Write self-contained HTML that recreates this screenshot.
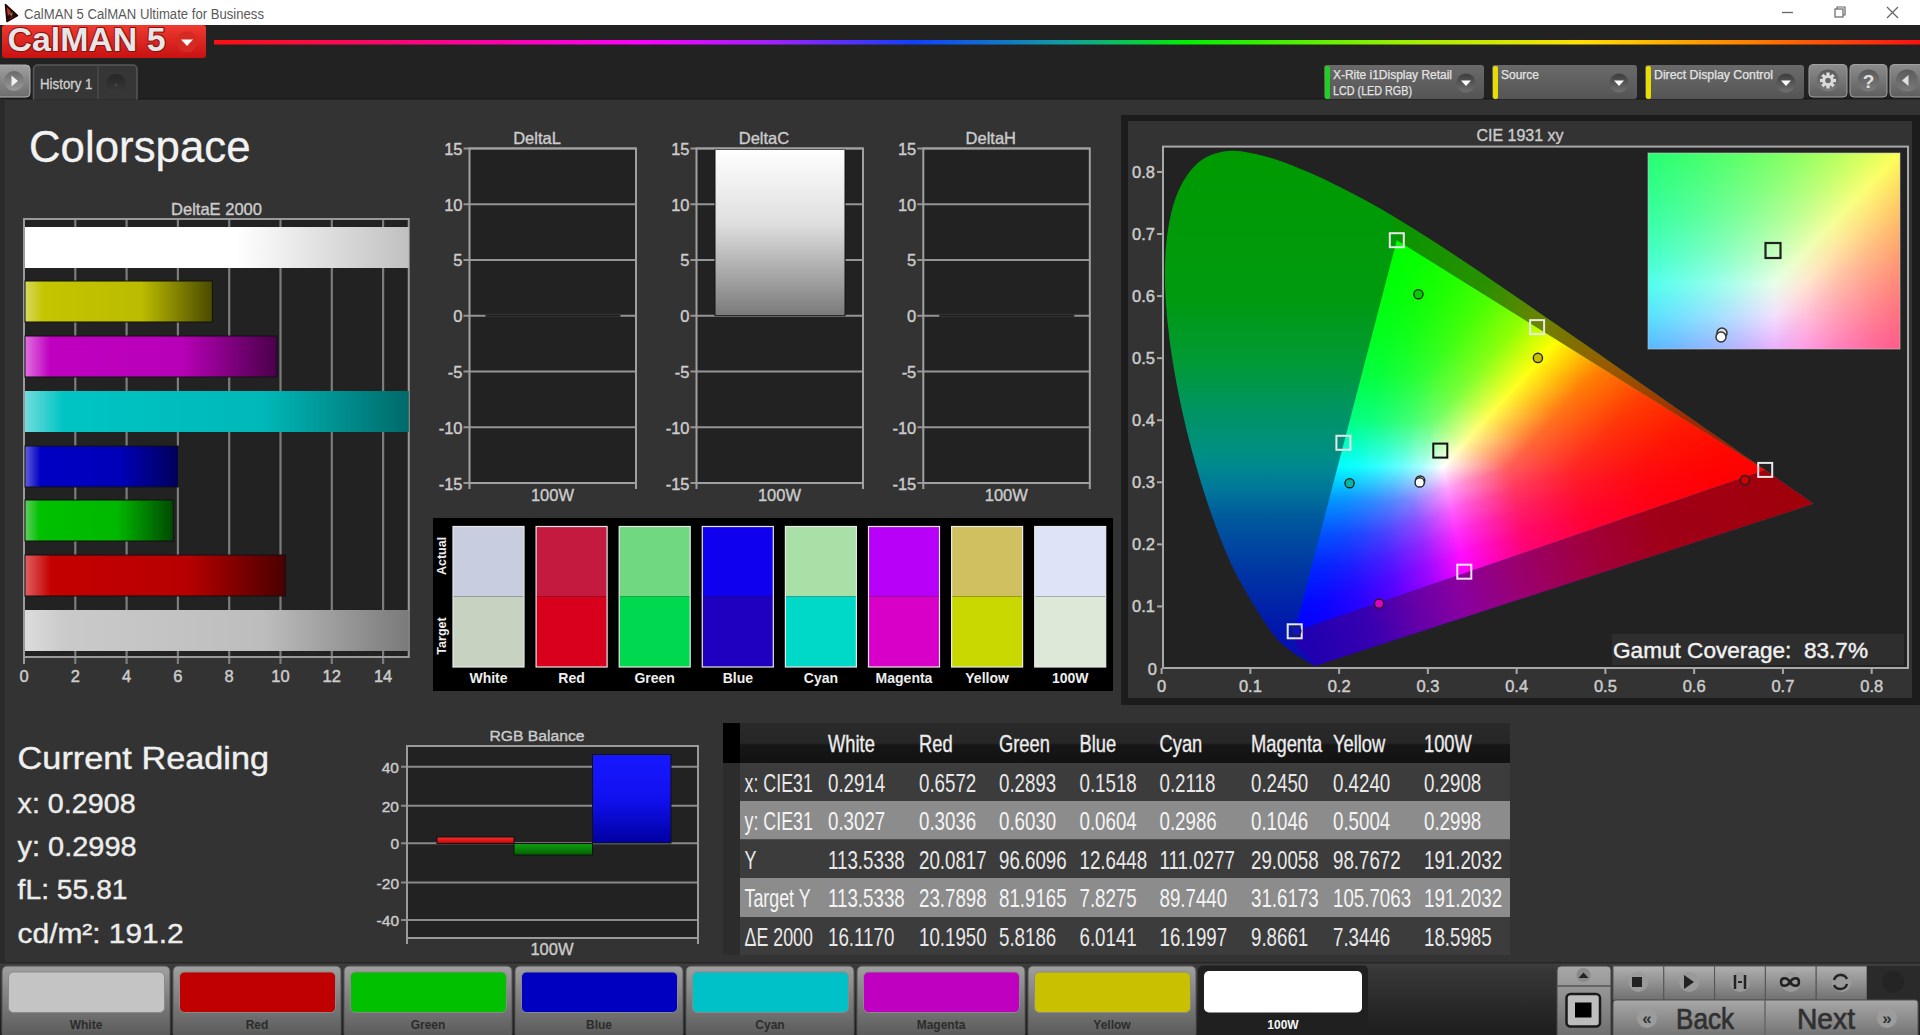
<!DOCTYPE html>
<html><head><meta charset="utf-8"><title>CalMAN</title>
<style>html,body{margin:0;padding:0;width:1920px;height:1035px;overflow:hidden;background:#333}svg{display:block}text{font-family:"Liberation Sans", sans-serif}</style>
</head><body><svg width="1920" height="1035" viewBox="0 0 1920 1035"><defs><linearGradient id="g1" x1="0" y1="0" x2="0" y2="1"><stop offset="0" stop-color="#ee3a30"/><stop offset="1" stop-color="#c81212"/></linearGradient><linearGradient id="g2" x1="0" y1="0" x2="1" y2="0"><stop offset="0" stop-color="#ff1010"/><stop offset="0.17" stop-color="#ff00b0"/><stop offset="0.25" stop-color="#ff00ff"/><stop offset="0.33" stop-color="#a020ff"/><stop offset="0.41" stop-color="#1040ff"/><stop offset="0.5" stop-color="#10a0a0"/><stop offset="0.57" stop-color="#00f000"/><stop offset="0.7" stop-color="#a0f000"/><stop offset="0.8" stop-color="#ffe000"/><stop offset="0.9" stop-color="#ff8000"/><stop offset="1" stop-color="#ff1010"/></linearGradient><linearGradient id="g3" x1="0" y1="0" x2="0" y2="1"><stop offset="0" stop-color="#a0a0a0"/><stop offset="1" stop-color="#6c6c6c"/></linearGradient><linearGradient id="g4" x1="0" y1="0" x2="0" y2="1"><stop offset="0" stop-color="#6a6a6a"/><stop offset="1" stop-color="#9a9a9a"/></linearGradient><linearGradient id="g5" x1="0" y1="0" x2="0" y2="1"><stop offset="0" stop-color="#262626"/><stop offset="1" stop-color="#3a3a3a"/></linearGradient><linearGradient id="g6" x1="0" y1="0" x2="0" y2="1"><stop offset="0" stop-color="#6a6a6a"/><stop offset="1" stop-color="#555555"/></linearGradient><linearGradient id="g7" x1="0" y1="0" x2="0" y2="1"><stop offset="0" stop-color="#3c3c3c"/><stop offset="1" stop-color="#707070"/></linearGradient><linearGradient id="g8" x1="0" y1="0" x2="0" y2="1"><stop offset="0" stop-color="#6a6a6a"/><stop offset="1" stop-color="#555555"/></linearGradient><linearGradient id="g9" x1="0" y1="0" x2="0" y2="1"><stop offset="0" stop-color="#3c3c3c"/><stop offset="1" stop-color="#707070"/></linearGradient><linearGradient id="g10" x1="0" y1="0" x2="0" y2="1"><stop offset="0" stop-color="#6a6a6a"/><stop offset="1" stop-color="#555555"/></linearGradient><linearGradient id="g11" x1="0" y1="0" x2="0" y2="1"><stop offset="0" stop-color="#3c3c3c"/><stop offset="1" stop-color="#707070"/></linearGradient><linearGradient id="g12" x1="0" y1="0" x2="0" y2="1"><stop offset="0" stop-color="#8c8c8c"/><stop offset="1" stop-color="#5e5e5e"/></linearGradient><linearGradient id="g13" x1="0" y1="0" x2="0" y2="1"><stop offset="0" stop-color="#5a5a5a"/><stop offset="1" stop-color="#7a7a7a"/></linearGradient><linearGradient id="g14" x1="0" y1="0" x2="0" y2="1"><stop offset="0" stop-color="#8c8c8c"/><stop offset="1" stop-color="#5e5e5e"/></linearGradient><linearGradient id="g15" x1="0" y1="0" x2="0" y2="1"><stop offset="0" stop-color="#5a5a5a"/><stop offset="1" stop-color="#7a7a7a"/></linearGradient><linearGradient id="g16" x1="0" y1="0" x2="0" y2="1"><stop offset="0" stop-color="#8c8c8c"/><stop offset="1" stop-color="#5e5e5e"/></linearGradient><linearGradient id="g17" x1="0" y1="0" x2="0" y2="1"><stop offset="0" stop-color="#5a5a5a"/><stop offset="1" stop-color="#7a7a7a"/></linearGradient><linearGradient id="g18" x1="0" y1="0" x2="1" y2="0"><stop offset="0" stop-color="#ffffff"/><stop offset="0.55" stop-color="#ffffff"/><stop offset="1" stop-color="#c0c0c0"/></linearGradient><linearGradient id="g19" x1="0" y1="0" x2="1" y2="0"><stop offset="0" stop-color="#d8d860"/><stop offset="0.1" stop-color="#c4c400"/><stop offset="0.62" stop-color="#bcbc00"/><stop offset="1" stop-color="#4a4a00"/></linearGradient><linearGradient id="g20" x1="0" y1="0" x2="1" y2="0"><stop offset="0" stop-color="#e070e0"/><stop offset="0.1" stop-color="#c000c0"/><stop offset="0.62" stop-color="#b800b8"/><stop offset="1" stop-color="#4a004a"/></linearGradient><linearGradient id="g21" x1="0" y1="0" x2="1" y2="0"><stop offset="0" stop-color="#70dcdc"/><stop offset="0.1" stop-color="#00c4c4"/><stop offset="0.62" stop-color="#00b8b8"/><stop offset="1" stop-color="#006a6a"/></linearGradient><linearGradient id="g22" x1="0" y1="0" x2="1" y2="0"><stop offset="0" stop-color="#6060e0"/><stop offset="0.1" stop-color="#0000c4"/><stop offset="0.62" stop-color="#0000b8"/><stop offset="1" stop-color="#000058"/></linearGradient><linearGradient id="g23" x1="0" y1="0" x2="1" y2="0"><stop offset="0" stop-color="#60d060"/><stop offset="0.1" stop-color="#00c000"/><stop offset="0.62" stop-color="#00b800"/><stop offset="1" stop-color="#004a00"/></linearGradient><linearGradient id="g24" x1="0" y1="0" x2="1" y2="0"><stop offset="0" stop-color="#e06060"/><stop offset="0.1" stop-color="#c40000"/><stop offset="0.62" stop-color="#b80000"/><stop offset="1" stop-color="#4a0000"/></linearGradient><linearGradient id="g25" x1="0" y1="0" x2="1" y2="0"><stop offset="0" stop-color="#dcdcdc"/><stop offset="0.1" stop-color="#cacaca"/><stop offset="0.62" stop-color="#bdbdbd"/><stop offset="1" stop-color="#7a7a7a"/></linearGradient><linearGradient id="g26" x1="0" y1="0" x2="0" y2="1"><stop offset="0" stop-color="#ff3030"/><stop offset="1" stop-color="#c00000"/></linearGradient><linearGradient id="g27" x1="0" y1="0" x2="0" y2="1"><stop offset="0" stop-color="#10a010"/><stop offset="1" stop-color="#006000"/></linearGradient><linearGradient id="g28" x1="0" y1="0" x2="0" y2="1"><stop offset="0" stop-color="#1818ff"/><stop offset="0.5" stop-color="#1010f0"/><stop offset="1" stop-color="#0000a0"/></linearGradient><linearGradient id="g29" x1="0" y1="0" x2="0" y2="1"><stop offset="0" stop-color="#ffffff"/><stop offset="0.45" stop-color="#dedede"/><stop offset="1" stop-color="#7a7a7a"/></linearGradient><clipPath id="horse"><path d="M1316.1 665.4 C1316.1 665.4 1316.0 665.4 1315.9 665.5 C1315.7 665.5 1315.6 665.5 1315.4 665.5 C1315.2 665.5 1315.1 665.6 1314.8 665.5 C1314.5 665.5 1314.3 665.6 1313.7 665.3 C1313.2 665.1 1312.6 664.8 1311.5 664.2 C1310.5 663.6 1309.3 662.9 1307.5 661.7 C1305.7 660.6 1303.6 659.5 1300.6 657.5 C1297.6 655.6 1294.2 654.2 1289.4 650.1 C1284.6 645.9 1279.5 643.3 1271.8 632.6 C1264.0 622.0 1250.8 600.9 1242.6 586.1 C1234.4 571.4 1229.4 560.7 1222.6 543.9 C1215.8 527.1 1208.6 507.3 1201.9 485.4 C1195.2 463.5 1188.0 437.5 1182.5 412.3 C1177.0 387.2 1171.8 359.4 1168.9 334.3 C1166.0 309.3 1164.2 284.0 1165.1 262.1 C1165.9 240.2 1168.8 219.1 1173.9 202.9 C1179.1 186.6 1187.2 173.1 1196.1 164.5 C1205.1 155.8 1216.4 152.4 1227.5 151.0 C1238.7 149.5 1251.1 152.8 1263.0 155.7 C1274.9 158.6 1287.3 163.7 1298.9 168.3 C1310.6 172.9 1321.7 178.0 1332.8 183.4 C1343.9 188.7 1354.6 194.4 1365.4 200.3 C1376.2 206.2 1386.9 212.5 1397.5 218.9 C1408.2 225.3 1418.7 232.0 1429.3 238.8 C1439.9 245.6 1450.4 252.5 1461.0 259.5 C1471.6 266.5 1482.2 273.7 1492.8 280.9 C1503.3 288.0 1513.9 295.3 1524.4 302.5 C1534.9 309.8 1545.4 317.0 1555.8 324.2 C1566.2 331.4 1576.5 338.6 1586.6 345.6 C1596.7 352.7 1606.7 359.7 1616.5 366.5 C1626.3 373.3 1635.9 380.0 1645.2 386.5 C1654.4 392.9 1663.6 399.2 1672.1 405.2 C1680.7 411.2 1689.1 417.0 1696.7 422.4 C1704.4 427.7 1711.4 432.6 1718.1 437.3 C1724.8 442.0 1731.2 446.4 1736.9 450.4 C1742.7 454.4 1747.8 457.9 1752.6 461.2 C1757.3 464.5 1761.5 467.4 1765.3 470.1 C1769.1 472.7 1772.3 475.0 1775.4 477.1 C1778.4 479.2 1781.0 481.0 1783.5 482.7 C1785.9 484.4 1787.9 485.9 1789.9 487.3 C1791.9 488.6 1793.7 489.9 1795.3 491.0 C1797.0 492.2 1798.5 493.2 1799.8 494.1 C1801.1 495.1 1802.3 495.9 1803.3 496.6 C1804.4 497.3 1804.3 497.2 1806.0 498.4 C1807.7 499.6 1812.4 502.9 1813.7 503.8 Z"/></clipPath><linearGradient id="g30" x1="0" y1="146.6" x2="0" y2="668" gradientUnits="userSpaceOnUse"><stop offset="0" stop-color="#009a00"/><stop offset="0.29" stop-color="#009a10"/><stop offset="0.42" stop-color="#009a38"/><stop offset="0.5" stop-color="#009460"/><stop offset="0.58" stop-color="#009080"/><stop offset="0.61" stop-color="#008a8e"/><stop offset="0.66" stop-color="#00769a"/><stop offset="0.71" stop-color="#005a9c"/><stop offset="0.82" stop-color="#0034a4"/><stop offset="0.92" stop-color="#0018ac"/><stop offset="1" stop-color="#1008b4"/></linearGradient><linearGradient id="g31" x1="1396.8139999999999" y1="240.21699999999998" x2="1813.71972" y2="503.82829000000004" gradientUnits="userSpaceOnUse"><stop offset="0" stop-color="#0a9400"/><stop offset="0.2" stop-color="#2a9000"/><stop offset="0.33" stop-color="#6a8400"/><stop offset="0.5" stop-color="#9a5a00"/><stop offset="0.7" stop-color="#a02800"/><stop offset="1" stop-color="#a00800"/></linearGradient><linearGradient id="g32" x1="1316.13116" y1="665.3965" x2="1813.71972" y2="503.82829000000004" gradientUnits="userSpaceOnUse"><stop offset="0" stop-color="#2000b0"/><stop offset="0.12" stop-color="#3800b0"/><stop offset="0.22" stop-color="#6800a8"/><stop offset="0.3" stop-color="#8800a0"/><stop offset="0.42" stop-color="#9a0070"/><stop offset="0.55" stop-color="#a00040"/><stop offset="0.7" stop-color="#a00018"/><stop offset="1" stop-color="#a00008"/></linearGradient><clipPath id="tri"><polygon points="1396.8,240.2 1765.2,469.9 1294.7,631.3"/></clipPath><linearGradient id="m0_1" gradientUnits="userSpaceOnUse" x1="1509.0" y1="467.6" x2="1472.4" y2="434.5"><stop stop-color="#0f0" stop-opacity="0.359"/><stop offset="1" stop-color="#0f0" stop-opacity="1.000"/></linearGradient><linearGradient id="m0_2" gradientUnits="userSpaceOnUse" x1="1509.0" y1="467.6" x2="1466.5" y2="498.9"><stop stop-color="#00f" stop-opacity="0.359"/><stop offset="1" stop-color="#00f" stop-opacity="1.000"/></linearGradient><linearGradient id="m0_3" gradientUnits="userSpaceOnUse" x1="1509.0" y1="467.6" x2="1476.8" y2="431.7"><stop stop-color="#0f0" stop-opacity="0.359"/><stop offset="1" stop-color="#0f0" stop-opacity="1.000"/></linearGradient><linearGradient id="m0_4" gradientUnits="userSpaceOnUse" x1="1532.5" y1="441.6" x2="1467.6" y2="449.9"><stop stop-color="#00f" stop-opacity="0.205"/><stop offset="1" stop-color="#00f" stop-opacity="0.584"/></linearGradient><linearGradient id="m0_5" gradientUnits="userSpaceOnUse" x1="1532.5" y1="441.6" x2="1495.8" y2="408.5"><stop stop-color="#0f0" stop-opacity="0.408"/><stop offset="1" stop-color="#0f0" stop-opacity="1.000"/></linearGradient><linearGradient id="m0_6" gradientUnits="userSpaceOnUse" x1="1532.5" y1="441.6" x2="1495.3" y2="474.1"><stop stop-color="#00f" stop-opacity="0.205"/><stop offset="1" stop-color="#00f" stop-opacity="0.584"/></linearGradient><linearGradient id="m0_7" gradientUnits="userSpaceOnUse" x1="1532.5" y1="441.6" x2="1500.0" y2="405.9"><stop stop-color="#0f0" stop-opacity="0.408"/><stop offset="1" stop-color="#0f0" stop-opacity="1.000"/></linearGradient><linearGradient id="m0_8" gradientUnits="userSpaceOnUse" x1="1555.9" y1="415.6" x2="1496.6" y2="435.3"><stop stop-color="#00f" stop-opacity="0.099"/><stop offset="1" stop-color="#00f" stop-opacity="0.318"/></linearGradient><linearGradient id="m0_9" gradientUnits="userSpaceOnUse" x1="1555.9" y1="415.6" x2="1519.2" y2="382.5"><stop stop-color="#0f0" stop-opacity="0.450"/><stop offset="1" stop-color="#0f0" stop-opacity="1.000"/></linearGradient><linearGradient id="m0_10" gradientUnits="userSpaceOnUse" x1="1555.9" y1="415.6" x2="1525.3" y2="448.3"><stop stop-color="#00f" stop-opacity="0.099"/><stop offset="1" stop-color="#00f" stop-opacity="0.318"/></linearGradient><linearGradient id="m0_11" gradientUnits="userSpaceOnUse" x1="1555.9" y1="415.6" x2="1523.1" y2="380.0"><stop stop-color="#0f0" stop-opacity="0.450"/><stop offset="1" stop-color="#0f0" stop-opacity="1.000"/></linearGradient><linearGradient id="m0_12" gradientUnits="userSpaceOnUse" x1="1579.4" y1="389.7" x2="1530.6" y2="418.4"><stop stop-color="#00f" stop-opacity="0.030"/><stop offset="1" stop-color="#00f" stop-opacity="0.147"/></linearGradient><linearGradient id="m0_13" gradientUnits="userSpaceOnUse" x1="1579.4" y1="389.7" x2="1542.7" y2="356.6"><stop stop-color="#0f0" stop-opacity="0.486"/><stop offset="1" stop-color="#0f0" stop-opacity="1.000"/></linearGradient><linearGradient id="m0_14" gradientUnits="userSpaceOnUse" x1="1579.4" y1="389.7" x2="1555.8" y2="421.0"><stop stop-color="#00f" stop-opacity="0.030"/><stop offset="1" stop-color="#00f" stop-opacity="0.147"/></linearGradient><linearGradient id="m0_15" gradientUnits="userSpaceOnUse" x1="1579.4" y1="389.7" x2="1546.3" y2="354.2"><stop stop-color="#0f0" stop-opacity="0.486"/><stop offset="1" stop-color="#0f0" stop-opacity="1.000"/></linearGradient><linearGradient id="m0_16" gradientUnits="userSpaceOnUse" x1="1602.8" y1="363.7" x2="1565.0" y2="396.1"><stop stop-color="#00f" stop-opacity="0.000"/><stop offset="1" stop-color="#00f" stop-opacity="0.043"/></linearGradient><linearGradient id="m0_17" gradientUnits="userSpaceOnUse" x1="1602.8" y1="363.7" x2="1566.1" y2="330.6"><stop stop-color="#0f0" stop-opacity="0.519"/><stop offset="1" stop-color="#0f0" stop-opacity="1.000"/></linearGradient><linearGradient id="m0_18" gradientUnits="userSpaceOnUse" x1="1602.8" y1="363.7" x2="1584.6" y2="392.9"><stop stop-color="#00f" stop-opacity="0.000"/><stop offset="1" stop-color="#00f" stop-opacity="0.043"/></linearGradient><linearGradient id="m0_19" gradientUnits="userSpaceOnUse" x1="1575.1" y1="468.2" x2="1549.6" y2="430.1"><stop stop-color="#0f0" stop-opacity="0.147"/><stop offset="1" stop-color="#0f0" stop-opacity="0.408"/></linearGradient><linearGradient id="m0_20" gradientUnits="userSpaceOnUse" x1="1575.1" y1="468.2" x2="1539.8" y2="500.8"><stop stop-color="#00f" stop-opacity="0.147"/><stop offset="1" stop-color="#00f" stop-opacity="0.359"/></linearGradient><linearGradient id="m0_21" gradientUnits="userSpaceOnUse" x1="1575.1" y1="468.2" x2="1547.7" y2="430.5"><stop stop-color="#0f0" stop-opacity="0.147"/><stop offset="1" stop-color="#0f0" stop-opacity="0.408"/></linearGradient><linearGradient id="m0_22" gradientUnits="userSpaceOnUse" x1="1598.5" y1="442.2" x2="1546.7" y2="469.1"><stop stop-color="#00f" stop-opacity="0.073"/><stop offset="1" stop-color="#00f" stop-opacity="0.205"/></linearGradient><linearGradient id="m0_23" gradientUnits="userSpaceOnUse" x1="1598.5" y1="442.2" x2="1571.5" y2="404.5"><stop stop-color="#0f0" stop-opacity="0.188"/><stop offset="1" stop-color="#0f0" stop-opacity="0.450"/></linearGradient><linearGradient id="m0_24" gradientUnits="userSpaceOnUse" x1="1598.5" y1="442.2" x2="1569.4" y2="474.7"><stop stop-color="#00f" stop-opacity="0.073"/><stop offset="1" stop-color="#00f" stop-opacity="0.205"/></linearGradient><linearGradient id="m0_25" gradientUnits="userSpaceOnUse" x1="1598.5" y1="442.2" x2="1570.5" y2="404.8"><stop stop-color="#0f0" stop-opacity="0.188"/><stop offset="1" stop-color="#0f0" stop-opacity="0.450"/></linearGradient><linearGradient id="m0_26" gradientUnits="userSpaceOnUse" x1="1622.0" y1="416.2" x2="1580.2" y2="447.8"><stop stop-color="#00f" stop-opacity="0.022"/><stop offset="1" stop-color="#00f" stop-opacity="0.099"/></linearGradient><linearGradient id="m0_27" gradientUnits="userSpaceOnUse" x1="1622.0" y1="416.2" x2="1593.7" y2="378.8"><stop stop-color="#0f0" stop-opacity="0.225"/><stop offset="1" stop-color="#0f0" stop-opacity="0.486"/></linearGradient><linearGradient id="m0_28" gradientUnits="userSpaceOnUse" x1="1622.0" y1="416.2" x2="1599.2" y2="447.3"><stop stop-color="#00f" stop-opacity="0.022"/><stop offset="1" stop-color="#00f" stop-opacity="0.099"/></linearGradient><linearGradient id="m0_29" gradientUnits="userSpaceOnUse" x1="1622.0" y1="416.2" x2="1593.3" y2="379.0"><stop stop-color="#0f0" stop-opacity="0.225"/><stop offset="1" stop-color="#0f0" stop-opacity="0.486"/></linearGradient><linearGradient id="m0_30" gradientUnits="userSpaceOnUse" x1="1645.4" y1="390.3" x2="1612.2" y2="423.0"><stop stop-color="#00f" stop-opacity="0.000"/><stop offset="1" stop-color="#00f" stop-opacity="0.030"/></linearGradient><linearGradient id="m0_31" gradientUnits="userSpaceOnUse" x1="1645.4" y1="390.3" x2="1616.2" y2="353.2"><stop stop-color="#0f0" stop-opacity="0.260"/><stop offset="1" stop-color="#0f0" stop-opacity="0.519"/></linearGradient><linearGradient id="m0_32" gradientUnits="userSpaceOnUse" x1="1645.4" y1="390.3" x2="1627.2" y2="419.5"><stop stop-color="#00f" stop-opacity="0.000"/><stop offset="1" stop-color="#00f" stop-opacity="0.030"/></linearGradient><linearGradient id="m0_33" gradientUnits="userSpaceOnUse" x1="1641.1" y1="468.8" x2="1622.5" y2="430.5"><stop stop-color="#0f0" stop-opacity="0.056"/><stop offset="1" stop-color="#0f0" stop-opacity="0.188"/></linearGradient><linearGradient id="m0_34" gradientUnits="userSpaceOnUse" x1="1641.1" y1="468.8" x2="1613.3" y2="501.1"><stop stop-color="#00f" stop-opacity="0.056"/><stop offset="1" stop-color="#00f" stop-opacity="0.147"/></linearGradient><linearGradient id="m0_35" gradientUnits="userSpaceOnUse" x1="1641.1" y1="468.8" x2="1617.7" y2="430.5"><stop stop-color="#0f0" stop-opacity="0.056"/><stop offset="1" stop-color="#0f0" stop-opacity="0.188"/></linearGradient><linearGradient id="m0_36" gradientUnits="userSpaceOnUse" x1="1664.6" y1="442.8" x2="1627.4" y2="475.3"><stop stop-color="#00f" stop-opacity="0.018"/><stop offset="1" stop-color="#00f" stop-opacity="0.073"/></linearGradient><linearGradient id="m0_37" gradientUnits="userSpaceOnUse" x1="1664.6" y1="442.8" x2="1643.9" y2="404.4"><stop stop-color="#0f0" stop-opacity="0.085"/><stop offset="1" stop-color="#0f0" stop-opacity="0.225"/></linearGradient><linearGradient id="m0_38" gradientUnits="userSpaceOnUse" x1="1664.6" y1="442.8" x2="1642.3" y2="473.7"><stop stop-color="#00f" stop-opacity="0.018"/><stop offset="1" stop-color="#00f" stop-opacity="0.073"/></linearGradient><linearGradient id="m0_39" gradientUnits="userSpaceOnUse" x1="1664.6" y1="442.8" x2="1640.3" y2="404.6"><stop stop-color="#0f0" stop-opacity="0.085"/><stop offset="1" stop-color="#0f0" stop-opacity="0.225"/></linearGradient><linearGradient id="m0_40" gradientUnits="userSpaceOnUse" x1="1688.0" y1="416.8" x2="1657.8" y2="449.4"><stop stop-color="#00f" stop-opacity="0.000"/><stop offset="1" stop-color="#00f" stop-opacity="0.022"/></linearGradient><linearGradient id="m0_41" gradientUnits="userSpaceOnUse" x1="1688.0" y1="416.8" x2="1665.7" y2="378.5"><stop stop-color="#0f0" stop-opacity="0.114"/><stop offset="1" stop-color="#0f0" stop-opacity="0.260"/></linearGradient><linearGradient id="m0_42" gradientUnits="userSpaceOnUse" x1="1688.0" y1="416.8" x2="1669.8" y2="446.1"><stop stop-color="#00f" stop-opacity="0.000"/><stop offset="1" stop-color="#00f" stop-opacity="0.022"/></linearGradient><linearGradient id="m0_43" gradientUnits="userSpaceOnUse" x1="1707.2" y1="469.4" x2="1693.4" y2="432.1"><stop stop-color="#0f0" stop-opacity="0.014"/><stop offset="1" stop-color="#0f0" stop-opacity="0.085"/></linearGradient><linearGradient id="m0_44" gradientUnits="userSpaceOnUse" x1="1707.2" y1="469.4" x2="1685.4" y2="500.1"><stop stop-color="#00f" stop-opacity="0.014"/><stop offset="1" stop-color="#00f" stop-opacity="0.056"/></linearGradient><linearGradient id="m0_45" gradientUnits="userSpaceOnUse" x1="1707.2" y1="469.4" x2="1686.3" y2="431.0"><stop stop-color="#0f0" stop-opacity="0.014"/><stop offset="1" stop-color="#0f0" stop-opacity="0.085"/></linearGradient><linearGradient id="m0_46" gradientUnits="userSpaceOnUse" x1="1730.6" y1="443.4" x2="1702.4" y2="475.8"><stop stop-color="#00f" stop-opacity="0.000"/><stop offset="1" stop-color="#00f" stop-opacity="0.018"/></linearGradient><linearGradient id="m0_47" gradientUnits="userSpaceOnUse" x1="1730.6" y1="443.4" x2="1714.5" y2="405.5"><stop stop-color="#0f0" stop-opacity="0.033"/><stop offset="1" stop-color="#0f0" stop-opacity="0.114"/></linearGradient><linearGradient id="m0_48" gradientUnits="userSpaceOnUse" x1="1730.6" y1="443.4" x2="1712.4" y2="472.6"><stop stop-color="#00f" stop-opacity="0.000"/><stop offset="1" stop-color="#00f" stop-opacity="0.018"/></linearGradient><linearGradient id="m0_49" gradientUnits="userSpaceOnUse" x1="1773.2" y1="469.9" x2="1765.3" y2="435.4"><stop stop-color="#0f0" stop-opacity="0.000"/><stop offset="1" stop-color="#0f0" stop-opacity="0.033"/></linearGradient><linearGradient id="m0_50" gradientUnits="userSpaceOnUse" x1="1773.2" y1="469.9" x2="1755.0" y2="499.2"><stop stop-color="#00f" stop-opacity="0.000"/><stop offset="1" stop-color="#00f" stop-opacity="0.014"/></linearGradient><linearGradient id="m1_1" gradientUnits="userSpaceOnUse" x1="1433.5" y1="420.5" x2="1461.9" y2="446.1"><stop stop-color="#f00" stop-opacity="0.429"/><stop offset="1" stop-color="#f00" stop-opacity="1.000"/></linearGradient><linearGradient id="m1_2" gradientUnits="userSpaceOnUse" x1="1433.5" y1="420.5" x2="1422.8" y2="461.8"><stop stop-color="#00f" stop-opacity="0.429"/><stop offset="1" stop-color="#00f" stop-opacity="1.000"/></linearGradient><linearGradient id="m1_3" gradientUnits="userSpaceOnUse" x1="1433.5" y1="420.5" x2="1464.6" y2="443.5"><stop stop-color="#f00" stop-opacity="0.429"/><stop offset="1" stop-color="#f00" stop-opacity="1.000"/></linearGradient><linearGradient id="m1_4" gradientUnits="userSpaceOnUse" x1="1457.0" y1="394.5" x2="1457.9" y2="441.2"><stop stop-color="#00f" stop-opacity="0.241"/><stop offset="1" stop-color="#00f" stop-opacity="0.584"/></linearGradient><linearGradient id="m1_5" gradientUnits="userSpaceOnUse" x1="1424.1" y1="374.0" x2="1457.3" y2="394.0"><stop stop-color="#f00" stop-opacity="0.191"/><stop offset="1" stop-color="#f00" stop-opacity="0.478"/></linearGradient><linearGradient id="m1_6" gradientUnits="userSpaceOnUse" x1="1424.1" y1="374.0" x2="1410.7" y2="412.5"><stop stop-color="#00f" stop-opacity="0.191"/><stop offset="1" stop-color="#00f" stop-opacity="0.429"/></linearGradient><linearGradient id="m1_7" gradientUnits="userSpaceOnUse" x1="1424.1" y1="374.0" x2="1457.2" y2="394.2"><stop stop-color="#f00" stop-opacity="0.191"/><stop offset="1" stop-color="#f00" stop-opacity="0.478"/></linearGradient><linearGradient id="m1_8" gradientUnits="userSpaceOnUse" x1="1447.5" y1="348.0" x2="1440.3" y2="391.8"><stop stop-color="#00f" stop-opacity="0.093"/><stop offset="1" stop-color="#00f" stop-opacity="0.241"/></linearGradient><linearGradient id="m1_9" gradientUnits="userSpaceOnUse" x1="1414.6" y1="327.5" x2="1449.8" y2="342.6"><stop stop-color="#f00" stop-opacity="0.077"/><stop offset="1" stop-color="#f00" stop-opacity="0.239"/></linearGradient><linearGradient id="m1_10" gradientUnits="userSpaceOnUse" x1="1414.6" y1="327.5" x2="1398.8" y2="362.7"><stop stop-color="#00f" stop-opacity="0.077"/><stop offset="1" stop-color="#00f" stop-opacity="0.191"/></linearGradient><linearGradient id="m1_11" gradientUnits="userSpaceOnUse" x1="1414.6" y1="327.5" x2="1449.0" y2="345.2"><stop stop-color="#f00" stop-opacity="0.077"/><stop offset="1" stop-color="#f00" stop-opacity="0.239"/></linearGradient><linearGradient id="m1_12" gradientUnits="userSpaceOnUse" x1="1438.0" y1="301.6" x2="1425.3" y2="340.8"><stop stop-color="#00f" stop-opacity="0.024"/><stop offset="1" stop-color="#00f" stop-opacity="0.093"/></linearGradient><linearGradient id="m1_13" gradientUnits="userSpaceOnUse" x1="1405.1" y1="281.0" x2="1441.0" y2="291.9"><stop stop-color="#f00" stop-opacity="0.020"/><stop offset="1" stop-color="#f00" stop-opacity="0.115"/></linearGradient><linearGradient id="m1_14" gradientUnits="userSpaceOnUse" x1="1405.1" y1="281.0" x2="1387.7" y2="312.8"><stop stop-color="#00f" stop-opacity="0.020"/><stop offset="1" stop-color="#00f" stop-opacity="0.077"/></linearGradient><linearGradient id="m1_15" gradientUnits="userSpaceOnUse" x1="1405.1" y1="281.0" x2="1440.1" y2="297.0"><stop stop-color="#f00" stop-opacity="0.020"/><stop offset="1" stop-color="#f00" stop-opacity="0.115"/></linearGradient><linearGradient id="m1_16" gradientUnits="userSpaceOnUse" x1="1428.6" y1="255.1" x2="1413.0" y2="290.5"><stop stop-color="#00f" stop-opacity="0.000"/><stop offset="1" stop-color="#00f" stop-opacity="0.024"/></linearGradient><linearGradient id="m1_17" gradientUnits="userSpaceOnUse" x1="1395.7" y1="234.5" x2="1430.7" y2="239.2"><stop stop-color="#f00" stop-opacity="0.000"/><stop offset="1" stop-color="#f00" stop-opacity="0.046"/></linearGradient><linearGradient id="m1_18" gradientUnits="userSpaceOnUse" x1="1428.6" y1="255.1" x2="1410.3" y2="284.3"><stop stop-color="#00f" stop-opacity="0.000"/><stop offset="1" stop-color="#00f" stop-opacity="0.020"/></linearGradient><linearGradient id="m1_19" gradientUnits="userSpaceOnUse" x1="1457.0" y1="394.5" x2="1485.3" y2="420.1"><stop stop-color="#f00" stop-opacity="0.478"/><stop offset="1" stop-color="#f00" stop-opacity="1.000"/></linearGradient><linearGradient id="m1_20" gradientUnits="userSpaceOnUse" x1="1457.0" y1="394.5" x2="1444.1" y2="433.7"><stop stop-color="#00f" stop-opacity="0.241"/><stop offset="1" stop-color="#00f" stop-opacity="0.584"/></linearGradient><linearGradient id="m1_21" gradientUnits="userSpaceOnUse" x1="1457.0" y1="394.5" x2="1487.8" y2="417.8"><stop stop-color="#f00" stop-opacity="0.478"/><stop offset="1" stop-color="#f00" stop-opacity="1.000"/></linearGradient><linearGradient id="m1_22" gradientUnits="userSpaceOnUse" x1="1480.4" y1="368.6" x2="1475.8" y2="413.6"><stop stop-color="#00f" stop-opacity="0.115"/><stop offset="1" stop-color="#00f" stop-opacity="0.318"/></linearGradient><linearGradient id="m1_23" gradientUnits="userSpaceOnUse" x1="1447.5" y1="348.0" x2="1480.2" y2="368.9"><stop stop-color="#f00" stop-opacity="0.239"/><stop offset="1" stop-color="#f00" stop-opacity="0.521"/></linearGradient><linearGradient id="m1_24" gradientUnits="userSpaceOnUse" x1="1447.5" y1="348.0" x2="1432.0" y2="383.7"><stop stop-color="#00f" stop-opacity="0.093"/><stop offset="1" stop-color="#00f" stop-opacity="0.241"/></linearGradient><linearGradient id="m1_25" gradientUnits="userSpaceOnUse" x1="1447.5" y1="348.0" x2="1480.3" y2="368.7"><stop stop-color="#f00" stop-opacity="0.239"/><stop offset="1" stop-color="#f00" stop-opacity="0.521"/></linearGradient><linearGradient id="m1_26" gradientUnits="userSpaceOnUse" x1="1470.9" y1="322.1" x2="1459.3" y2="362.5"><stop stop-color="#00f" stop-opacity="0.028"/><stop offset="1" stop-color="#00f" stop-opacity="0.115"/></linearGradient><linearGradient id="m1_27" gradientUnits="userSpaceOnUse" x1="1438.0" y1="301.6" x2="1472.8" y2="318.2"><stop stop-color="#f00" stop-opacity="0.115"/><stop offset="1" stop-color="#f00" stop-opacity="0.283"/></linearGradient><linearGradient id="m1_28" gradientUnits="userSpaceOnUse" x1="1438.0" y1="301.6" x2="1420.7" y2="333.5"><stop stop-color="#00f" stop-opacity="0.024"/><stop offset="1" stop-color="#00f" stop-opacity="0.093"/></linearGradient><linearGradient id="m1_29" gradientUnits="userSpaceOnUse" x1="1438.0" y1="301.6" x2="1472.2" y2="319.8"><stop stop-color="#f00" stop-opacity="0.115"/><stop offset="1" stop-color="#f00" stop-opacity="0.283"/></linearGradient><linearGradient id="m1_30" gradientUnits="userSpaceOnUse" x1="1461.5" y1="275.6" x2="1446.3" y2="311.7"><stop stop-color="#00f" stop-opacity="0.000"/><stop offset="1" stop-color="#00f" stop-opacity="0.028"/></linearGradient><linearGradient id="m1_31" gradientUnits="userSpaceOnUse" x1="1428.6" y1="255.1" x2="1464.2" y2="268.0"><stop stop-color="#f00" stop-opacity="0.046"/><stop offset="1" stop-color="#f00" stop-opacity="0.151"/></linearGradient><linearGradient id="m1_32" gradientUnits="userSpaceOnUse" x1="1461.5" y1="275.6" x2="1443.3" y2="304.8"><stop stop-color="#00f" stop-opacity="0.000"/><stop offset="1" stop-color="#00f" stop-opacity="0.024"/></linearGradient><linearGradient id="m1_33" gradientUnits="userSpaceOnUse" x1="1480.4" y1="368.6" x2="1508.8" y2="394.1"><stop stop-color="#f00" stop-opacity="0.521"/><stop offset="1" stop-color="#f00" stop-opacity="1.000"/></linearGradient><linearGradient id="m1_34" gradientUnits="userSpaceOnUse" x1="1480.4" y1="368.6" x2="1465.3" y2="404.8"><stop stop-color="#00f" stop-opacity="0.115"/><stop offset="1" stop-color="#00f" stop-opacity="0.318"/></linearGradient><linearGradient id="m1_35" gradientUnits="userSpaceOnUse" x1="1480.4" y1="368.6" x2="1511.1" y2="392.0"><stop stop-color="#f00" stop-opacity="0.521"/><stop offset="1" stop-color="#f00" stop-opacity="1.000"/></linearGradient><linearGradient id="m1_36" gradientUnits="userSpaceOnUse" x1="1503.9" y1="342.6" x2="1493.9" y2="384.5"><stop stop-color="#00f" stop-opacity="0.034"/><stop offset="1" stop-color="#00f" stop-opacity="0.147"/></linearGradient><linearGradient id="m1_37" gradientUnits="userSpaceOnUse" x1="1470.9" y1="322.1" x2="1503.2" y2="343.6"><stop stop-color="#f00" stop-opacity="0.283"/><stop offset="1" stop-color="#f00" stop-opacity="0.557"/></linearGradient><linearGradient id="m1_38" gradientUnits="userSpaceOnUse" x1="1470.9" y1="322.1" x2="1453.7" y2="354.3"><stop stop-color="#00f" stop-opacity="0.028"/><stop offset="1" stop-color="#00f" stop-opacity="0.115"/></linearGradient><linearGradient id="m1_39" gradientUnits="userSpaceOnUse" x1="1470.9" y1="322.1" x2="1503.5" y2="343.1"><stop stop-color="#f00" stop-opacity="0.283"/><stop offset="1" stop-color="#f00" stop-opacity="0.557"/></linearGradient><linearGradient id="m1_40" gradientUnits="userSpaceOnUse" x1="1494.4" y1="296.1" x2="1479.8" y2="333.2"><stop stop-color="#00f" stop-opacity="0.000"/><stop offset="1" stop-color="#00f" stop-opacity="0.034"/></linearGradient><linearGradient id="m1_41" gradientUnits="userSpaceOnUse" x1="1461.5" y1="275.6" x2="1495.8" y2="293.3"><stop stop-color="#f00" stop-opacity="0.151"/><stop offset="1" stop-color="#f00" stop-opacity="0.322"/></linearGradient><linearGradient id="m1_42" gradientUnits="userSpaceOnUse" x1="1494.4" y1="296.1" x2="1476.2" y2="325.3"><stop stop-color="#00f" stop-opacity="0.000"/><stop offset="1" stop-color="#00f" stop-opacity="0.028"/></linearGradient><linearGradient id="m1_43" gradientUnits="userSpaceOnUse" x1="1503.9" y1="342.6" x2="1532.2" y2="368.2"><stop stop-color="#f00" stop-opacity="0.557"/><stop offset="1" stop-color="#f00" stop-opacity="1.000"/></linearGradient><linearGradient id="m1_44" gradientUnits="userSpaceOnUse" x1="1503.9" y1="342.6" x2="1486.8" y2="375.1"><stop stop-color="#00f" stop-opacity="0.034"/><stop offset="1" stop-color="#00f" stop-opacity="0.147"/></linearGradient><linearGradient id="m1_45" gradientUnits="userSpaceOnUse" x1="1503.9" y1="342.6" x2="1534.4" y2="366.2"><stop stop-color="#f00" stop-opacity="0.557"/><stop offset="1" stop-color="#f00" stop-opacity="1.000"/></linearGradient><linearGradient id="m1_46" gradientUnits="userSpaceOnUse" x1="1527.3" y1="316.6" x2="1513.6" y2="354.8"><stop stop-color="#00f" stop-opacity="0.000"/><stop offset="1" stop-color="#00f" stop-opacity="0.043"/></linearGradient><linearGradient id="m1_47" gradientUnits="userSpaceOnUse" x1="1494.4" y1="296.1" x2="1526.3" y2="318.1"><stop stop-color="#f00" stop-opacity="0.322"/><stop offset="1" stop-color="#f00" stop-opacity="0.588"/></linearGradient><linearGradient id="m1_48" gradientUnits="userSpaceOnUse" x1="1527.3" y1="316.6" x2="1509.1" y2="345.8"><stop stop-color="#00f" stop-opacity="0.000"/><stop offset="1" stop-color="#00f" stop-opacity="0.034"/></linearGradient><linearGradient id="m1_49" gradientUnits="userSpaceOnUse" x1="1527.3" y1="316.6" x2="1555.6" y2="342.2"><stop stop-color="#f00" stop-opacity="0.588"/><stop offset="1" stop-color="#f00" stop-opacity="1.000"/></linearGradient><linearGradient id="m1_50" gradientUnits="userSpaceOnUse" x1="1560.2" y1="337.1" x2="1542.0" y2="366.4"><stop stop-color="#00f" stop-opacity="0.000"/><stop offset="1" stop-color="#00f" stop-opacity="0.043"/></linearGradient><linearGradient id="m2_1" gradientUnits="userSpaceOnUse" x1="1433.5" y1="420.5" x2="1460.7" y2="436.1"><stop stop-color="#f00" stop-opacity="0.429"/><stop offset="1" stop-color="#f00" stop-opacity="1.000"/></linearGradient><linearGradient id="m2_2" gradientUnits="userSpaceOnUse" x1="1433.5" y1="420.5" x2="1433.1" y2="466.9"><stop stop-color="#00f" stop-opacity="0.429"/><stop offset="1" stop-color="#00f" stop-opacity="1.000"/></linearGradient><linearGradient id="m2_3" gradientUnits="userSpaceOnUse" x1="1412.0" y1="420.3" x2="1440.3" y2="446.0"><stop stop-color="#f00" stop-opacity="0.262"/><stop offset="1" stop-color="#f00" stop-opacity="0.657"/></linearGradient><linearGradient id="m2_4" gradientUnits="userSpaceOnUse" x1="1433.5" y1="420.5" x2="1429.1" y2="467.5"><stop stop-color="#00f" stop-opacity="0.429"/><stop offset="1" stop-color="#00f" stop-opacity="1.000"/></linearGradient><linearGradient id="m2_5" gradientUnits="userSpaceOnUse" x1="1412.0" y1="420.3" x2="1438.0" y2="433.2"><stop stop-color="#f00" stop-opacity="0.262"/><stop offset="1" stop-color="#f00" stop-opacity="0.657"/></linearGradient><linearGradient id="m2_6" gradientUnits="userSpaceOnUse" x1="1412.0" y1="420.3" x2="1411.6" y2="466.7"><stop stop-color="#00f" stop-opacity="0.451"/><stop offset="1" stop-color="#00f" stop-opacity="1.000"/></linearGradient><linearGradient id="m2_7" gradientUnits="userSpaceOnUse" x1="1390.4" y1="420.1" x2="1418.8" y2="441.1"><stop stop-color="#f00" stop-opacity="0.134"/><stop offset="1" stop-color="#f00" stop-opacity="0.393"/></linearGradient><linearGradient id="m2_8" gradientUnits="userSpaceOnUse" x1="1412.0" y1="420.3" x2="1407.7" y2="467.3"><stop stop-color="#00f" stop-opacity="0.451"/><stop offset="1" stop-color="#00f" stop-opacity="1.000"/></linearGradient><linearGradient id="m2_9" gradientUnits="userSpaceOnUse" x1="1390.4" y1="420.1" x2="1414.9" y2="430.2"><stop stop-color="#f00" stop-opacity="0.134"/><stop offset="1" stop-color="#f00" stop-opacity="0.393"/></linearGradient><linearGradient id="m2_10" gradientUnits="userSpaceOnUse" x1="1390.4" y1="420.1" x2="1390.0" y2="466.5"><stop stop-color="#00f" stop-opacity="0.471"/><stop offset="1" stop-color="#00f" stop-opacity="1.000"/></linearGradient><linearGradient id="m2_11" gradientUnits="userSpaceOnUse" x1="1368.9" y1="419.9" x2="1396.2" y2="435.9"><stop stop-color="#f00" stop-opacity="0.043"/><stop offset="1" stop-color="#f00" stop-opacity="0.197"/></linearGradient><linearGradient id="m2_12" gradientUnits="userSpaceOnUse" x1="1390.4" y1="420.1" x2="1386.3" y2="467.1"><stop stop-color="#00f" stop-opacity="0.471"/><stop offset="1" stop-color="#00f" stop-opacity="1.000"/></linearGradient><linearGradient id="m2_13" gradientUnits="userSpaceOnUse" x1="1368.9" y1="419.9" x2="1391.1" y2="427.2"><stop stop-color="#f00" stop-opacity="0.043"/><stop offset="1" stop-color="#f00" stop-opacity="0.197"/></linearGradient><linearGradient id="m2_14" gradientUnits="userSpaceOnUse" x1="1368.9" y1="419.9" x2="1368.5" y2="466.3"><stop stop-color="#00f" stop-opacity="0.491"/><stop offset="1" stop-color="#00f" stop-opacity="1.000"/></linearGradient><linearGradient id="m2_15" gradientUnits="userSpaceOnUse" x1="1347.3" y1="419.7" x2="1372.9" y2="431.7"><stop stop-color="#f00" stop-opacity="0.000"/><stop offset="1" stop-color="#f00" stop-opacity="0.062"/></linearGradient><linearGradient id="m2_16" gradientUnits="userSpaceOnUse" x1="1368.9" y1="419.9" x2="1364.8" y2="466.9"><stop stop-color="#00f" stop-opacity="0.491"/><stop offset="1" stop-color="#00f" stop-opacity="1.000"/></linearGradient><linearGradient id="m2_17" gradientUnits="userSpaceOnUse" x1="1347.3" y1="419.7" x2="1367.5" y2="425.0"><stop stop-color="#f00" stop-opacity="0.000"/><stop offset="1" stop-color="#f00" stop-opacity="0.062"/></linearGradient><linearGradient id="m2_18" gradientUnits="userSpaceOnUse" x1="1347.3" y1="419.7" x2="1346.9" y2="466.1"><stop stop-color="#00f" stop-opacity="0.508"/><stop offset="1" stop-color="#00f" stop-opacity="1.000"/></linearGradient><linearGradient id="m2_19" gradientUnits="userSpaceOnUse" x1="1424.1" y1="374.0" x2="1449.5" y2="385.7"><stop stop-color="#f00" stop-opacity="0.191"/><stop offset="1" stop-color="#f00" stop-opacity="0.429"/></linearGradient><linearGradient id="m2_20" gradientUnits="userSpaceOnUse" x1="1424.1" y1="374.0" x2="1414.6" y2="420.8"><stop stop-color="#00f" stop-opacity="0.191"/><stop offset="1" stop-color="#00f" stop-opacity="0.451"/></linearGradient><linearGradient id="m2_21" gradientUnits="userSpaceOnUse" x1="1402.5" y1="373.8" x2="1430.2" y2="391.0"><stop stop-color="#f00" stop-opacity="0.099"/><stop offset="1" stop-color="#f00" stop-opacity="0.262"/></linearGradient><linearGradient id="m2_22" gradientUnits="userSpaceOnUse" x1="1424.1" y1="374.0" x2="1415.1" y2="420.9"><stop stop-color="#00f" stop-opacity="0.191"/><stop offset="1" stop-color="#00f" stop-opacity="0.451"/></linearGradient><linearGradient id="m2_23" gradientUnits="userSpaceOnUse" x1="1402.5" y1="373.8" x2="1426.4" y2="383.1"><stop stop-color="#f00" stop-opacity="0.099"/><stop offset="1" stop-color="#f00" stop-opacity="0.262"/></linearGradient><linearGradient id="m2_24" gradientUnits="userSpaceOnUse" x1="1402.5" y1="373.8" x2="1393.7" y2="420.7"><stop stop-color="#00f" stop-opacity="0.212"/><stop offset="1" stop-color="#00f" stop-opacity="0.471"/></linearGradient><linearGradient id="m2_25" gradientUnits="userSpaceOnUse" x1="1381.0" y1="373.6" x2="1407.2" y2="386.9"><stop stop-color="#f00" stop-opacity="0.032"/><stop offset="1" stop-color="#f00" stop-opacity="0.134"/></linearGradient><linearGradient id="m2_26" gradientUnits="userSpaceOnUse" x1="1402.5" y1="373.8" x2="1393.9" y2="420.8"><stop stop-color="#00f" stop-opacity="0.212"/><stop offset="1" stop-color="#00f" stop-opacity="0.471"/></linearGradient><linearGradient id="m2_27" gradientUnits="userSpaceOnUse" x1="1381.0" y1="373.6" x2="1402.9" y2="380.6"><stop stop-color="#f00" stop-opacity="0.032"/><stop offset="1" stop-color="#f00" stop-opacity="0.134"/></linearGradient><linearGradient id="m2_28" gradientUnits="userSpaceOnUse" x1="1381.0" y1="373.6" x2="1372.7" y2="420.6"><stop stop-color="#00f" stop-opacity="0.232"/><stop offset="1" stop-color="#00f" stop-opacity="0.491"/></linearGradient><linearGradient id="m2_29" gradientUnits="userSpaceOnUse" x1="1359.4" y1="373.4" x2="1384.0" y2="383.8"><stop stop-color="#f00" stop-opacity="0.000"/><stop offset="1" stop-color="#f00" stop-opacity="0.043"/></linearGradient><linearGradient id="m2_30" gradientUnits="userSpaceOnUse" x1="1381.0" y1="373.6" x2="1372.7" y2="420.6"><stop stop-color="#00f" stop-opacity="0.232"/><stop offset="1" stop-color="#00f" stop-opacity="0.491"/></linearGradient><linearGradient id="m2_31" gradientUnits="userSpaceOnUse" x1="1359.4" y1="373.4" x2="1379.6" y2="378.7"><stop stop-color="#f00" stop-opacity="0.000"/><stop offset="1" stop-color="#f00" stop-opacity="0.043"/></linearGradient><linearGradient id="m2_32" gradientUnits="userSpaceOnUse" x1="1359.4" y1="373.4" x2="1351.7" y2="420.5"><stop stop-color="#00f" stop-opacity="0.252"/><stop offset="1" stop-color="#00f" stop-opacity="0.508"/></linearGradient><linearGradient id="m2_33" gradientUnits="userSpaceOnUse" x1="1414.6" y1="327.5" x2="1438.1" y2="336.3"><stop stop-color="#f00" stop-opacity="0.077"/><stop offset="1" stop-color="#f00" stop-opacity="0.191"/></linearGradient><linearGradient id="m2_34" gradientUnits="userSpaceOnUse" x1="1414.6" y1="327.5" x2="1398.0" y2="372.1"><stop stop-color="#00f" stop-opacity="0.077"/><stop offset="1" stop-color="#00f" stop-opacity="0.212"/></linearGradient><linearGradient id="m2_35" gradientUnits="userSpaceOnUse" x1="1393.0" y1="327.3" x2="1418.5" y2="339.0"><stop stop-color="#f00" stop-opacity="0.025"/><stop offset="1" stop-color="#f00" stop-opacity="0.099"/></linearGradient><linearGradient id="m2_36" gradientUnits="userSpaceOnUse" x1="1414.6" y1="327.5" x2="1401.7" y2="373.6"><stop stop-color="#00f" stop-opacity="0.077"/><stop offset="1" stop-color="#00f" stop-opacity="0.212"/></linearGradient><linearGradient id="m2_37" gradientUnits="userSpaceOnUse" x1="1393.0" y1="327.3" x2="1414.8" y2="334.0"><stop stop-color="#f00" stop-opacity="0.025"/><stop offset="1" stop-color="#f00" stop-opacity="0.099"/></linearGradient><linearGradient id="m2_38" gradientUnits="userSpaceOnUse" x1="1393.0" y1="327.3" x2="1377.4" y2="372.4"><stop stop-color="#00f" stop-opacity="0.093"/><stop offset="1" stop-color="#00f" stop-opacity="0.232"/></linearGradient><linearGradient id="m2_39" gradientUnits="userSpaceOnUse" x1="1371.5" y1="327.1" x2="1395.4" y2="336.5"><stop stop-color="#f00" stop-opacity="0.000"/><stop offset="1" stop-color="#f00" stop-opacity="0.032"/></linearGradient><linearGradient id="m2_40" gradientUnits="userSpaceOnUse" x1="1393.0" y1="327.3" x2="1380.5" y2="373.5"><stop stop-color="#00f" stop-opacity="0.093"/><stop offset="1" stop-color="#00f" stop-opacity="0.232"/></linearGradient><linearGradient id="m2_41" gradientUnits="userSpaceOnUse" x1="1371.5" y1="327.1" x2="1391.7" y2="332.4"><stop stop-color="#f00" stop-opacity="0.000"/><stop offset="1" stop-color="#f00" stop-opacity="0.032"/></linearGradient><linearGradient id="m2_42" gradientUnits="userSpaceOnUse" x1="1371.5" y1="327.1" x2="1356.8" y2="372.6"><stop stop-color="#00f" stop-opacity="0.109"/><stop offset="1" stop-color="#00f" stop-opacity="0.252"/></linearGradient><linearGradient id="m2_43" gradientUnits="userSpaceOnUse" x1="1405.1" y1="281.0" x2="1426.7" y2="287.6"><stop stop-color="#f00" stop-opacity="0.020"/><stop offset="1" stop-color="#f00" stop-opacity="0.077"/></linearGradient><linearGradient id="m2_44" gradientUnits="userSpaceOnUse" x1="1405.1" y1="281.0" x2="1382.8" y2="321.7"><stop stop-color="#00f" stop-opacity="0.020"/><stop offset="1" stop-color="#00f" stop-opacity="0.093"/></linearGradient><linearGradient id="m2_45" gradientUnits="userSpaceOnUse" x1="1383.6" y1="280.8" x2="1407.0" y2="289.5"><stop stop-color="#f00" stop-opacity="0.000"/><stop offset="1" stop-color="#f00" stop-opacity="0.025"/></linearGradient><linearGradient id="m2_46" gradientUnits="userSpaceOnUse" x1="1405.1" y1="281.0" x2="1389.5" y2="326.1"><stop stop-color="#00f" stop-opacity="0.020"/><stop offset="1" stop-color="#00f" stop-opacity="0.093"/></linearGradient><linearGradient id="m2_47" gradientUnits="userSpaceOnUse" x1="1383.6" y1="280.8" x2="1403.8" y2="286.1"><stop stop-color="#f00" stop-opacity="0.000"/><stop offset="1" stop-color="#f00" stop-opacity="0.025"/></linearGradient><linearGradient id="m2_48" gradientUnits="userSpaceOnUse" x1="1383.6" y1="280.8" x2="1362.5" y2="322.6"><stop stop-color="#00f" stop-opacity="0.031"/><stop offset="1" stop-color="#00f" stop-opacity="0.109"/></linearGradient><linearGradient id="m2_49" gradientUnits="userSpaceOnUse" x1="1395.7" y1="234.5" x2="1415.9" y2="239.8"><stop stop-color="#f00" stop-opacity="0.000"/><stop offset="1" stop-color="#f00" stop-opacity="0.020"/></linearGradient><linearGradient id="m2_50" gradientUnits="userSpaceOnUse" x1="1395.7" y1="234.5" x2="1367.1" y2="265.7"><stop stop-color="#00f" stop-opacity="0.000"/><stop offset="1" stop-color="#00f" stop-opacity="0.031"/></linearGradient><linearGradient id="m3_1" gradientUnits="userSpaceOnUse" x1="1412.6" y1="500.7" x2="1443.1" y2="500.6"><stop stop-color="#f00" stop-opacity="0.515"/><stop offset="1" stop-color="#f00" stop-opacity="1.000"/></linearGradient><linearGradient id="m3_2" gradientUnits="userSpaceOnUse" x1="1412.6" y1="500.7" x2="1412.9" y2="466.7"><stop stop-color="#0f0" stop-opacity="0.515"/><stop offset="1" stop-color="#0f0" stop-opacity="1.000"/></linearGradient><linearGradient id="m3_3" gradientUnits="userSpaceOnUse" x1="1391.1" y1="500.5" x2="1426.5" y2="493.9"><stop stop-color="#f00" stop-opacity="0.312"/><stop offset="1" stop-color="#f00" stop-opacity="0.657"/></linearGradient><linearGradient id="m3_4" gradientUnits="userSpaceOnUse" x1="1412.6" y1="500.7" x2="1410.6" y2="467.5"><stop stop-color="#0f0" stop-opacity="0.515"/><stop offset="1" stop-color="#0f0" stop-opacity="1.000"/></linearGradient><linearGradient id="m3_5" gradientUnits="userSpaceOnUse" x1="1382.2" y1="534.3" x2="1409.6" y2="536.6"><stop stop-color="#f00" stop-opacity="0.256"/><stop offset="1" stop-color="#f00" stop-opacity="0.515"/></linearGradient><linearGradient id="m3_6" gradientUnits="userSpaceOnUse" x1="1382.2" y1="534.3" x2="1378.6" y2="501.9"><stop stop-color="#0f0" stop-opacity="0.256"/><stop offset="1" stop-color="#0f0" stop-opacity="0.537"/></linearGradient><linearGradient id="m3_7" gradientUnits="userSpaceOnUse" x1="1360.7" y1="534.2" x2="1391.9" y2="533.4"><stop stop-color="#f00" stop-opacity="0.131"/><stop offset="1" stop-color="#f00" stop-opacity="0.312"/></linearGradient><linearGradient id="m3_8" gradientUnits="userSpaceOnUse" x1="1382.2" y1="534.3" x2="1378.2" y2="502.1"><stop stop-color="#0f0" stop-opacity="0.256"/><stop offset="1" stop-color="#0f0" stop-opacity="0.537"/></linearGradient><linearGradient id="m3_9" gradientUnits="userSpaceOnUse" x1="1351.8" y1="568.0" x2="1376.3" y2="571.9"><stop stop-color="#f00" stop-opacity="0.111"/><stop offset="1" stop-color="#f00" stop-opacity="0.256"/></linearGradient><linearGradient id="m3_10" gradientUnits="userSpaceOnUse" x1="1351.8" y1="568.0" x2="1345.4" y2="537.3"><stop stop-color="#0f0" stop-opacity="0.111"/><stop offset="1" stop-color="#0f0" stop-opacity="0.281"/></linearGradient><linearGradient id="m3_11" gradientUnits="userSpaceOnUse" x1="1330.3" y1="567.8" x2="1357.4" y2="570.3"><stop stop-color="#f00" stop-opacity="0.035"/><stop offset="1" stop-color="#f00" stop-opacity="0.131"/></linearGradient><linearGradient id="m3_12" gradientUnits="userSpaceOnUse" x1="1351.8" y1="568.0" x2="1346.2" y2="536.7"><stop stop-color="#0f0" stop-opacity="0.111"/><stop offset="1" stop-color="#0f0" stop-opacity="0.281"/></linearGradient><linearGradient id="m3_13" gradientUnits="userSpaceOnUse" x1="1321.4" y1="601.7" x2="1343.3" y2="606.5"><stop stop-color="#f00" stop-opacity="0.031"/><stop offset="1" stop-color="#f00" stop-opacity="0.111"/></linearGradient><linearGradient id="m3_14" gradientUnits="userSpaceOnUse" x1="1321.4" y1="601.7" x2="1312.9" y2="573.0"><stop stop-color="#0f0" stop-opacity="0.031"/><stop offset="1" stop-color="#0f0" stop-opacity="0.132"/></linearGradient><linearGradient id="m3_15" gradientUnits="userSpaceOnUse" x1="1299.9" y1="601.5" x2="1324.2" y2="605.4"><stop stop-color="#f00" stop-opacity="0.000"/><stop offset="1" stop-color="#f00" stop-opacity="0.035"/></linearGradient><linearGradient id="m3_16" gradientUnits="userSpaceOnUse" x1="1321.4" y1="601.7" x2="1314.8" y2="571.2"><stop stop-color="#0f0" stop-opacity="0.031"/><stop offset="1" stop-color="#0f0" stop-opacity="0.132"/></linearGradient><linearGradient id="m3_17" gradientUnits="userSpaceOnUse" x1="1299.9" y1="601.5" x2="1320.1" y2="606.8"><stop stop-color="#f00" stop-opacity="0.000"/><stop offset="1" stop-color="#f00" stop-opacity="0.031"/></linearGradient><linearGradient id="m3_18" gradientUnits="userSpaceOnUse" x1="1291.0" y1="635.4" x2="1279.8" y2="610.6"><stop stop-color="#0f0" stop-opacity="0.000"/><stop offset="1" stop-color="#0f0" stop-opacity="0.046"/></linearGradient><linearGradient id="m3_19" gradientUnits="userSpaceOnUse" x1="1391.1" y1="500.5" x2="1419.1" y2="502.3"><stop stop-color="#f00" stop-opacity="0.312"/><stop offset="1" stop-color="#f00" stop-opacity="0.657"/></linearGradient><linearGradient id="m3_20" gradientUnits="userSpaceOnUse" x1="1391.1" y1="500.5" x2="1391.4" y2="466.5"><stop stop-color="#0f0" stop-opacity="0.537"/><stop offset="1" stop-color="#0f0" stop-opacity="1.000"/></linearGradient><linearGradient id="m3_21" gradientUnits="userSpaceOnUse" x1="1369.5" y1="500.3" x2="1402.2" y2="497.9"><stop stop-color="#f00" stop-opacity="0.158"/><stop offset="1" stop-color="#f00" stop-opacity="0.393"/></linearGradient><linearGradient id="m3_22" gradientUnits="userSpaceOnUse" x1="1391.1" y1="500.5" x2="1389.1" y2="467.2"><stop stop-color="#0f0" stop-opacity="0.537"/><stop offset="1" stop-color="#0f0" stop-opacity="1.000"/></linearGradient><linearGradient id="m3_23" gradientUnits="userSpaceOnUse" x1="1360.7" y1="534.2" x2="1385.5" y2="537.8"><stop stop-color="#f00" stop-opacity="0.131"/><stop offset="1" stop-color="#f00" stop-opacity="0.312"/></linearGradient><linearGradient id="m3_24" gradientUnits="userSpaceOnUse" x1="1360.7" y1="534.2" x2="1357.3" y2="501.5"><stop stop-color="#0f0" stop-opacity="0.281"/><stop offset="1" stop-color="#0f0" stop-opacity="0.557"/></linearGradient><linearGradient id="m3_25" gradientUnits="userSpaceOnUse" x1="1339.1" y1="534.0" x2="1367.2" y2="535.8"><stop stop-color="#f00" stop-opacity="0.042"/><stop offset="1" stop-color="#f00" stop-opacity="0.158"/></linearGradient><linearGradient id="m3_26" gradientUnits="userSpaceOnUse" x1="1360.7" y1="534.2" x2="1356.8" y2="501.8"><stop stop-color="#0f0" stop-opacity="0.281"/><stop offset="1" stop-color="#0f0" stop-opacity="0.557"/></linearGradient><linearGradient id="m3_27" gradientUnits="userSpaceOnUse" x1="1330.3" y1="567.8" x2="1352.3" y2="572.6"><stop stop-color="#f00" stop-opacity="0.035"/><stop offset="1" stop-color="#f00" stop-opacity="0.131"/></linearGradient><linearGradient id="m3_28" gradientUnits="userSpaceOnUse" x1="1330.3" y1="567.8" x2="1324.3" y2="536.8"><stop stop-color="#0f0" stop-opacity="0.132"/><stop offset="1" stop-color="#0f0" stop-opacity="0.304"/></linearGradient><linearGradient id="m3_29" gradientUnits="userSpaceOnUse" x1="1308.7" y1="567.6" x2="1333.5" y2="571.3"><stop stop-color="#f00" stop-opacity="0.000"/><stop offset="1" stop-color="#f00" stop-opacity="0.042"/></linearGradient><linearGradient id="m3_30" gradientUnits="userSpaceOnUse" x1="1330.3" y1="567.8" x2="1324.8" y2="536.4"><stop stop-color="#0f0" stop-opacity="0.132"/><stop offset="1" stop-color="#0f0" stop-opacity="0.304"/></linearGradient><linearGradient id="m3_31" gradientUnits="userSpaceOnUse" x1="1308.7" y1="567.6" x2="1328.9" y2="572.9"><stop stop-color="#f00" stop-opacity="0.000"/><stop offset="1" stop-color="#f00" stop-opacity="0.035"/></linearGradient><linearGradient id="m3_32" gradientUnits="userSpaceOnUse" x1="1299.9" y1="601.5" x2="1291.8" y2="572.3"><stop stop-color="#0f0" stop-opacity="0.046"/><stop offset="1" stop-color="#0f0" stop-opacity="0.153"/></linearGradient><linearGradient id="m3_33" gradientUnits="userSpaceOnUse" x1="1369.5" y1="500.3" x2="1394.9" y2="503.7"><stop stop-color="#f00" stop-opacity="0.158"/><stop offset="1" stop-color="#f00" stop-opacity="0.393"/></linearGradient><linearGradient id="m3_34" gradientUnits="userSpaceOnUse" x1="1369.5" y1="500.3" x2="1369.8" y2="466.3"><stop stop-color="#0f0" stop-opacity="0.557"/><stop offset="1" stop-color="#0f0" stop-opacity="1.000"/></linearGradient><linearGradient id="m3_35" gradientUnits="userSpaceOnUse" x1="1347.9" y1="500.1" x2="1377.2" y2="501.1"><stop stop-color="#f00" stop-opacity="0.050"/><stop offset="1" stop-color="#f00" stop-opacity="0.197"/></linearGradient><linearGradient id="m3_36" gradientUnits="userSpaceOnUse" x1="1369.5" y1="500.3" x2="1367.6" y2="467.0"><stop stop-color="#0f0" stop-opacity="0.557"/><stop offset="1" stop-color="#0f0" stop-opacity="1.000"/></linearGradient><linearGradient id="m3_37" gradientUnits="userSpaceOnUse" x1="1339.1" y1="534.0" x2="1361.4" y2="538.7"><stop stop-color="#f00" stop-opacity="0.042"/><stop offset="1" stop-color="#f00" stop-opacity="0.158"/></linearGradient><linearGradient id="m3_38" gradientUnits="userSpaceOnUse" x1="1339.1" y1="534.0" x2="1336.0" y2="501.2"><stop stop-color="#0f0" stop-opacity="0.304"/><stop offset="1" stop-color="#0f0" stop-opacity="0.575"/></linearGradient><linearGradient id="m3_39" gradientUnits="userSpaceOnUse" x1="1317.6" y1="533.8" x2="1343.0" y2="537.2"><stop stop-color="#f00" stop-opacity="0.000"/><stop offset="1" stop-color="#f00" stop-opacity="0.050"/></linearGradient><linearGradient id="m3_40" gradientUnits="userSpaceOnUse" x1="1339.1" y1="534.0" x2="1335.4" y2="501.5"><stop stop-color="#0f0" stop-opacity="0.304"/><stop offset="1" stop-color="#0f0" stop-opacity="0.575"/></linearGradient><linearGradient id="m3_41" gradientUnits="userSpaceOnUse" x1="1317.6" y1="533.8" x2="1337.8" y2="539.0"><stop stop-color="#f00" stop-opacity="0.000"/><stop offset="1" stop-color="#f00" stop-opacity="0.042"/></linearGradient><linearGradient id="m3_42" gradientUnits="userSpaceOnUse" x1="1308.7" y1="567.6" x2="1303.0" y2="536.4"><stop stop-color="#0f0" stop-opacity="0.153"/><stop offset="1" stop-color="#0f0" stop-opacity="0.326"/></linearGradient><linearGradient id="m3_43" gradientUnits="userSpaceOnUse" x1="1347.9" y1="500.1" x2="1370.4" y2="504.7"><stop stop-color="#f00" stop-opacity="0.050"/><stop offset="1" stop-color="#f00" stop-opacity="0.197"/></linearGradient><linearGradient id="m3_44" gradientUnits="userSpaceOnUse" x1="1347.9" y1="500.1" x2="1348.2" y2="466.2"><stop stop-color="#0f0" stop-opacity="0.575"/><stop offset="1" stop-color="#0f0" stop-opacity="1.000"/></linearGradient><linearGradient id="m3_45" gradientUnits="userSpaceOnUse" x1="1326.4" y1="499.9" x2="1352.6" y2="502.9"><stop stop-color="#f00" stop-opacity="0.000"/><stop offset="1" stop-color="#f00" stop-opacity="0.062"/></linearGradient><linearGradient id="m3_46" gradientUnits="userSpaceOnUse" x1="1347.9" y1="500.1" x2="1346.2" y2="466.8"><stop stop-color="#0f0" stop-opacity="0.575"/><stop offset="1" stop-color="#0f0" stop-opacity="1.000"/></linearGradient><linearGradient id="m3_47" gradientUnits="userSpaceOnUse" x1="1326.4" y1="499.9" x2="1346.6" y2="505.2"><stop stop-color="#f00" stop-opacity="0.000"/><stop offset="1" stop-color="#f00" stop-opacity="0.050"/></linearGradient><linearGradient id="m3_48" gradientUnits="userSpaceOnUse" x1="1317.6" y1="533.8" x2="1314.6" y2="501.0"><stop stop-color="#0f0" stop-opacity="0.326"/><stop offset="1" stop-color="#0f0" stop-opacity="0.592"/></linearGradient><linearGradient id="m3_49" gradientUnits="userSpaceOnUse" x1="1335.2" y1="466.0" x2="1355.5" y2="471.3"><stop stop-color="#f00" stop-opacity="0.000"/><stop offset="1" stop-color="#f00" stop-opacity="0.062"/></linearGradient><linearGradient id="m3_50" gradientUnits="userSpaceOnUse" x1="1326.4" y1="499.9" x2="1326.7" y2="466.0"><stop stop-color="#0f0" stop-opacity="0.592"/><stop offset="1" stop-color="#0f0" stop-opacity="1.000"/></linearGradient><linearGradient id="m4_1" gradientUnits="userSpaceOnUse" x1="1412.6" y1="500.7" x2="1448.4" y2="493.4"><stop stop-color="#f00" stop-opacity="0.515"/><stop offset="1" stop-color="#f00" stop-opacity="1.000"/></linearGradient><linearGradient id="m4_2" gradientUnits="userSpaceOnUse" x1="1412.6" y1="500.7" x2="1408.6" y2="471.7"><stop stop-color="#0f0" stop-opacity="0.515"/><stop offset="1" stop-color="#0f0" stop-opacity="1.000"/></linearGradient><linearGradient id="m4_3" gradientUnits="userSpaceOnUse" x1="1412.6" y1="500.7" x2="1448.3" y2="497.2"><stop stop-color="#f00" stop-opacity="0.515"/><stop offset="1" stop-color="#f00" stop-opacity="1.000"/></linearGradient><linearGradient id="m4_4" gradientUnits="userSpaceOnUse" x1="1417.0" y1="522.4" x2="1417.2" y2="488.6"><stop stop-color="#0f0" stop-opacity="0.303"/><stop offset="1" stop-color="#0f0" stop-opacity="0.632"/></linearGradient><linearGradient id="m4_5" gradientUnits="userSpaceOnUse" x1="1417.0" y1="522.4" x2="1452.8" y2="515.1"><stop stop-color="#f00" stop-opacity="0.545"/><stop offset="1" stop-color="#f00" stop-opacity="1.000"/></linearGradient><linearGradient id="m4_6" gradientUnits="userSpaceOnUse" x1="1417.0" y1="522.4" x2="1412.0" y2="495.4"><stop stop-color="#0f0" stop-opacity="0.303"/><stop offset="1" stop-color="#0f0" stop-opacity="0.632"/></linearGradient><linearGradient id="m4_7" gradientUnits="userSpaceOnUse" x1="1417.0" y1="522.4" x2="1452.7" y2="518.7"><stop stop-color="#f00" stop-opacity="0.545"/><stop offset="1" stop-color="#f00" stop-opacity="1.000"/></linearGradient><linearGradient id="m4_8" gradientUnits="userSpaceOnUse" x1="1421.5" y1="544.1" x2="1419.0" y2="513.1"><stop stop-color="#0f0" stop-opacity="0.149"/><stop offset="1" stop-color="#0f0" stop-opacity="0.366"/></linearGradient><linearGradient id="m4_9" gradientUnits="userSpaceOnUse" x1="1421.5" y1="544.1" x2="1457.2" y2="536.8"><stop stop-color="#f00" stop-opacity="0.573"/><stop offset="1" stop-color="#f00" stop-opacity="1.000"/></linearGradient><linearGradient id="m4_10" gradientUnits="userSpaceOnUse" x1="1421.5" y1="544.1" x2="1415.4" y2="519.3"><stop stop-color="#0f0" stop-opacity="0.149"/><stop offset="1" stop-color="#0f0" stop-opacity="0.366"/></linearGradient><linearGradient id="m4_11" gradientUnits="userSpaceOnUse" x1="1421.5" y1="544.1" x2="1457.2" y2="540.2"><stop stop-color="#f00" stop-opacity="0.573"/><stop offset="1" stop-color="#f00" stop-opacity="1.000"/></linearGradient><linearGradient id="m4_12" gradientUnits="userSpaceOnUse" x1="1425.9" y1="565.9" x2="1421.3" y2="537.9"><stop stop-color="#0f0" stop-opacity="0.046"/><stop offset="1" stop-color="#0f0" stop-opacity="0.178"/></linearGradient><linearGradient id="m4_13" gradientUnits="userSpaceOnUse" x1="1425.9" y1="565.9" x2="1461.6" y2="558.6"><stop stop-color="#f00" stop-opacity="0.597"/><stop offset="1" stop-color="#f00" stop-opacity="1.000"/></linearGradient><linearGradient id="m4_14" gradientUnits="userSpaceOnUse" x1="1425.9" y1="565.9" x2="1419.1" y2="543.3"><stop stop-color="#0f0" stop-opacity="0.046"/><stop offset="1" stop-color="#0f0" stop-opacity="0.178"/></linearGradient><linearGradient id="m4_15" gradientUnits="userSpaceOnUse" x1="1425.9" y1="565.9" x2="1461.6" y2="561.8"><stop stop-color="#f00" stop-opacity="0.597"/><stop offset="1" stop-color="#f00" stop-opacity="1.000"/></linearGradient><linearGradient id="m4_16" gradientUnits="userSpaceOnUse" x1="1430.3" y1="587.6" x2="1424.6" y2="562.1"><stop stop-color="#0f0" stop-opacity="0.000"/><stop offset="1" stop-color="#0f0" stop-opacity="0.054"/></linearGradient><linearGradient id="m4_17" gradientUnits="userSpaceOnUse" x1="1430.3" y1="587.6" x2="1466.1" y2="580.3"><stop stop-color="#f00" stop-opacity="0.619"/><stop offset="1" stop-color="#f00" stop-opacity="1.000"/></linearGradient><linearGradient id="m4_18" gradientUnits="userSpaceOnUse" x1="1430.3" y1="587.6" x2="1423.2" y2="566.8"><stop stop-color="#0f0" stop-opacity="0.000"/><stop offset="1" stop-color="#0f0" stop-opacity="0.054"/></linearGradient><linearGradient id="m4_19" gradientUnits="userSpaceOnUse" x1="1382.2" y1="534.3" x2="1417.4" y2="533.3"><stop stop-color="#f00" stop-opacity="0.256"/><stop offset="1" stop-color="#f00" stop-opacity="0.545"/></linearGradient><linearGradient id="m4_20" gradientUnits="userSpaceOnUse" x1="1382.2" y1="534.3" x2="1376.9" y2="507.8"><stop stop-color="#0f0" stop-opacity="0.256"/><stop offset="1" stop-color="#0f0" stop-opacity="0.515"/></linearGradient><linearGradient id="m4_21" gradientUnits="userSpaceOnUse" x1="1382.2" y1="534.3" x2="1417.1" y2="534.0"><stop stop-color="#f00" stop-opacity="0.256"/><stop offset="1" stop-color="#f00" stop-opacity="0.545"/></linearGradient><linearGradient id="m4_22" gradientUnits="userSpaceOnUse" x1="1386.6" y1="556.1" x2="1383.3" y2="526.1"><stop stop-color="#0f0" stop-opacity="0.128"/><stop offset="1" stop-color="#0f0" stop-opacity="0.303"/></linearGradient><linearGradient id="m4_23" gradientUnits="userSpaceOnUse" x1="1386.6" y1="556.1" x2="1421.9" y2="554.4"><stop stop-color="#f00" stop-opacity="0.291"/><stop offset="1" stop-color="#f00" stop-opacity="0.573"/></linearGradient><linearGradient id="m4_24" gradientUnits="userSpaceOnUse" x1="1386.6" y1="556.1" x2="1380.5" y2="531.5"><stop stop-color="#0f0" stop-opacity="0.128"/><stop offset="1" stop-color="#0f0" stop-opacity="0.303"/></linearGradient><linearGradient id="m4_25" gradientUnits="userSpaceOnUse" x1="1386.6" y1="556.1" x2="1421.7" y2="555.4"><stop stop-color="#f00" stop-opacity="0.291"/><stop offset="1" stop-color="#f00" stop-opacity="0.573"/></linearGradient><linearGradient id="m4_26" gradientUnits="userSpaceOnUse" x1="1391.1" y1="577.8" x2="1386.1" y2="550.6"><stop stop-color="#0f0" stop-opacity="0.040"/><stop offset="1" stop-color="#0f0" stop-opacity="0.149"/></linearGradient><linearGradient id="m4_27" gradientUnits="userSpaceOnUse" x1="1391.1" y1="577.8" x2="1426.5" y2="575.7"><stop stop-color="#f00" stop-opacity="0.323"/><stop offset="1" stop-color="#f00" stop-opacity="0.597"/></linearGradient><linearGradient id="m4_28" gradientUnits="userSpaceOnUse" x1="1391.1" y1="577.8" x2="1384.3" y2="555.4"><stop stop-color="#0f0" stop-opacity="0.040"/><stop offset="1" stop-color="#0f0" stop-opacity="0.149"/></linearGradient><linearGradient id="m4_29" gradientUnits="userSpaceOnUse" x1="1391.1" y1="577.8" x2="1426.2" y2="576.8"><stop stop-color="#f00" stop-opacity="0.323"/><stop offset="1" stop-color="#f00" stop-opacity="0.597"/></linearGradient><linearGradient id="m4_30" gradientUnits="userSpaceOnUse" x1="1395.5" y1="599.5" x2="1389.5" y2="574.5"><stop stop-color="#0f0" stop-opacity="0.000"/><stop offset="1" stop-color="#0f0" stop-opacity="0.046"/></linearGradient><linearGradient id="m4_31" gradientUnits="userSpaceOnUse" x1="1395.5" y1="599.5" x2="1431.0" y2="597.1"><stop stop-color="#f00" stop-opacity="0.353"/><stop offset="1" stop-color="#f00" stop-opacity="0.619"/></linearGradient><linearGradient id="m4_32" gradientUnits="userSpaceOnUse" x1="1395.5" y1="599.5" x2="1388.4" y2="578.7"><stop stop-color="#0f0" stop-opacity="0.000"/><stop offset="1" stop-color="#0f0" stop-opacity="0.046"/></linearGradient><linearGradient id="m4_33" gradientUnits="userSpaceOnUse" x1="1351.8" y1="568.0" x2="1385.2" y2="571.3"><stop stop-color="#f00" stop-opacity="0.111"/><stop offset="1" stop-color="#f00" stop-opacity="0.291"/></linearGradient><linearGradient id="m4_34" gradientUnits="userSpaceOnUse" x1="1351.8" y1="568.0" x2="1345.6" y2="543.7"><stop stop-color="#0f0" stop-opacity="0.111"/><stop offset="1" stop-color="#0f0" stop-opacity="0.256"/></linearGradient><linearGradient id="m4_35" gradientUnits="userSpaceOnUse" x1="1351.8" y1="568.0" x2="1385.8" y2="570.1"><stop stop-color="#f00" stop-opacity="0.111"/><stop offset="1" stop-color="#f00" stop-opacity="0.291"/></linearGradient><linearGradient id="m4_36" gradientUnits="userSpaceOnUse" x1="1356.2" y1="589.7" x2="1351.0" y2="563.2"><stop stop-color="#0f0" stop-opacity="0.035"/><stop offset="1" stop-color="#0f0" stop-opacity="0.128"/></linearGradient><linearGradient id="m4_37" gradientUnits="userSpaceOnUse" x1="1356.2" y1="589.7" x2="1390.0" y2="592.2"><stop stop-color="#f00" stop-opacity="0.141"/><stop offset="1" stop-color="#f00" stop-opacity="0.323"/></linearGradient><linearGradient id="m4_38" gradientUnits="userSpaceOnUse" x1="1356.2" y1="589.7" x2="1349.4" y2="567.4"><stop stop-color="#0f0" stop-opacity="0.035"/><stop offset="1" stop-color="#0f0" stop-opacity="0.128"/></linearGradient><linearGradient id="m4_39" gradientUnits="userSpaceOnUse" x1="1356.2" y1="589.7" x2="1390.4" y2="591.5"><stop stop-color="#f00" stop-opacity="0.141"/><stop offset="1" stop-color="#f00" stop-opacity="0.323"/></linearGradient><linearGradient id="m4_40" gradientUnits="userSpaceOnUse" x1="1360.7" y1="611.5" x2="1354.6" y2="586.9"><stop stop-color="#0f0" stop-opacity="0.000"/><stop offset="1" stop-color="#0f0" stop-opacity="0.040"/></linearGradient><linearGradient id="m4_41" gradientUnits="userSpaceOnUse" x1="1360.7" y1="611.5" x2="1394.8" y2="613.3"><stop stop-color="#f00" stop-opacity="0.171"/><stop offset="1" stop-color="#f00" stop-opacity="0.353"/></linearGradient><linearGradient id="m4_42" gradientUnits="userSpaceOnUse" x1="1360.7" y1="611.5" x2="1353.5" y2="590.7"><stop stop-color="#0f0" stop-opacity="0.000"/><stop offset="1" stop-color="#0f0" stop-opacity="0.040"/></linearGradient><linearGradient id="m4_43" gradientUnits="userSpaceOnUse" x1="1321.4" y1="601.7" x2="1352.4" y2="608.1"><stop stop-color="#f00" stop-opacity="0.031"/><stop offset="1" stop-color="#f00" stop-opacity="0.141"/></linearGradient><linearGradient id="m4_44" gradientUnits="userSpaceOnUse" x1="1321.4" y1="601.7" x2="1314.6" y2="579.5"><stop stop-color="#0f0" stop-opacity="0.031"/><stop offset="1" stop-color="#0f0" stop-opacity="0.111"/></linearGradient><linearGradient id="m4_45" gradientUnits="userSpaceOnUse" x1="1321.4" y1="601.7" x2="1354.6" y2="605.2"><stop stop-color="#f00" stop-opacity="0.031"/><stop offset="1" stop-color="#f00" stop-opacity="0.141"/></linearGradient><linearGradient id="m4_46" gradientUnits="userSpaceOnUse" x1="1325.9" y1="623.4" x2="1319.6" y2="599.2"><stop stop-color="#0f0" stop-opacity="0.000"/><stop offset="1" stop-color="#0f0" stop-opacity="0.035"/></linearGradient><linearGradient id="m4_47" gradientUnits="userSpaceOnUse" x1="1325.9" y1="623.4" x2="1357.7" y2="628.9"><stop stop-color="#f00" stop-opacity="0.053"/><stop offset="1" stop-color="#f00" stop-opacity="0.171"/></linearGradient><linearGradient id="m4_48" gradientUnits="userSpaceOnUse" x1="1325.9" y1="623.4" x2="1318.7" y2="602.6"><stop stop-color="#0f0" stop-opacity="0.000"/><stop offset="1" stop-color="#0f0" stop-opacity="0.035"/></linearGradient><linearGradient id="m4_49" gradientUnits="userSpaceOnUse" x1="1291.0" y1="635.4" x2="1317.5" y2="645.4"><stop stop-color="#f00" stop-opacity="0.000"/><stop offset="1" stop-color="#f00" stop-opacity="0.053"/></linearGradient><linearGradient id="m4_50" gradientUnits="userSpaceOnUse" x1="1291.0" y1="635.4" x2="1283.9" y2="614.6"><stop stop-color="#0f0" stop-opacity="0.000"/><stop offset="1" stop-color="#0f0" stop-opacity="0.031"/></linearGradient><linearGradient id="m5_1" gradientUnits="userSpaceOnUse" x1="1509.0" y1="467.6" x2="1489.6" y2="437.2"><stop stop-color="#0f0" stop-opacity="0.359"/><stop offset="1" stop-color="#0f0" stop-opacity="1.000"/></linearGradient><linearGradient id="m5_2" gradientUnits="userSpaceOnUse" x1="1509.0" y1="467.6" x2="1445.7" y2="480.5"><stop stop-color="#00f" stop-opacity="0.359"/><stop offset="1" stop-color="#00f" stop-opacity="1.000"/></linearGradient><linearGradient id="m5_3" gradientUnits="userSpaceOnUse" x1="1513.5" y1="489.3" x2="1474.8" y2="456.5"><stop stop-color="#0f0" stop-opacity="0.216"/><stop offset="1" stop-color="#0f0" stop-opacity="0.632"/></linearGradient><linearGradient id="m5_4" gradientUnits="userSpaceOnUse" x1="1509.0" y1="467.6" x2="1447.6" y2="489.3"><stop stop-color="#00f" stop-opacity="0.359"/><stop offset="1" stop-color="#00f" stop-opacity="1.000"/></linearGradient><linearGradient id="m5_5" gradientUnits="userSpaceOnUse" x1="1575.1" y1="468.2" x2="1560.3" y2="440.3"><stop stop-color="#0f0" stop-opacity="0.147"/><stop offset="1" stop-color="#0f0" stop-opacity="0.359"/></linearGradient><linearGradient id="m5_6" gradientUnits="userSpaceOnUse" x1="1575.1" y1="468.2" x2="1521.6" y2="502.1"><stop stop-color="#00f" stop-opacity="0.147"/><stop offset="1" stop-color="#00f" stop-opacity="0.389"/></linearGradient><linearGradient id="m5_7" gradientUnits="userSpaceOnUse" x1="1579.5" y1="489.9" x2="1556.2" y2="458.0"><stop stop-color="#0f0" stop-opacity="0.075"/><stop offset="1" stop-color="#0f0" stop-opacity="0.216"/></linearGradient><linearGradient id="m5_8" gradientUnits="userSpaceOnUse" x1="1575.1" y1="468.2" x2="1518.8" y2="499.0"><stop stop-color="#00f" stop-opacity="0.147"/><stop offset="1" stop-color="#00f" stop-opacity="0.389"/></linearGradient><linearGradient id="m5_9" gradientUnits="userSpaceOnUse" x1="1641.1" y1="468.8" x2="1630.0" y2="443.7"><stop stop-color="#0f0" stop-opacity="0.056"/><stop offset="1" stop-color="#0f0" stop-opacity="0.147"/></linearGradient><linearGradient id="m5_10" gradientUnits="userSpaceOnUse" x1="1641.1" y1="468.8" x2="1600.5" y2="510.4"><stop stop-color="#00f" stop-opacity="0.056"/><stop offset="1" stop-color="#00f" stop-opacity="0.172"/></linearGradient><linearGradient id="m5_11" gradientUnits="userSpaceOnUse" x1="1645.6" y1="490.5" x2="1630.5" y2="462.5"><stop stop-color="#0f0" stop-opacity="0.018"/><stop offset="1" stop-color="#0f0" stop-opacity="0.075"/></linearGradient><linearGradient id="m5_12" gradientUnits="userSpaceOnUse" x1="1641.1" y1="468.8" x2="1591.3" y2="505.8"><stop stop-color="#00f" stop-opacity="0.056"/><stop offset="1" stop-color="#00f" stop-opacity="0.172"/></linearGradient><linearGradient id="m5_13" gradientUnits="userSpaceOnUse" x1="1707.2" y1="469.4" x2="1698.6" y2="446.9"><stop stop-color="#0f0" stop-opacity="0.014"/><stop offset="1" stop-color="#0f0" stop-opacity="0.056"/></linearGradient><linearGradient id="m5_14" gradientUnits="userSpaceOnUse" x1="1707.2" y1="469.4" x2="1677.6" y2="512.5"><stop stop-color="#00f" stop-opacity="0.014"/><stop offset="1" stop-color="#00f" stop-opacity="0.074"/></linearGradient><linearGradient id="m5_15" gradientUnits="userSpaceOnUse" x1="1711.6" y1="491.1" x2="1700.5" y2="466.1"><stop stop-color="#0f0" stop-opacity="0.000"/><stop offset="1" stop-color="#0f0" stop-opacity="0.018"/></linearGradient><linearGradient id="m5_16" gradientUnits="userSpaceOnUse" x1="1707.2" y1="469.4" x2="1662.4" y2="509.3"><stop stop-color="#00f" stop-opacity="0.014"/><stop offset="1" stop-color="#00f" stop-opacity="0.074"/></linearGradient><linearGradient id="m5_17" gradientUnits="userSpaceOnUse" x1="1711.6" y1="491.1" x2="1704.5" y2="470.3"><stop stop-color="#0f0" stop-opacity="0.000"/><stop offset="1" stop-color="#0f0" stop-opacity="0.014"/></linearGradient><linearGradient id="m5_18" gradientUnits="userSpaceOnUse" x1="1773.2" y1="469.9" x2="1757.4" y2="509.4"><stop stop-color="#00f" stop-opacity="0.000"/><stop offset="1" stop-color="#00f" stop-opacity="0.025"/></linearGradient><linearGradient id="m5_19" gradientUnits="userSpaceOnUse" x1="1513.5" y1="489.3" x2="1497.2" y2="460.6"><stop stop-color="#0f0" stop-opacity="0.216"/><stop offset="1" stop-color="#0f0" stop-opacity="0.632"/></linearGradient><linearGradient id="m5_20" gradientUnits="userSpaceOnUse" x1="1513.5" y1="489.3" x2="1450.2" y2="502.2"><stop stop-color="#00f" stop-opacity="0.389"/><stop offset="1" stop-color="#00f" stop-opacity="1.000"/></linearGradient><linearGradient id="m5_21" gradientUnits="userSpaceOnUse" x1="1517.9" y1="511.0" x2="1487.0" y2="477.8"><stop stop-color="#0f0" stop-opacity="0.109"/><stop offset="1" stop-color="#0f0" stop-opacity="0.366"/></linearGradient><linearGradient id="m5_22" gradientUnits="userSpaceOnUse" x1="1513.5" y1="489.3" x2="1451.9" y2="510.7"><stop stop-color="#00f" stop-opacity="0.389"/><stop offset="1" stop-color="#00f" stop-opacity="1.000"/></linearGradient><linearGradient id="m5_23" gradientUnits="userSpaceOnUse" x1="1579.5" y1="489.9" x2="1567.6" y2="464.2"><stop stop-color="#0f0" stop-opacity="0.075"/><stop offset="1" stop-color="#0f0" stop-opacity="0.216"/></linearGradient><linearGradient id="m5_24" gradientUnits="userSpaceOnUse" x1="1579.5" y1="489.9" x2="1524.5" y2="522.3"><stop stop-color="#00f" stop-opacity="0.172"/><stop offset="1" stop-color="#00f" stop-opacity="0.417"/></linearGradient><linearGradient id="m5_25" gradientUnits="userSpaceOnUse" x1="1583.9" y1="511.6" x2="1566.2" y2="482.1"><stop stop-color="#0f0" stop-opacity="0.024"/><stop offset="1" stop-color="#0f0" stop-opacity="0.109"/></linearGradient><linearGradient id="m5_26" gradientUnits="userSpaceOnUse" x1="1579.5" y1="489.9" x2="1522.6" y2="520.0"><stop stop-color="#00f" stop-opacity="0.172"/><stop offset="1" stop-color="#00f" stop-opacity="0.417"/></linearGradient><linearGradient id="m5_27" gradientUnits="userSpaceOnUse" x1="1645.6" y1="490.5" x2="1636.8" y2="467.8"><stop stop-color="#0f0" stop-opacity="0.018"/><stop offset="1" stop-color="#0f0" stop-opacity="0.075"/></linearGradient><linearGradient id="m5_28" gradientUnits="userSpaceOnUse" x1="1645.6" y1="490.5" x2="1602.2" y2="531.1"><stop stop-color="#00f" stop-opacity="0.074"/><stop offset="1" stop-color="#00f" stop-opacity="0.196"/></linearGradient><linearGradient id="m5_29" gradientUnits="userSpaceOnUse" x1="1650.0" y1="512.2" x2="1637.9" y2="486.4"><stop stop-color="#0f0" stop-opacity="0.000"/><stop offset="1" stop-color="#0f0" stop-opacity="0.024"/></linearGradient><linearGradient id="m5_30" gradientUnits="userSpaceOnUse" x1="1645.6" y1="490.5" x2="1594.8" y2="526.8"><stop stop-color="#00f" stop-opacity="0.074"/><stop offset="1" stop-color="#00f" stop-opacity="0.196"/></linearGradient><linearGradient id="m5_31" gradientUnits="userSpaceOnUse" x1="1650.0" y1="512.2" x2="1642.8" y2="491.4"><stop stop-color="#0f0" stop-opacity="0.000"/><stop offset="1" stop-color="#0f0" stop-opacity="0.018"/></linearGradient><linearGradient id="m5_32" gradientUnits="userSpaceOnUse" x1="1711.6" y1="491.1" x2="1678.4" y2="534.1"><stop stop-color="#00f" stop-opacity="0.025"/><stop offset="1" stop-color="#00f" stop-opacity="0.091"/></linearGradient><linearGradient id="m5_33" gradientUnits="userSpaceOnUse" x1="1517.9" y1="511.0" x2="1505.0" y2="484.6"><stop stop-color="#0f0" stop-opacity="0.109"/><stop offset="1" stop-color="#0f0" stop-opacity="0.366"/></linearGradient><linearGradient id="m5_34" gradientUnits="userSpaceOnUse" x1="1517.9" y1="511.0" x2="1454.6" y2="523.9"><stop stop-color="#00f" stop-opacity="0.417"/><stop offset="1" stop-color="#00f" stop-opacity="1.000"/></linearGradient><linearGradient id="m5_35" gradientUnits="userSpaceOnUse" x1="1522.3" y1="532.8" x2="1499.5" y2="501.1"><stop stop-color="#0f0" stop-opacity="0.034"/><stop offset="1" stop-color="#0f0" stop-opacity="0.178"/></linearGradient><linearGradient id="m5_36" gradientUnits="userSpaceOnUse" x1="1517.9" y1="511.0" x2="1456.2" y2="532.1"><stop stop-color="#00f" stop-opacity="0.417"/><stop offset="1" stop-color="#00f" stop-opacity="1.000"/></linearGradient><linearGradient id="m5_37" gradientUnits="userSpaceOnUse" x1="1583.9" y1="511.6" x2="1574.8" y2="488.6"><stop stop-color="#0f0" stop-opacity="0.024"/><stop offset="1" stop-color="#0f0" stop-opacity="0.109"/></linearGradient><linearGradient id="m5_38" gradientUnits="userSpaceOnUse" x1="1583.9" y1="511.6" x2="1527.7" y2="542.6"><stop stop-color="#00f" stop-opacity="0.196"/><stop offset="1" stop-color="#00f" stop-opacity="0.442"/></linearGradient><linearGradient id="m5_39" gradientUnits="userSpaceOnUse" x1="1588.4" y1="533.4" x2="1574.7" y2="506.3"><stop stop-color="#0f0" stop-opacity="0.000"/><stop offset="1" stop-color="#0f0" stop-opacity="0.034"/></linearGradient><linearGradient id="m5_40" gradientUnits="userSpaceOnUse" x1="1583.9" y1="511.6" x2="1526.6" y2="541.0"><stop stop-color="#00f" stop-opacity="0.196"/><stop offset="1" stop-color="#00f" stop-opacity="0.442"/></linearGradient><linearGradient id="m5_41" gradientUnits="userSpaceOnUse" x1="1588.4" y1="533.4" x2="1581.2" y2="512.6"><stop stop-color="#0f0" stop-opacity="0.000"/><stop offset="1" stop-color="#0f0" stop-opacity="0.024"/></linearGradient><linearGradient id="m5_42" gradientUnits="userSpaceOnUse" x1="1650.0" y1="512.2" x2="1604.2" y2="551.7"><stop stop-color="#00f" stop-opacity="0.091"/><stop offset="1" stop-color="#00f" stop-opacity="0.219"/></linearGradient><linearGradient id="m5_43" gradientUnits="userSpaceOnUse" x1="1522.3" y1="532.8" x2="1512.8" y2="509.3"><stop stop-color="#0f0" stop-opacity="0.034"/><stop offset="1" stop-color="#0f0" stop-opacity="0.178"/></linearGradient><linearGradient id="m5_44" gradientUnits="userSpaceOnUse" x1="1522.3" y1="532.8" x2="1459.0" y2="545.7"><stop stop-color="#00f" stop-opacity="0.442"/><stop offset="1" stop-color="#00f" stop-opacity="1.000"/></linearGradient><linearGradient id="m5_45" gradientUnits="userSpaceOnUse" x1="1526.7" y1="554.5" x2="1510.0" y2="525.5"><stop stop-color="#0f0" stop-opacity="0.000"/><stop offset="1" stop-color="#0f0" stop-opacity="0.054"/></linearGradient><linearGradient id="m5_46" gradientUnits="userSpaceOnUse" x1="1522.3" y1="532.8" x2="1460.6" y2="553.5"><stop stop-color="#00f" stop-opacity="0.442"/><stop offset="1" stop-color="#00f" stop-opacity="1.000"/></linearGradient><linearGradient id="m5_47" gradientUnits="userSpaceOnUse" x1="1526.7" y1="554.5" x2="1519.6" y2="533.7"><stop stop-color="#0f0" stop-opacity="0.000"/><stop offset="1" stop-color="#0f0" stop-opacity="0.034"/></linearGradient><linearGradient id="m5_48" gradientUnits="userSpaceOnUse" x1="1588.4" y1="533.4" x2="1531.2" y2="563.1"><stop stop-color="#00f" stop-opacity="0.219"/><stop offset="1" stop-color="#00f" stop-opacity="0.466"/></linearGradient><linearGradient id="m5_49" gradientUnits="userSpaceOnUse" x1="1465.1" y1="575.6" x2="1458.0" y2="554.8"><stop stop-color="#0f0" stop-opacity="0.000"/><stop offset="1" stop-color="#0f0" stop-opacity="0.054"/></linearGradient><linearGradient id="m5_50" gradientUnits="userSpaceOnUse" x1="1526.7" y1="554.5" x2="1463.4" y2="567.4"><stop stop-color="#00f" stop-opacity="0.466"/><stop offset="1" stop-color="#00f" stop-opacity="1.000"/></linearGradient><linearGradient id="n1" gradientUnits="userSpaceOnUse" x1="1648.0" y1="153.0" x2="1674.4" y2="164.6"><stop stop-color="#f00" stop-opacity="0.150"/><stop offset="1" stop-color="#f00" stop-opacity="0.217"/></linearGradient><linearGradient id="n2" gradientUnits="userSpaceOnUse" x1="1679.5" y1="153.0" x2="1674.4" y2="189.4"><stop stop-color="#00f" stop-opacity="0.435"/><stop offset="1" stop-color="#00f" stop-opacity="0.535"/></linearGradient><linearGradient id="n3" gradientUnits="userSpaceOnUse" x1="1648.0" y1="185.7" x2="1673.1" y2="198.3"><stop stop-color="#f00" stop-opacity="0.181"/><stop offset="1" stop-color="#f00" stop-opacity="0.256"/></linearGradient><linearGradient id="n4" gradientUnits="userSpaceOnUse" x1="1679.5" y1="153.0" x2="1674.7" y2="189.2"><stop stop-color="#00f" stop-opacity="0.435"/><stop offset="1" stop-color="#00f" stop-opacity="0.535"/></linearGradient><linearGradient id="n5" gradientUnits="userSpaceOnUse" x1="1648.0" y1="185.7" x2="1673.8" y2="197.8"><stop stop-color="#f00" stop-opacity="0.181"/><stop offset="1" stop-color="#f00" stop-opacity="0.256"/></linearGradient><linearGradient id="n6" gradientUnits="userSpaceOnUse" x1="1679.5" y1="185.7" x2="1675.5" y2="221.4"><stop stop-color="#00f" stop-opacity="0.523"/><stop offset="1" stop-color="#00f" stop-opacity="0.641"/></linearGradient><linearGradient id="n7" gradientUnits="userSpaceOnUse" x1="1648.0" y1="218.3" x2="1672.6" y2="231.4"><stop stop-color="#f00" stop-opacity="0.217"/><stop offset="1" stop-color="#f00" stop-opacity="0.304"/></linearGradient><linearGradient id="n8" gradientUnits="userSpaceOnUse" x1="1679.5" y1="185.7" x2="1676.1" y2="221.1"><stop stop-color="#00f" stop-opacity="0.523"/><stop offset="1" stop-color="#00f" stop-opacity="0.641"/></linearGradient><linearGradient id="n9" gradientUnits="userSpaceOnUse" x1="1648.0" y1="218.3" x2="1673.2" y2="230.9"><stop stop-color="#f00" stop-opacity="0.217"/><stop offset="1" stop-color="#f00" stop-opacity="0.304"/></linearGradient><linearGradient id="n10" gradientUnits="userSpaceOnUse" x1="1679.5" y1="218.3" x2="1676.7" y2="253.3"><stop stop-color="#00f" stop-opacity="0.631"/><stop offset="1" stop-color="#00f" stop-opacity="0.771"/></linearGradient><linearGradient id="n11" gradientUnits="userSpaceOnUse" x1="1648.0" y1="251.0" x2="1671.9" y2="264.5"><stop stop-color="#f00" stop-opacity="0.262"/><stop offset="1" stop-color="#f00" stop-opacity="0.363"/></linearGradient><linearGradient id="n12" gradientUnits="userSpaceOnUse" x1="1679.5" y1="218.3" x2="1677.4" y2="252.8"><stop stop-color="#00f" stop-opacity="0.631"/><stop offset="1" stop-color="#00f" stop-opacity="0.771"/></linearGradient><linearGradient id="n13" gradientUnits="userSpaceOnUse" x1="1648.0" y1="251.0" x2="1672.5" y2="264.1"><stop stop-color="#f00" stop-opacity="0.262"/><stop offset="1" stop-color="#f00" stop-opacity="0.363"/></linearGradient><linearGradient id="n14" gradientUnits="userSpaceOnUse" x1="1679.5" y1="251.0" x2="1677.8" y2="285.2"><stop stop-color="#00f" stop-opacity="0.763"/><stop offset="1" stop-color="#00f" stop-opacity="0.931"/></linearGradient><linearGradient id="n15" gradientUnits="userSpaceOnUse" x1="1648.0" y1="283.7" x2="1671.3" y2="297.5"><stop stop-color="#f00" stop-opacity="0.318"/><stop offset="1" stop-color="#f00" stop-opacity="0.435"/></linearGradient><linearGradient id="n16" gradientUnits="userSpaceOnUse" x1="1679.5" y1="251.0" x2="1678.7" y2="284.4"><stop stop-color="#00f" stop-opacity="0.763"/><stop offset="1" stop-color="#00f" stop-opacity="0.931"/></linearGradient><linearGradient id="n17" gradientUnits="userSpaceOnUse" x1="1648.0" y1="283.7" x2="1678.3" y2="289.8"><stop stop-color="#f00" stop-opacity="0.318"/><stop offset="1" stop-color="#f00" stop-opacity="0.435"/></linearGradient><linearGradient id="n18" gradientUnits="userSpaceOnUse" x1="1648.0" y1="316.3" x2="1648.0" y2="283.7"><stop stop-color="#0f0" stop-opacity="0.884"/><stop offset="1" stop-color="#0f0" stop-opacity="1.000"/></linearGradient><linearGradient id="n19" gradientUnits="userSpaceOnUse" x1="1679.5" y1="283.7" x2="1677.5" y2="318.0"><stop stop-color="#00f" stop-opacity="0.927"/><stop offset="1" stop-color="#00f" stop-opacity="1.000"/></linearGradient><linearGradient id="n20" gradientUnits="userSpaceOnUse" x1="1648.0" y1="316.3" x2="1677.9" y2="323.2"><stop stop-color="#f00" stop-opacity="0.342"/><stop offset="1" stop-color="#f00" stop-opacity="0.463"/></linearGradient><linearGradient id="n21" gradientUnits="userSpaceOnUse" x1="1679.5" y1="316.3" x2="1678.9" y2="283.7"><stop stop-color="#0f0" stop-opacity="0.882"/><stop offset="1" stop-color="#0f0" stop-opacity="1.000"/></linearGradient><linearGradient id="n22" gradientUnits="userSpaceOnUse" x1="1679.5" y1="283.7" x2="1679.5" y2="316.3"><stop stop-color="#00f" stop-opacity="0.927"/><stop offset="1" stop-color="#00f" stop-opacity="1.000"/></linearGradient><linearGradient id="n23" gradientUnits="userSpaceOnUse" x1="1648.0" y1="316.3" x2="1679.5" y2="316.6"><stop stop-color="#f00" stop-opacity="0.342"/><stop offset="1" stop-color="#f00" stop-opacity="0.463"/></linearGradient><linearGradient id="n24" gradientUnits="userSpaceOnUse" x1="1648.0" y1="349.0" x2="1647.6" y2="316.3"><stop stop-color="#0f0" stop-opacity="0.721"/><stop offset="1" stop-color="#0f0" stop-opacity="0.884"/></linearGradient><linearGradient id="n25" gradientUnits="userSpaceOnUse" x1="1648.0" y1="349.0" x2="1680.8" y2="347.6"><stop stop-color="#f00" stop-opacity="0.343"/><stop offset="1" stop-color="#f00" stop-opacity="0.463"/></linearGradient><linearGradient id="n26" gradientUnits="userSpaceOnUse" x1="1679.5" y1="349.0" x2="1678.2" y2="316.4"><stop stop-color="#0f0" stop-opacity="0.714"/><stop offset="1" stop-color="#0f0" stop-opacity="0.882"/></linearGradient><linearGradient id="n27" gradientUnits="userSpaceOnUse" x1="1679.5" y1="153.0" x2="1704.8" y2="165.6"><stop stop-color="#f00" stop-opacity="0.217"/><stop offset="1" stop-color="#f00" stop-opacity="0.294"/></linearGradient><linearGradient id="n28" gradientUnits="userSpaceOnUse" x1="1711.0" y1="153.0" x2="1705.7" y2="189.5"><stop stop-color="#00f" stop-opacity="0.422"/><stop offset="1" stop-color="#00f" stop-opacity="0.523"/></linearGradient><linearGradient id="n29" gradientUnits="userSpaceOnUse" x1="1679.5" y1="185.7" x2="1703.6" y2="199.0"><stop stop-color="#f00" stop-opacity="0.256"/><stop offset="1" stop-color="#f00" stop-opacity="0.344"/></linearGradient><linearGradient id="n30" gradientUnits="userSpaceOnUse" x1="1711.0" y1="153.0" x2="1706.0" y2="189.3"><stop stop-color="#00f" stop-opacity="0.422"/><stop offset="1" stop-color="#00f" stop-opacity="0.523"/></linearGradient><linearGradient id="n31" gradientUnits="userSpaceOnUse" x1="1679.5" y1="185.7" x2="1704.1" y2="198.7"><stop stop-color="#f00" stop-opacity="0.256"/><stop offset="1" stop-color="#f00" stop-opacity="0.344"/></linearGradient><linearGradient id="n32" gradientUnits="userSpaceOnUse" x1="1711.0" y1="185.7" x2="1706.9" y2="221.5"><stop stop-color="#00f" stop-opacity="0.512"/><stop offset="1" stop-color="#00f" stop-opacity="0.631"/></linearGradient><linearGradient id="n33" gradientUnits="userSpaceOnUse" x1="1679.5" y1="218.3" x2="1703.0" y2="232.0"><stop stop-color="#f00" stop-opacity="0.304"/><stop offset="1" stop-color="#f00" stop-opacity="0.404"/></linearGradient><linearGradient id="n34" gradientUnits="userSpaceOnUse" x1="1711.0" y1="185.7" x2="1707.4" y2="221.1"><stop stop-color="#00f" stop-opacity="0.512"/><stop offset="1" stop-color="#00f" stop-opacity="0.631"/></linearGradient><linearGradient id="n35" gradientUnits="userSpaceOnUse" x1="1679.5" y1="218.3" x2="1703.4" y2="231.8"><stop stop-color="#f00" stop-opacity="0.304"/><stop offset="1" stop-color="#f00" stop-opacity="0.404"/></linearGradient><linearGradient id="n36" gradientUnits="userSpaceOnUse" x1="1711.0" y1="218.3" x2="1708.1" y2="253.4"><stop stop-color="#00f" stop-opacity="0.621"/><stop offset="1" stop-color="#00f" stop-opacity="0.763"/></linearGradient><linearGradient id="n37" gradientUnits="userSpaceOnUse" x1="1679.5" y1="251.0" x2="1702.3" y2="265.1"><stop stop-color="#f00" stop-opacity="0.363"/><stop offset="1" stop-color="#f00" stop-opacity="0.479"/></linearGradient><linearGradient id="n38" gradientUnits="userSpaceOnUse" x1="1711.0" y1="218.3" x2="1708.8" y2="252.8"><stop stop-color="#00f" stop-opacity="0.621"/><stop offset="1" stop-color="#00f" stop-opacity="0.763"/></linearGradient><linearGradient id="n39" gradientUnits="userSpaceOnUse" x1="1679.5" y1="251.0" x2="1702.6" y2="264.9"><stop stop-color="#f00" stop-opacity="0.363"/><stop offset="1" stop-color="#f00" stop-opacity="0.479"/></linearGradient><linearGradient id="n40" gradientUnits="userSpaceOnUse" x1="1711.0" y1="251.0" x2="1709.2" y2="285.2"><stop stop-color="#00f" stop-opacity="0.755"/><stop offset="1" stop-color="#00f" stop-opacity="0.927"/></linearGradient><linearGradient id="n41" gradientUnits="userSpaceOnUse" x1="1679.5" y1="283.7" x2="1701.6" y2="298.1"><stop stop-color="#f00" stop-opacity="0.435"/><stop offset="1" stop-color="#f00" stop-opacity="0.570"/></linearGradient><linearGradient id="n42" gradientUnits="userSpaceOnUse" x1="1711.0" y1="251.0" x2="1710.2" y2="284.4"><stop stop-color="#00f" stop-opacity="0.755"/><stop offset="1" stop-color="#00f" stop-opacity="0.927"/></linearGradient><linearGradient id="n43" gradientUnits="userSpaceOnUse" x1="1679.5" y1="283.7" x2="1709.8" y2="289.8"><stop stop-color="#f00" stop-opacity="0.435"/><stop offset="1" stop-color="#f00" stop-opacity="0.570"/></linearGradient><linearGradient id="n44" gradientUnits="userSpaceOnUse" x1="1679.5" y1="316.3" x2="1679.5" y2="283.7"><stop stop-color="#0f0" stop-opacity="0.882"/><stop offset="1" stop-color="#0f0" stop-opacity="1.000"/></linearGradient><linearGradient id="n45" gradientUnits="userSpaceOnUse" x1="1711.0" y1="283.7" x2="1709.0" y2="318.0"><stop stop-color="#00f" stop-opacity="0.923"/><stop offset="1" stop-color="#00f" stop-opacity="1.000"/></linearGradient><linearGradient id="n46" gradientUnits="userSpaceOnUse" x1="1679.5" y1="316.3" x2="1709.4" y2="323.2"><stop stop-color="#f00" stop-opacity="0.463"/><stop offset="1" stop-color="#f00" stop-opacity="0.604"/></linearGradient><linearGradient id="n47" gradientUnits="userSpaceOnUse" x1="1711.0" y1="316.3" x2="1710.4" y2="283.7"><stop stop-color="#0f0" stop-opacity="0.880"/><stop offset="1" stop-color="#0f0" stop-opacity="1.000"/></linearGradient><linearGradient id="n48" gradientUnits="userSpaceOnUse" x1="1711.0" y1="283.7" x2="1711.0" y2="316.3"><stop stop-color="#00f" stop-opacity="0.923"/><stop offset="1" stop-color="#00f" stop-opacity="1.000"/></linearGradient><linearGradient id="n49" gradientUnits="userSpaceOnUse" x1="1679.5" y1="349.0" x2="1712.1" y2="347.9"><stop stop-color="#f00" stop-opacity="0.458"/><stop offset="1" stop-color="#f00" stop-opacity="0.604"/></linearGradient><linearGradient id="n50" gradientUnits="userSpaceOnUse" x1="1679.5" y1="349.0" x2="1679.1" y2="316.3"><stop stop-color="#0f0" stop-opacity="0.714"/><stop offset="1" stop-color="#0f0" stop-opacity="0.882"/></linearGradient><linearGradient id="n51" gradientUnits="userSpaceOnUse" x1="1679.5" y1="349.0" x2="1713.7" y2="345.9"><stop stop-color="#f00" stop-opacity="0.458"/><stop offset="1" stop-color="#f00" stop-opacity="0.604"/></linearGradient><linearGradient id="n52" gradientUnits="userSpaceOnUse" x1="1711.0" y1="349.0" x2="1709.6" y2="316.4"><stop stop-color="#0f0" stop-opacity="0.707"/><stop offset="1" stop-color="#0f0" stop-opacity="0.880"/></linearGradient><linearGradient id="n53" gradientUnits="userSpaceOnUse" x1="1711.0" y1="153.0" x2="1735.1" y2="166.3"><stop stop-color="#f00" stop-opacity="0.294"/><stop offset="1" stop-color="#f00" stop-opacity="0.381"/></linearGradient><linearGradient id="n54" gradientUnits="userSpaceOnUse" x1="1742.5" y1="153.0" x2="1737.0" y2="189.6"><stop stop-color="#00f" stop-opacity="0.409"/><stop offset="1" stop-color="#00f" stop-opacity="0.512"/></linearGradient><linearGradient id="n55" gradientUnits="userSpaceOnUse" x1="1711.0" y1="185.7" x2="1734.1" y2="199.6"><stop stop-color="#f00" stop-opacity="0.344"/><stop offset="1" stop-color="#f00" stop-opacity="0.443"/></linearGradient><linearGradient id="n56" gradientUnits="userSpaceOnUse" x1="1742.5" y1="153.0" x2="1737.3" y2="189.4"><stop stop-color="#00f" stop-opacity="0.409"/><stop offset="1" stop-color="#00f" stop-opacity="0.512"/></linearGradient><linearGradient id="n57" gradientUnits="userSpaceOnUse" x1="1711.0" y1="185.7" x2="1734.4" y2="199.4"><stop stop-color="#f00" stop-opacity="0.344"/><stop offset="1" stop-color="#f00" stop-opacity="0.443"/></linearGradient><linearGradient id="n58" gradientUnits="userSpaceOnUse" x1="1742.5" y1="185.7" x2="1738.3" y2="221.5"><stop stop-color="#00f" stop-opacity="0.499"/><stop offset="1" stop-color="#00f" stop-opacity="0.621"/></linearGradient><linearGradient id="n59" gradientUnits="userSpaceOnUse" x1="1711.0" y1="218.3" x2="1733.4" y2="232.6"><stop stop-color="#f00" stop-opacity="0.404"/><stop offset="1" stop-color="#f00" stop-opacity="0.519"/></linearGradient><linearGradient id="n60" gradientUnits="userSpaceOnUse" x1="1742.5" y1="185.7" x2="1738.8" y2="221.2"><stop stop-color="#00f" stop-opacity="0.499"/><stop offset="1" stop-color="#00f" stop-opacity="0.621"/></linearGradient><linearGradient id="n61" gradientUnits="userSpaceOnUse" x1="1711.0" y1="218.3" x2="1733.7" y2="232.5"><stop stop-color="#f00" stop-opacity="0.404"/><stop offset="1" stop-color="#f00" stop-opacity="0.519"/></linearGradient><linearGradient id="n62" gradientUnits="userSpaceOnUse" x1="1742.5" y1="218.3" x2="1739.5" y2="253.4"><stop stop-color="#00f" stop-opacity="0.610"/><stop offset="1" stop-color="#00f" stop-opacity="0.755"/></linearGradient><linearGradient id="n63" gradientUnits="userSpaceOnUse" x1="1711.0" y1="251.0" x2="1732.7" y2="265.6"><stop stop-color="#f00" stop-opacity="0.479"/><stop offset="1" stop-color="#f00" stop-opacity="0.611"/></linearGradient><linearGradient id="n64" gradientUnits="userSpaceOnUse" x1="1742.5" y1="218.3" x2="1740.2" y2="252.9"><stop stop-color="#00f" stop-opacity="0.610"/><stop offset="1" stop-color="#00f" stop-opacity="0.755"/></linearGradient><linearGradient id="n65" gradientUnits="userSpaceOnUse" x1="1711.0" y1="251.0" x2="1732.8" y2="265.5"><stop stop-color="#f00" stop-opacity="0.479"/><stop offset="1" stop-color="#f00" stop-opacity="0.611"/></linearGradient><linearGradient id="n66" gradientUnits="userSpaceOnUse" x1="1742.5" y1="251.0" x2="1740.7" y2="285.2"><stop stop-color="#00f" stop-opacity="0.746"/><stop offset="1" stop-color="#00f" stop-opacity="0.923"/></linearGradient><linearGradient id="n67" gradientUnits="userSpaceOnUse" x1="1711.0" y1="283.7" x2="1731.9" y2="298.5"><stop stop-color="#f00" stop-opacity="0.570"/><stop offset="1" stop-color="#f00" stop-opacity="0.727"/></linearGradient><linearGradient id="n68" gradientUnits="userSpaceOnUse" x1="1742.5" y1="251.0" x2="1741.6" y2="284.5"><stop stop-color="#00f" stop-opacity="0.746"/><stop offset="1" stop-color="#00f" stop-opacity="0.923"/></linearGradient><linearGradient id="n69" gradientUnits="userSpaceOnUse" x1="1711.0" y1="283.7" x2="1741.2" y2="289.9"><stop stop-color="#f00" stop-opacity="0.570"/><stop offset="1" stop-color="#f00" stop-opacity="0.727"/></linearGradient><linearGradient id="n70" gradientUnits="userSpaceOnUse" x1="1711.0" y1="316.3" x2="1711.0" y2="283.7"><stop stop-color="#0f0" stop-opacity="0.880"/><stop offset="1" stop-color="#0f0" stop-opacity="1.000"/></linearGradient><linearGradient id="n71" gradientUnits="userSpaceOnUse" x1="1742.5" y1="283.7" x2="1740.5" y2="318.1"><stop stop-color="#00f" stop-opacity="0.919"/><stop offset="1" stop-color="#00f" stop-opacity="1.000"/></linearGradient><linearGradient id="n72" gradientUnits="userSpaceOnUse" x1="1711.0" y1="316.3" x2="1740.9" y2="323.3"><stop stop-color="#f00" stop-opacity="0.604"/><stop offset="1" stop-color="#f00" stop-opacity="0.766"/></linearGradient><linearGradient id="n73" gradientUnits="userSpaceOnUse" x1="1742.5" y1="316.3" x2="1741.9" y2="283.7"><stop stop-color="#0f0" stop-opacity="0.877"/><stop offset="1" stop-color="#0f0" stop-opacity="1.000"/></linearGradient><linearGradient id="n74" gradientUnits="userSpaceOnUse" x1="1742.5" y1="283.7" x2="1742.5" y2="316.3"><stop stop-color="#00f" stop-opacity="0.919"/><stop offset="1" stop-color="#00f" stop-opacity="1.000"/></linearGradient><linearGradient id="n75" gradientUnits="userSpaceOnUse" x1="1711.0" y1="349.0" x2="1744.8" y2="346.5"><stop stop-color="#f00" stop-opacity="0.591"/><stop offset="1" stop-color="#f00" stop-opacity="0.766"/></linearGradient><linearGradient id="n76" gradientUnits="userSpaceOnUse" x1="1711.0" y1="349.0" x2="1710.6" y2="316.3"><stop stop-color="#0f0" stop-opacity="0.707"/><stop offset="1" stop-color="#0f0" stop-opacity="0.880"/></linearGradient><linearGradient id="n77" gradientUnits="userSpaceOnUse" x1="1711.0" y1="349.0" x2="1746.4" y2="344.0"><stop stop-color="#f00" stop-opacity="0.591"/><stop offset="1" stop-color="#f00" stop-opacity="0.766"/></linearGradient><linearGradient id="n78" gradientUnits="userSpaceOnUse" x1="1742.5" y1="349.0" x2="1741.1" y2="316.4"><stop stop-color="#0f0" stop-opacity="0.700"/><stop offset="1" stop-color="#0f0" stop-opacity="0.877"/></linearGradient><linearGradient id="n79" gradientUnits="userSpaceOnUse" x1="1742.5" y1="153.0" x2="1765.5" y2="167.0"><stop stop-color="#f00" stop-opacity="0.381"/><stop offset="1" stop-color="#f00" stop-opacity="0.480"/></linearGradient><linearGradient id="n80" gradientUnits="userSpaceOnUse" x1="1774.0" y1="153.0" x2="1768.3" y2="189.7"><stop stop-color="#00f" stop-opacity="0.396"/><stop offset="1" stop-color="#00f" stop-opacity="0.499"/></linearGradient><linearGradient id="n81" gradientUnits="userSpaceOnUse" x1="1742.5" y1="185.7" x2="1764.6" y2="200.1"><stop stop-color="#f00" stop-opacity="0.443"/><stop offset="1" stop-color="#f00" stop-opacity="0.556"/></linearGradient><linearGradient id="n82" gradientUnits="userSpaceOnUse" x1="1774.0" y1="153.0" x2="1768.6" y2="189.5"><stop stop-color="#00f" stop-opacity="0.396"/><stop offset="1" stop-color="#00f" stop-opacity="0.499"/></linearGradient><linearGradient id="n83" gradientUnits="userSpaceOnUse" x1="1742.5" y1="185.7" x2="1764.8" y2="200.0"><stop stop-color="#f00" stop-opacity="0.443"/><stop offset="1" stop-color="#f00" stop-opacity="0.556"/></linearGradient><linearGradient id="n84" gradientUnits="userSpaceOnUse" x1="1774.0" y1="185.7" x2="1769.6" y2="221.6"><stop stop-color="#00f" stop-opacity="0.486"/><stop offset="1" stop-color="#00f" stop-opacity="0.610"/></linearGradient><linearGradient id="n85" gradientUnits="userSpaceOnUse" x1="1742.5" y1="218.3" x2="1763.9" y2="233.0"><stop stop-color="#f00" stop-opacity="0.519"/><stop offset="1" stop-color="#f00" stop-opacity="0.649"/></linearGradient><linearGradient id="n86" gradientUnits="userSpaceOnUse" x1="1774.0" y1="185.7" x2="1770.1" y2="221.3"><stop stop-color="#00f" stop-opacity="0.486"/><stop offset="1" stop-color="#00f" stop-opacity="0.610"/></linearGradient><linearGradient id="n87" gradientUnits="userSpaceOnUse" x1="1742.5" y1="218.3" x2="1763.9" y2="233.0"><stop stop-color="#f00" stop-opacity="0.519"/><stop offset="1" stop-color="#f00" stop-opacity="0.649"/></linearGradient><linearGradient id="n88" gradientUnits="userSpaceOnUse" x1="1774.0" y1="218.3" x2="1770.9" y2="253.5"><stop stop-color="#00f" stop-opacity="0.598"/><stop offset="1" stop-color="#00f" stop-opacity="0.746"/></linearGradient><linearGradient id="n89" gradientUnits="userSpaceOnUse" x1="1742.5" y1="251.0" x2="1763.1" y2="266.0"><stop stop-color="#f00" stop-opacity="0.611"/><stop offset="1" stop-color="#f00" stop-opacity="0.763"/></linearGradient><linearGradient id="n90" gradientUnits="userSpaceOnUse" x1="1774.0" y1="218.3" x2="1771.7" y2="253.0"><stop stop-color="#00f" stop-opacity="0.598"/><stop offset="1" stop-color="#00f" stop-opacity="0.746"/></linearGradient><linearGradient id="n91" gradientUnits="userSpaceOnUse" x1="1742.5" y1="251.0" x2="1763.0" y2="266.0"><stop stop-color="#f00" stop-opacity="0.611"/><stop offset="1" stop-color="#f00" stop-opacity="0.763"/></linearGradient><linearGradient id="n92" gradientUnits="userSpaceOnUse" x1="1774.0" y1="251.0" x2="1772.1" y2="285.3"><stop stop-color="#00f" stop-opacity="0.737"/><stop offset="1" stop-color="#00f" stop-opacity="0.919"/></linearGradient><linearGradient id="n93" gradientUnits="userSpaceOnUse" x1="1742.5" y1="283.7" x2="1762.3" y2="298.9"><stop stop-color="#f00" stop-opacity="0.727"/><stop offset="1" stop-color="#f00" stop-opacity="0.905"/></linearGradient><linearGradient id="n94" gradientUnits="userSpaceOnUse" x1="1774.0" y1="251.0" x2="1773.1" y2="284.5"><stop stop-color="#00f" stop-opacity="0.737"/><stop offset="1" stop-color="#00f" stop-opacity="0.919"/></linearGradient><linearGradient id="n95" gradientUnits="userSpaceOnUse" x1="1742.5" y1="283.7" x2="1772.7" y2="290.0"><stop stop-color="#f00" stop-opacity="0.727"/><stop offset="1" stop-color="#f00" stop-opacity="0.905"/></linearGradient><linearGradient id="n96" gradientUnits="userSpaceOnUse" x1="1742.5" y1="316.3" x2="1742.5" y2="283.7"><stop stop-color="#0f0" stop-opacity="0.877"/><stop offset="1" stop-color="#0f0" stop-opacity="1.000"/></linearGradient><linearGradient id="n97" gradientUnits="userSpaceOnUse" x1="1774.0" y1="283.7" x2="1772.0" y2="318.1"><stop stop-color="#00f" stop-opacity="0.914"/><stop offset="1" stop-color="#00f" stop-opacity="1.000"/></linearGradient><linearGradient id="n98" gradientUnits="userSpaceOnUse" x1="1742.5" y1="316.3" x2="1772.3" y2="323.5"><stop stop-color="#f00" stop-opacity="0.766"/><stop offset="1" stop-color="#f00" stop-opacity="0.951"/></linearGradient><linearGradient id="n99" gradientUnits="userSpaceOnUse" x1="1774.0" y1="316.3" x2="1773.4" y2="283.7"><stop stop-color="#0f0" stop-opacity="0.875"/><stop offset="1" stop-color="#0f0" stop-opacity="1.000"/></linearGradient><linearGradient id="n100" gradientUnits="userSpaceOnUse" x1="1774.0" y1="283.7" x2="1774.0" y2="316.3"><stop stop-color="#00f" stop-opacity="0.914"/><stop offset="1" stop-color="#00f" stop-opacity="1.000"/></linearGradient><linearGradient id="n101" gradientUnits="userSpaceOnUse" x1="1742.5" y1="349.0" x2="1777.3" y2="344.9"><stop stop-color="#f00" stop-opacity="0.743"/><stop offset="1" stop-color="#f00" stop-opacity="0.951"/></linearGradient><linearGradient id="n102" gradientUnits="userSpaceOnUse" x1="1742.5" y1="349.0" x2="1742.1" y2="316.3"><stop stop-color="#0f0" stop-opacity="0.700"/><stop offset="1" stop-color="#0f0" stop-opacity="0.877"/></linearGradient><linearGradient id="n103" gradientUnits="userSpaceOnUse" x1="1742.5" y1="349.0" x2="1778.9" y2="342.0"><stop stop-color="#f00" stop-opacity="0.743"/><stop offset="1" stop-color="#f00" stop-opacity="0.951"/></linearGradient><linearGradient id="n104" gradientUnits="userSpaceOnUse" x1="1774.0" y1="349.0" x2="1772.6" y2="316.4"><stop stop-color="#0f0" stop-opacity="0.692"/><stop offset="1" stop-color="#0f0" stop-opacity="0.875"/></linearGradient><linearGradient id="n105" gradientUnits="userSpaceOnUse" x1="1774.0" y1="153.0" x2="1795.9" y2="167.5"><stop stop-color="#f00" stop-opacity="0.480"/><stop offset="1" stop-color="#f00" stop-opacity="0.591"/></linearGradient><linearGradient id="n106" gradientUnits="userSpaceOnUse" x1="1805.5" y1="153.0" x2="1799.6" y2="189.8"><stop stop-color="#00f" stop-opacity="0.382"/><stop offset="1" stop-color="#00f" stop-opacity="0.486"/></linearGradient><linearGradient id="n107" gradientUnits="userSpaceOnUse" x1="1774.0" y1="185.7" x2="1795.1" y2="200.5"><stop stop-color="#f00" stop-opacity="0.556"/><stop offset="1" stop-color="#f00" stop-opacity="0.683"/></linearGradient><linearGradient id="n108" gradientUnits="userSpaceOnUse" x1="1805.5" y1="153.0" x2="1799.8" y2="189.7"><stop stop-color="#00f" stop-opacity="0.382"/><stop offset="1" stop-color="#00f" stop-opacity="0.486"/></linearGradient><linearGradient id="n109" gradientUnits="userSpaceOnUse" x1="1774.0" y1="185.7" x2="1795.1" y2="200.5"><stop stop-color="#f00" stop-opacity="0.556"/><stop offset="1" stop-color="#f00" stop-opacity="0.683"/></linearGradient><linearGradient id="n110" gradientUnits="userSpaceOnUse" x1="1805.5" y1="185.7" x2="1801.0" y2="221.7"><stop stop-color="#00f" stop-opacity="0.473"/><stop offset="1" stop-color="#00f" stop-opacity="0.598"/></linearGradient><linearGradient id="n111" gradientUnits="userSpaceOnUse" x1="1774.0" y1="218.3" x2="1794.4" y2="233.4"><stop stop-color="#f00" stop-opacity="0.649"/><stop offset="1" stop-color="#f00" stop-opacity="0.795"/></linearGradient><linearGradient id="n112" gradientUnits="userSpaceOnUse" x1="1805.5" y1="185.7" x2="1801.5" y2="221.4"><stop stop-color="#00f" stop-opacity="0.473"/><stop offset="1" stop-color="#00f" stop-opacity="0.598"/></linearGradient><linearGradient id="n113" gradientUnits="userSpaceOnUse" x1="1774.0" y1="218.3" x2="1794.2" y2="233.4"><stop stop-color="#f00" stop-opacity="0.649"/><stop offset="1" stop-color="#f00" stop-opacity="0.795"/></linearGradient><linearGradient id="n114" gradientUnits="userSpaceOnUse" x1="1805.5" y1="218.3" x2="1802.3" y2="253.6"><stop stop-color="#00f" stop-opacity="0.586"/><stop offset="1" stop-color="#00f" stop-opacity="0.737"/></linearGradient><linearGradient id="n115" gradientUnits="userSpaceOnUse" x1="1774.0" y1="251.0" x2="1793.6" y2="266.3"><stop stop-color="#f00" stop-opacity="0.763"/><stop offset="1" stop-color="#f00" stop-opacity="0.934"/></linearGradient><linearGradient id="n116" gradientUnits="userSpaceOnUse" x1="1805.5" y1="218.3" x2="1803.1" y2="253.0"><stop stop-color="#00f" stop-opacity="0.586"/><stop offset="1" stop-color="#00f" stop-opacity="0.737"/></linearGradient><linearGradient id="n117" gradientUnits="userSpaceOnUse" x1="1774.0" y1="251.0" x2="1793.2" y2="266.4"><stop stop-color="#f00" stop-opacity="0.763"/><stop offset="1" stop-color="#f00" stop-opacity="0.934"/></linearGradient><linearGradient id="n118" gradientUnits="userSpaceOnUse" x1="1805.5" y1="251.0" x2="1803.6" y2="285.3"><stop stop-color="#00f" stop-opacity="0.728"/><stop offset="1" stop-color="#00f" stop-opacity="0.914"/></linearGradient><linearGradient id="n119" gradientUnits="userSpaceOnUse" x1="1774.0" y1="283.7" x2="1795.7" y2="298.2"><stop stop-color="#f00" stop-opacity="0.905"/><stop offset="1" stop-color="#f00" stop-opacity="1.000"/></linearGradient><linearGradient id="n120" gradientUnits="userSpaceOnUse" x1="1805.5" y1="283.7" x2="1789.2" y2="267.9"><stop stop-color="#0f0" stop-opacity="0.902"/><stop offset="1" stop-color="#0f0" stop-opacity="1.000"/></linearGradient><linearGradient id="n121" gradientUnits="userSpaceOnUse" x1="1805.5" y1="251.0" x2="1772.6" y2="282.2"><stop stop-color="#00f" stop-opacity="0.728"/><stop offset="1" stop-color="#00f" stop-opacity="0.914"/></linearGradient><linearGradient id="n122" gradientUnits="userSpaceOnUse" x1="1774.0" y1="283.7" x2="1799.9" y2="295.7"><stop stop-color="#f00" stop-opacity="0.905"/><stop offset="1" stop-color="#f00" stop-opacity="1.000"/></linearGradient><linearGradient id="n123" gradientUnits="userSpaceOnUse" x1="1774.0" y1="316.3" x2="1758.0" y2="296.7"><stop stop-color="#0f0" stop-opacity="0.875"/><stop offset="1" stop-color="#0f0" stop-opacity="1.000"/></linearGradient><linearGradient id="n124" gradientUnits="userSpaceOnUse" x1="1805.5" y1="283.7" x2="1771.5" y2="313.5"><stop stop-color="#00f" stop-opacity="0.820"/><stop offset="1" stop-color="#00f" stop-opacity="1.000"/></linearGradient><linearGradient id="n125" gradientUnits="userSpaceOnUse" x1="1774.0" y1="316.3" x2="1805.5" y2="316.3"><stop stop-color="#f00" stop-opacity="0.951"/><stop offset="1" stop-color="#f00" stop-opacity="1.000"/></linearGradient><linearGradient id="n126" gradientUnits="userSpaceOnUse" x1="1805.5" y1="316.3" x2="1789.4" y2="297.4"><stop stop-color="#0f0" stop-opacity="0.750"/><stop offset="1" stop-color="#0f0" stop-opacity="0.902"/></linearGradient><linearGradient id="n127" gradientUnits="userSpaceOnUse" x1="1805.5" y1="283.7" x2="1767.9" y2="294.0"><stop stop-color="#00f" stop-opacity="0.820"/><stop offset="1" stop-color="#00f" stop-opacity="1.000"/></linearGradient><linearGradient id="n128" gradientUnits="userSpaceOnUse" x1="1774.0" y1="349.0" x2="1810.7" y2="324.0"><stop stop-color="#f00" stop-opacity="0.916"/><stop offset="1" stop-color="#f00" stop-opacity="1.000"/></linearGradient><linearGradient id="n129" gradientUnits="userSpaceOnUse" x1="1774.0" y1="349.0" x2="1758.6" y2="327.2"><stop stop-color="#0f0" stop-opacity="0.692"/><stop offset="1" stop-color="#0f0" stop-opacity="0.875"/></linearGradient><linearGradient id="n130" gradientUnits="userSpaceOnUse" x1="1805.5" y1="316.3" x2="1774.0" y2="316.3"><stop stop-color="#00f" stop-opacity="0.860"/><stop offset="1" stop-color="#00f" stop-opacity="1.000"/></linearGradient><linearGradient id="n131" gradientUnits="userSpaceOnUse" x1="1774.0" y1="349.0" x2="1805.5" y2="349.0"><stop stop-color="#f00" stop-opacity="0.916"/><stop offset="1" stop-color="#f00" stop-opacity="1.000"/></linearGradient><linearGradient id="n132" gradientUnits="userSpaceOnUse" x1="1805.5" y1="349.0" x2="1791.2" y2="324.8"><stop stop-color="#0f0" stop-opacity="0.614"/><stop offset="1" stop-color="#0f0" stop-opacity="0.750"/></linearGradient><linearGradient id="n133" gradientUnits="userSpaceOnUse" x1="1805.5" y1="316.3" x2="1767.2" y2="330.2"><stop stop-color="#00f" stop-opacity="0.860"/><stop offset="1" stop-color="#00f" stop-opacity="1.000"/></linearGradient><linearGradient id="n134" gradientUnits="userSpaceOnUse" x1="1805.5" y1="153.0" x2="1826.3" y2="167.9"><stop stop-color="#f00" stop-opacity="0.591"/><stop offset="1" stop-color="#f00" stop-opacity="0.715"/></linearGradient><linearGradient id="n135" gradientUnits="userSpaceOnUse" x1="1837.0" y1="153.0" x2="1830.9" y2="189.9"><stop stop-color="#00f" stop-opacity="0.367"/><stop offset="1" stop-color="#00f" stop-opacity="0.473"/></linearGradient><linearGradient id="n136" gradientUnits="userSpaceOnUse" x1="1805.5" y1="185.7" x2="1825.7" y2="200.8"><stop stop-color="#f00" stop-opacity="0.683"/><stop offset="1" stop-color="#f00" stop-opacity="0.825"/></linearGradient><linearGradient id="n137" gradientUnits="userSpaceOnUse" x1="1837.0" y1="153.0" x2="1831.1" y2="189.8"><stop stop-color="#00f" stop-opacity="0.367"/><stop offset="1" stop-color="#00f" stop-opacity="0.473"/></linearGradient><linearGradient id="n138" gradientUnits="userSpaceOnUse" x1="1805.5" y1="185.7" x2="1825.4" y2="200.9"><stop stop-color="#f00" stop-opacity="0.683"/><stop offset="1" stop-color="#f00" stop-opacity="0.825"/></linearGradient><linearGradient id="n139" gradientUnits="userSpaceOnUse" x1="1837.0" y1="185.7" x2="1832.3" y2="221.8"><stop stop-color="#00f" stop-opacity="0.459"/><stop offset="1" stop-color="#00f" stop-opacity="0.586"/></linearGradient><linearGradient id="n140" gradientUnits="userSpaceOnUse" x1="1805.5" y1="218.3" x2="1824.9" y2="233.7"><stop stop-color="#f00" stop-opacity="0.795"/><stop offset="1" stop-color="#f00" stop-opacity="0.960"/></linearGradient><linearGradient id="n141" gradientUnits="userSpaceOnUse" x1="1837.0" y1="185.7" x2="1832.8" y2="221.5"><stop stop-color="#00f" stop-opacity="0.459"/><stop offset="1" stop-color="#00f" stop-opacity="0.586"/></linearGradient><linearGradient id="n142" gradientUnits="userSpaceOnUse" x1="1805.5" y1="218.3" x2="1824.5" y2="233.7"><stop stop-color="#f00" stop-opacity="0.795"/><stop offset="1" stop-color="#f00" stop-opacity="0.960"/></linearGradient><linearGradient id="n143" gradientUnits="userSpaceOnUse" x1="1837.0" y1="218.3" x2="1833.7" y2="253.7"><stop stop-color="#00f" stop-opacity="0.573"/><stop offset="1" stop-color="#00f" stop-opacity="0.728"/></linearGradient><linearGradient id="n144" gradientUnits="userSpaceOnUse" x1="1805.5" y1="251.0" x2="1829.0" y2="264.7"><stop stop-color="#f00" stop-opacity="0.934"/><stop offset="1" stop-color="#f00" stop-opacity="1.000"/></linearGradient><linearGradient id="n145" gradientUnits="userSpaceOnUse" x1="1837.0" y1="251.0" x2="1820.7" y2="235.3"><stop stop-color="#0f0" stop-opacity="0.887"/><stop offset="1" stop-color="#0f0" stop-opacity="1.000"/></linearGradient><linearGradient id="n146" gradientUnits="userSpaceOnUse" x1="1837.0" y1="218.3" x2="1800.1" y2="243.0"><stop stop-color="#00f" stop-opacity="0.573"/><stop offset="1" stop-color="#00f" stop-opacity="0.728"/></linearGradient><linearGradient id="n147" gradientUnits="userSpaceOnUse" x1="1805.5" y1="251.0" x2="1821.8" y2="266.7"><stop stop-color="#f00" stop-opacity="0.934"/><stop offset="1" stop-color="#f00" stop-opacity="1.000"/></linearGradient><linearGradient id="n148" gradientUnits="userSpaceOnUse" x1="1837.0" y1="251.0" x2="1818.4" y2="235.5"><stop stop-color="#0f0" stop-opacity="0.887"/><stop offset="1" stop-color="#0f0" stop-opacity="1.000"/></linearGradient><linearGradient id="n149" gradientUnits="userSpaceOnUse" x1="1837.0" y1="251.0" x2="1804.5" y2="282.7"><stop stop-color="#00f" stop-opacity="0.636"/><stop offset="1" stop-color="#00f" stop-opacity="0.820"/></linearGradient><linearGradient id="n150" gradientUnits="userSpaceOnUse" x1="1837.0" y1="283.7" x2="1819.1" y2="268.1"><stop stop-color="#0f0" stop-opacity="0.746"/><stop offset="1" stop-color="#0f0" stop-opacity="0.902"/></linearGradient><linearGradient id="n151" gradientUnits="userSpaceOnUse" x1="1837.0" y1="251.0" x2="1799.6" y2="260.5"><stop stop-color="#00f" stop-opacity="0.636"/><stop offset="1" stop-color="#00f" stop-opacity="0.820"/></linearGradient><linearGradient id="n152" gradientUnits="userSpaceOnUse" x1="1837.0" y1="283.7" x2="1820.3" y2="267.9"><stop stop-color="#0f0" stop-opacity="0.746"/><stop offset="1" stop-color="#0f0" stop-opacity="0.902"/></linearGradient><linearGradient id="n153" gradientUnits="userSpaceOnUse" x1="1837.0" y1="283.7" x2="1799.5" y2="293.5"><stop stop-color="#00f" stop-opacity="0.675"/><stop offset="1" stop-color="#00f" stop-opacity="0.860"/></linearGradient><linearGradient id="n154" gradientUnits="userSpaceOnUse" x1="1837.0" y1="316.3" x2="1820.2" y2="300.6"><stop stop-color="#0f0" stop-opacity="0.619"/><stop offset="1" stop-color="#0f0" stop-opacity="0.750"/></linearGradient><linearGradient id="n155" gradientUnits="userSpaceOnUse" x1="1837.0" y1="283.7" x2="1799.8" y2="292.7"><stop stop-color="#00f" stop-opacity="0.675"/><stop offset="1" stop-color="#00f" stop-opacity="0.860"/></linearGradient><linearGradient id="n156" gradientUnits="userSpaceOnUse" x1="1805.5" y1="349.0" x2="1789.2" y2="332.6"><stop stop-color="#0f0" stop-opacity="0.614"/><stop offset="1" stop-color="#0f0" stop-opacity="0.750"/></linearGradient><linearGradient id="n157" gradientUnits="userSpaceOnUse" x1="1837.0" y1="316.3" x2="1799.7" y2="325.6"><stop stop-color="#00f" stop-opacity="0.712"/><stop offset="1" stop-color="#00f" stop-opacity="0.898"/></linearGradient><linearGradient id="n158" gradientUnits="userSpaceOnUse" x1="1837.0" y1="349.0" x2="1820.7" y2="332.5"><stop stop-color="#0f0" stop-opacity="0.505"/><stop offset="1" stop-color="#0f0" stop-opacity="0.619"/></linearGradient><linearGradient id="n159" gradientUnits="userSpaceOnUse" x1="1837.0" y1="316.3" x2="1799.9" y2="325.0"><stop stop-color="#00f" stop-opacity="0.712"/><stop offset="1" stop-color="#00f" stop-opacity="0.898"/></linearGradient><linearGradient id="n160" gradientUnits="userSpaceOnUse" x1="1837.0" y1="153.0" x2="1856.7" y2="168.2"><stop stop-color="#f00" stop-opacity="0.715"/><stop offset="1" stop-color="#f00" stop-opacity="0.852"/></linearGradient><linearGradient id="n161" gradientUnits="userSpaceOnUse" x1="1868.5" y1="153.0" x2="1862.1" y2="190.0"><stop stop-color="#00f" stop-opacity="0.352"/><stop offset="1" stop-color="#00f" stop-opacity="0.459"/></linearGradient><linearGradient id="n162" gradientUnits="userSpaceOnUse" x1="1837.0" y1="185.7" x2="1856.2" y2="201.0"><stop stop-color="#f00" stop-opacity="0.825"/><stop offset="1" stop-color="#f00" stop-opacity="0.984"/></linearGradient><linearGradient id="n163" gradientUnits="userSpaceOnUse" x1="1868.5" y1="153.0" x2="1862.3" y2="189.9"><stop stop-color="#00f" stop-opacity="0.352"/><stop offset="1" stop-color="#00f" stop-opacity="0.459"/></linearGradient><linearGradient id="n164" gradientUnits="userSpaceOnUse" x1="1837.0" y1="185.7" x2="1855.8" y2="201.1"><stop stop-color="#f00" stop-opacity="0.825"/><stop offset="1" stop-color="#f00" stop-opacity="0.984"/></linearGradient><linearGradient id="n165" gradientUnits="userSpaceOnUse" x1="1868.5" y1="185.7" x2="1863.6" y2="221.9"><stop stop-color="#00f" stop-opacity="0.444"/><stop offset="1" stop-color="#00f" stop-opacity="0.573"/></linearGradient><linearGradient id="n166" gradientUnits="userSpaceOnUse" x1="1837.0" y1="218.3" x2="1864.2" y2="229.1"><stop stop-color="#f00" stop-opacity="0.960"/><stop offset="1" stop-color="#f00" stop-opacity="1.000"/></linearGradient><linearGradient id="n167" gradientUnits="userSpaceOnUse" x1="1868.5" y1="218.3" x2="1852.2" y2="202.6"><stop stop-color="#0f0" stop-opacity="0.873"/><stop offset="1" stop-color="#0f0" stop-opacity="1.000"/></linearGradient><linearGradient id="n168" gradientUnits="userSpaceOnUse" x1="1868.5" y1="185.7" x2="1830.3" y2="205.2"><stop stop-color="#00f" stop-opacity="0.444"/><stop offset="1" stop-color="#00f" stop-opacity="0.573"/></linearGradient><linearGradient id="n169" gradientUnits="userSpaceOnUse" x1="1837.0" y1="218.3" x2="1853.3" y2="234.1"><stop stop-color="#f00" stop-opacity="0.960"/><stop offset="1" stop-color="#f00" stop-opacity="1.000"/></linearGradient><linearGradient id="n170" gradientUnits="userSpaceOnUse" x1="1868.5" y1="218.3" x2="1850.4" y2="202.8"><stop stop-color="#0f0" stop-opacity="0.873"/><stop offset="1" stop-color="#0f0" stop-opacity="1.000"/></linearGradient><linearGradient id="n171" gradientUnits="userSpaceOnUse" x1="1868.5" y1="218.3" x2="1832.3" y2="244.5"><stop stop-color="#00f" stop-opacity="0.488"/><stop offset="1" stop-color="#00f" stop-opacity="0.636"/></linearGradient><linearGradient id="n172" gradientUnits="userSpaceOnUse" x1="1868.5" y1="251.0" x2="1850.7" y2="235.4"><stop stop-color="#0f0" stop-opacity="0.743"/><stop offset="1" stop-color="#0f0" stop-opacity="0.887"/></linearGradient><linearGradient id="n173" gradientUnits="userSpaceOnUse" x1="1868.5" y1="218.3" x2="1830.5" y2="230.3"><stop stop-color="#00f" stop-opacity="0.488"/><stop offset="1" stop-color="#00f" stop-opacity="0.636"/></linearGradient><linearGradient id="n174" gradientUnits="userSpaceOnUse" x1="1868.5" y1="251.0" x2="1851.8" y2="235.3"><stop stop-color="#0f0" stop-opacity="0.743"/><stop offset="1" stop-color="#0f0" stop-opacity="0.887"/></linearGradient><linearGradient id="n175" gradientUnits="userSpaceOnUse" x1="1868.5" y1="251.0" x2="1830.4" y2="263.7"><stop stop-color="#00f" stop-opacity="0.525"/><stop offset="1" stop-color="#00f" stop-opacity="0.675"/></linearGradient><linearGradient id="n176" gradientUnits="userSpaceOnUse" x1="1868.5" y1="283.7" x2="1851.7" y2="268.0"><stop stop-color="#0f0" stop-opacity="0.624"/><stop offset="1" stop-color="#0f0" stop-opacity="0.746"/></linearGradient><linearGradient id="n177" gradientUnits="userSpaceOnUse" x1="1868.5" y1="251.0" x2="1830.6" y2="262.4"><stop stop-color="#00f" stop-opacity="0.525"/><stop offset="1" stop-color="#00f" stop-opacity="0.675"/></linearGradient><linearGradient id="n178" gradientUnits="userSpaceOnUse" x1="1837.0" y1="316.3" x2="1820.7" y2="300.0"><stop stop-color="#0f0" stop-opacity="0.619"/><stop offset="1" stop-color="#0f0" stop-opacity="0.746"/></linearGradient><linearGradient id="n179" gradientUnits="userSpaceOnUse" x1="1868.5" y1="283.7" x2="1830.5" y2="295.7"><stop stop-color="#00f" stop-opacity="0.560"/><stop offset="1" stop-color="#00f" stop-opacity="0.712"/></linearGradient><linearGradient id="n180" gradientUnits="userSpaceOnUse" x1="1868.5" y1="316.3" x2="1852.2" y2="299.9"><stop stop-color="#0f0" stop-opacity="0.516"/><stop offset="1" stop-color="#0f0" stop-opacity="0.624"/></linearGradient><linearGradient id="n181" gradientUnits="userSpaceOnUse" x1="1868.5" y1="283.7" x2="1830.7" y2="294.5"><stop stop-color="#00f" stop-opacity="0.560"/><stop offset="1" stop-color="#00f" stop-opacity="0.712"/></linearGradient><linearGradient id="n182" gradientUnits="userSpaceOnUse" x1="1837.0" y1="349.0" x2="1820.7" y2="331.6"><stop stop-color="#0f0" stop-opacity="0.505"/><stop offset="1" stop-color="#0f0" stop-opacity="0.619"/></linearGradient><linearGradient id="n183" gradientUnits="userSpaceOnUse" x1="1868.5" y1="316.3" x2="1830.6" y2="327.7"><stop stop-color="#00f" stop-opacity="0.595"/><stop offset="1" stop-color="#00f" stop-opacity="0.748"/></linearGradient><linearGradient id="n184" gradientUnits="userSpaceOnUse" x1="1868.5" y1="349.0" x2="1852.2" y2="331.3"><stop stop-color="#0f0" stop-opacity="0.418"/><stop offset="1" stop-color="#0f0" stop-opacity="0.516"/></linearGradient><linearGradient id="n185" gradientUnits="userSpaceOnUse" x1="1868.5" y1="316.3" x2="1830.9" y2="326.7"><stop stop-color="#00f" stop-opacity="0.595"/><stop offset="1" stop-color="#00f" stop-opacity="0.748"/></linearGradient><linearGradient id="n186" gradientUnits="userSpaceOnUse" x1="1868.5" y1="153.0" x2="1886.7" y2="168.6"><stop stop-color="#f00" stop-opacity="0.852"/><stop offset="1" stop-color="#f00" stop-opacity="1.000"/></linearGradient><linearGradient id="n187" gradientUnits="userSpaceOnUse" x1="1900.0" y1="153.0" x2="1892.6" y2="190.4"><stop stop-color="#00f" stop-opacity="0.335"/><stop offset="1" stop-color="#00f" stop-opacity="0.444"/></linearGradient><linearGradient id="n188" gradientUnits="userSpaceOnUse" x1="1868.5" y1="185.7" x2="1900.0" y2="185.7"><stop stop-color="#f00" stop-opacity="0.984"/><stop offset="1" stop-color="#f00" stop-opacity="1.000"/></linearGradient><linearGradient id="n189" gradientUnits="userSpaceOnUse" x1="1900.0" y1="185.7" x2="1883.1" y2="170.0"><stop stop-color="#0f0" stop-opacity="0.862"/><stop offset="1" stop-color="#0f0" stop-opacity="1.000"/></linearGradient><linearGradient id="n190" gradientUnits="userSpaceOnUse" x1="1900.0" y1="153.0" x2="1861.6" y2="170.1"><stop stop-color="#00f" stop-opacity="0.335"/><stop offset="1" stop-color="#00f" stop-opacity="0.444"/></linearGradient><linearGradient id="n191" gradientUnits="userSpaceOnUse" x1="1868.5" y1="185.7" x2="1884.8" y2="201.4"><stop stop-color="#f00" stop-opacity="0.984"/><stop offset="1" stop-color="#f00" stop-opacity="1.000"/></linearGradient><linearGradient id="n192" gradientUnits="userSpaceOnUse" x1="1900.0" y1="185.7" x2="1882.3" y2="170.0"><stop stop-color="#0f0" stop-opacity="0.862"/><stop offset="1" stop-color="#0f0" stop-opacity="1.000"/></linearGradient><linearGradient id="n193" gradientUnits="userSpaceOnUse" x1="1900.0" y1="185.7" x2="1862.2" y2="207.4"><stop stop-color="#00f" stop-opacity="0.369"/><stop offset="1" stop-color="#00f" stop-opacity="0.488"/></linearGradient><linearGradient id="n194" gradientUnits="userSpaceOnUse" x1="1900.0" y1="218.3" x2="1882.3" y2="202.7"><stop stop-color="#0f0" stop-opacity="0.740"/><stop offset="1" stop-color="#0f0" stop-opacity="0.873"/></linearGradient><linearGradient id="n195" gradientUnits="userSpaceOnUse" x1="1900.0" y1="185.7" x2="1861.6" y2="200.4"><stop stop-color="#00f" stop-opacity="0.369"/><stop offset="1" stop-color="#00f" stop-opacity="0.488"/></linearGradient><linearGradient id="n196" gradientUnits="userSpaceOnUse" x1="1900.0" y1="218.3" x2="1883.3" y2="202.6"><stop stop-color="#0f0" stop-opacity="0.740"/><stop offset="1" stop-color="#0f0" stop-opacity="0.873"/></linearGradient><linearGradient id="n197" gradientUnits="userSpaceOnUse" x1="1900.0" y1="218.3" x2="1861.6" y2="234.1"><stop stop-color="#00f" stop-opacity="0.403"/><stop offset="1" stop-color="#00f" stop-opacity="0.525"/></linearGradient><linearGradient id="n198" gradientUnits="userSpaceOnUse" x1="1900.0" y1="251.0" x2="1883.3" y2="235.3"><stop stop-color="#0f0" stop-opacity="0.628"/><stop offset="1" stop-color="#0f0" stop-opacity="0.743"/></linearGradient><linearGradient id="n199" gradientUnits="userSpaceOnUse" x1="1900.0" y1="218.3" x2="1861.7" y2="232.3"><stop stop-color="#00f" stop-opacity="0.403"/><stop offset="1" stop-color="#00f" stop-opacity="0.525"/></linearGradient><linearGradient id="n200" gradientUnits="userSpaceOnUse" x1="1868.5" y1="283.7" x2="1852.2" y2="267.4"><stop stop-color="#0f0" stop-opacity="0.624"/><stop offset="1" stop-color="#0f0" stop-opacity="0.743"/></linearGradient><linearGradient id="n201" gradientUnits="userSpaceOnUse" x1="1900.0" y1="251.0" x2="1861.6" y2="265.9"><stop stop-color="#00f" stop-opacity="0.436"/><stop offset="1" stop-color="#00f" stop-opacity="0.560"/></linearGradient><linearGradient id="n202" gradientUnits="userSpaceOnUse" x1="1900.0" y1="283.7" x2="1883.7" y2="267.3"><stop stop-color="#0f0" stop-opacity="0.526"/><stop offset="1" stop-color="#0f0" stop-opacity="0.628"/></linearGradient><linearGradient id="n203" gradientUnits="userSpaceOnUse" x1="1900.0" y1="251.0" x2="1861.8" y2="264.3"><stop stop-color="#00f" stop-opacity="0.436"/><stop offset="1" stop-color="#00f" stop-opacity="0.560"/></linearGradient><linearGradient id="n204" gradientUnits="userSpaceOnUse" x1="1868.5" y1="316.3" x2="1852.2" y2="299.0"><stop stop-color="#0f0" stop-opacity="0.516"/><stop offset="1" stop-color="#0f0" stop-opacity="0.624"/></linearGradient><linearGradient id="n205" gradientUnits="userSpaceOnUse" x1="1900.0" y1="283.7" x2="1861.7" y2="297.7"><stop stop-color="#00f" stop-opacity="0.469"/><stop offset="1" stop-color="#00f" stop-opacity="0.595"/></linearGradient><linearGradient id="n206" gradientUnits="userSpaceOnUse" x1="1900.0" y1="316.3" x2="1883.7" y2="298.8"><stop stop-color="#0f0" stop-opacity="0.433"/><stop offset="1" stop-color="#0f0" stop-opacity="0.526"/></linearGradient><linearGradient id="n207" gradientUnits="userSpaceOnUse" x1="1900.0" y1="283.7" x2="1861.9" y2="296.3"><stop stop-color="#00f" stop-opacity="0.469"/><stop offset="1" stop-color="#00f" stop-opacity="0.595"/></linearGradient><linearGradient id="n208" gradientUnits="userSpaceOnUse" x1="1868.5" y1="349.0" x2="1852.3" y2="330.6"><stop stop-color="#0f0" stop-opacity="0.418"/><stop offset="1" stop-color="#0f0" stop-opacity="0.516"/></linearGradient><linearGradient id="n209" gradientUnits="userSpaceOnUse" x1="1900.0" y1="316.3" x2="1861.8" y2="329.7"><stop stop-color="#00f" stop-opacity="0.501"/><stop offset="1" stop-color="#00f" stop-opacity="0.629"/></linearGradient><linearGradient id="n210" gradientUnits="userSpaceOnUse" x1="1900.0" y1="349.0" x2="1883.9" y2="330.2"><stop stop-color="#0f0" stop-opacity="0.349"/><stop offset="1" stop-color="#0f0" stop-opacity="0.433"/></linearGradient><linearGradient id="n211" gradientUnits="userSpaceOnUse" x1="1900.0" y1="316.3" x2="1862.0" y2="328.4"><stop stop-color="#00f" stop-opacity="0.501"/><stop offset="1" stop-color="#00f" stop-opacity="0.629"/></linearGradient><linearGradient id="g33" x1="0" y1="0" x2="0" y2="1"><stop offset="0" stop-color="#2a2a2a"/><stop offset="0.5" stop-color="#262626"/><stop offset="0.55" stop-color="#161616"/><stop offset="1" stop-color="#121212"/></linearGradient><linearGradient id="g34" x1="0" y1="0" x2="0" y2="1"><stop offset="0" stop-color="#3e3e3e"/><stop offset="0.12" stop-color="#363636"/><stop offset="1" stop-color="#1e1e1e"/></linearGradient><linearGradient id="g35" x1="0" y1="0" x2="0" y2="1"><stop offset="0" stop-color="#a0a0a0"/><stop offset="0.5" stop-color="#7c7c7c"/><stop offset="1" stop-color="#585858"/></linearGradient><linearGradient id="g36" x1="0" y1="0" x2="0" y2="1"><stop offset="0" stop-color="#a0a0a0"/><stop offset="0.5" stop-color="#7c7c7c"/><stop offset="1" stop-color="#585858"/></linearGradient><linearGradient id="g37" x1="0" y1="0" x2="0" y2="1"><stop offset="0" stop-color="#a0a0a0"/><stop offset="0.5" stop-color="#7c7c7c"/><stop offset="1" stop-color="#585858"/></linearGradient><linearGradient id="g38" x1="0" y1="0" x2="0" y2="1"><stop offset="0" stop-color="#a0a0a0"/><stop offset="0.5" stop-color="#7c7c7c"/><stop offset="1" stop-color="#585858"/></linearGradient><linearGradient id="g39" x1="0" y1="0" x2="0" y2="1"><stop offset="0" stop-color="#a0a0a0"/><stop offset="0.5" stop-color="#7c7c7c"/><stop offset="1" stop-color="#585858"/></linearGradient><linearGradient id="g40" x1="0" y1="0" x2="0" y2="1"><stop offset="0" stop-color="#a0a0a0"/><stop offset="0.5" stop-color="#7c7c7c"/><stop offset="1" stop-color="#585858"/></linearGradient><linearGradient id="g41" x1="0" y1="0" x2="0" y2="1"><stop offset="0" stop-color="#a0a0a0"/><stop offset="0.5" stop-color="#7c7c7c"/><stop offset="1" stop-color="#585858"/></linearGradient><linearGradient id="g42" x1="0" y1="0" x2="0" y2="1"><stop offset="0" stop-color="#a8a8a8"/><stop offset="1" stop-color="#6a6a6a"/></linearGradient><linearGradient id="g43" x1="0" y1="0" x2="0" y2="1"><stop offset="0" stop-color="#b0b0b0"/><stop offset="1" stop-color="#707070"/></linearGradient><linearGradient id="g44" x1="0" y1="0" x2="0" y2="1"><stop offset="0" stop-color="#b0b0b0"/><stop offset="1" stop-color="#707070"/></linearGradient><linearGradient id="g45" x1="0" y1="0" x2="0" y2="1"><stop offset="0" stop-color="#b0b0b0"/><stop offset="1" stop-color="#707070"/></linearGradient><linearGradient id="g46" x1="0" y1="0" x2="0" y2="1"><stop offset="0" stop-color="#b0b0b0"/><stop offset="1" stop-color="#707070"/></linearGradient><linearGradient id="g47" x1="0" y1="0" x2="0" y2="1"><stop offset="0" stop-color="#b0b0b0"/><stop offset="1" stop-color="#707070"/></linearGradient><linearGradient id="g48" x1="0" y1="0" x2="0" y2="1"><stop offset="0" stop-color="#a8a8a8"/><stop offset="1" stop-color="#6e6e6e"/></linearGradient></defs><rect x="0" y="0" width="1920" height="1035" fill="#333" /><rect x="0" y="0" width="1920" height="25" fill="#fff" /><path d="M5.5 4.5 L17.5 15.5 L7 21.5 Z" fill="#2a0a06" stroke="#1a0806" stroke-width="1.6" stroke-linejoin="round"/><path d="M6.5 7 L11 11.5 L8 16 Z" fill="#c03020"/><path d="M9 13 L13 12.5 L11.5 17 Z" fill="#707040"/><path d="M10 18 L16 15.5 L9 20 Z" fill="#8a1020"/><text x="24" y="18.5" font-size="14" fill="#5a5a5a" text-anchor="start" font-weight="normal" textLength="240" lengthAdjust="spacingAndGlyphs" >CalMAN 5 CalMAN Ultimate for Business</text><line x1="1782" y1="12.5" x2="1793" y2="12.5" stroke="#666" stroke-width="1.3" /><rect x="1835" y="9" width="8" height="8" fill="none" stroke="#666" stroke-width="1.2"/><path d="M1837 9 V7 H1845 V15 H1843" fill="none" stroke="#666" stroke-width="1.2"/><path d="M1887 7 L1898 18 M1898 7 L1887 18" stroke="#666" stroke-width="1.3"/><rect x="0" y="25" width="1920" height="74" fill="#222" /><rect x="0" y="98" width="1920" height="1.5" fill="#1a1a1a" /><rect x="2" y="25" width="204" height="33" rx="3" fill="url(#g1)"/><text x="7.5" y="51.3" font-size="34" font-weight="bold" fill="#e6e6e6" stroke="#8a1010" stroke-width="2.2" paint-order="stroke" stroke-linejoin="round" textLength="158" lengthAdjust="spacingAndGlyphs">CalMAN 5</text><circle cx="187" cy="42" r="10.5" fill="#d42a22"/><path d="M181 39.5 L193 39.5 L187 46 Z" fill="#fff"/><rect x="214" y="40" width="1706" height="4.5" fill="url(#g2)" /><rect x="-4" y="65" width="34" height="32" rx="4" fill="url(#g3)" stroke="#b0b0b0" stroke-width="1"/><circle cx="14" cy="81" r="10" fill="url(#g4)"/><path d="M11.5 75.5 L18 81 L11.5 86.5 Z" fill="#f0f0f0"/><path d="M33.5 99.5 V69 a4 4 0 0 1 4 -4 H133 a4 4 0 0 1 4 4 V99.5" fill="#363636" stroke="#585858" stroke-width="1.5"/><line x1="98" y1="66" x2="98" y2="99" stroke="#4a4a4a" stroke-width="1.5" /><circle cx="116" cy="84" r="10" fill="url(#g5)"/><circle cx="116" cy="85" r="1.5" fill="#444"/><text x="40" y="88.5" font-size="14" fill="#d0d0d0" text-anchor="start" font-weight="normal" textLength="52.5" lengthAdjust="spacingAndGlyphs"  stroke="#d0d0d0" stroke-width="0.3">History 1</text><rect x="1324" y="65" width="160" height="34" rx="3" fill="url(#g6)"/><rect x="1325" y="66" width="5" height="33" rx="2" fill="#20d020"/><text x="1333" y="79" font-size="12" fill="#e4e4e4" text-anchor="start" font-weight="normal" textLength="119" lengthAdjust="spacingAndGlyphs"  stroke="#e4e4e4" stroke-width="0.25">X-Rite i1Display Retail</text><text x="1333" y="95" font-size="12" fill="#e4e4e4" text-anchor="start" font-weight="normal" textLength="79" lengthAdjust="spacingAndGlyphs"  stroke="#e4e4e4" stroke-width="0.25">LCD (LED RGB)</text><circle cx="1466" cy="83" r="9.5" fill="url(#g7)"/><path d="M1461 80.5 L1471 80.5 L1466 86 Z" fill="#fff"/><rect x="1492" y="65" width="145" height="34" rx="3" fill="url(#g8)"/><rect x="1493" y="66" width="5" height="33" rx="2" fill="#e8dc00"/><text x="1501" y="79" font-size="12" fill="#e4e4e4" text-anchor="start" font-weight="normal" textLength="38" lengthAdjust="spacingAndGlyphs"  stroke="#e4e4e4" stroke-width="0.25">Source</text><circle cx="1619" cy="83" r="9.5" fill="url(#g9)"/><path d="M1614 80.5 L1624 80.5 L1619 86 Z" fill="#fff"/><rect x="1645" y="65" width="159" height="34" rx="3" fill="url(#g10)"/><rect x="1646" y="66" width="5" height="33" rx="2" fill="#e8dc00"/><text x="1654" y="79" font-size="12" fill="#e4e4e4" text-anchor="start" font-weight="normal" textLength="119" lengthAdjust="spacingAndGlyphs"  stroke="#e4e4e4" stroke-width="0.25">Direct Display Control</text><circle cx="1786" cy="83" r="9.5" fill="url(#g11)"/><path d="M1781 80.5 L1791 80.5 L1786 86 Z" fill="#fff"/><rect x="1809" y="64.5" width="38" height="32.5" rx="4" fill="url(#g12)" stroke="#a0a0a0" stroke-width="1"/><circle cx="1828.0" cy="80.5" r="11" fill="url(#g13)"/><circle cx="1828.0" cy="80.5" r="5.6" fill="#dcdcdc"/><rect x="1826.4" y="72.5" width="3.2" height="4" fill="#dcdcdc" transform="rotate(0 1828.0 80.5)"/><rect x="1826.4" y="72.5" width="3.2" height="4" fill="#dcdcdc" transform="rotate(45 1828.0 80.5)"/><rect x="1826.4" y="72.5" width="3.2" height="4" fill="#dcdcdc" transform="rotate(90 1828.0 80.5)"/><rect x="1826.4" y="72.5" width="3.2" height="4" fill="#dcdcdc" transform="rotate(135 1828.0 80.5)"/><rect x="1826.4" y="72.5" width="3.2" height="4" fill="#dcdcdc" transform="rotate(180 1828.0 80.5)"/><rect x="1826.4" y="72.5" width="3.2" height="4" fill="#dcdcdc" transform="rotate(225 1828.0 80.5)"/><rect x="1826.4" y="72.5" width="3.2" height="4" fill="#dcdcdc" transform="rotate(270 1828.0 80.5)"/><rect x="1826.4" y="72.5" width="3.2" height="4" fill="#dcdcdc" transform="rotate(315 1828.0 80.5)"/><circle cx="1828.0" cy="80.5" r="2.8" fill="#6a6a6a"/><rect x="1850" y="64.5" width="37" height="32.5" rx="4" fill="url(#g14)" stroke="#a0a0a0" stroke-width="1"/><circle cx="1868.5" cy="80.5" r="11" fill="url(#g15)"/><text x="1868.5" y="88" font-size="19" font-weight="bold" fill="#e0e0e0" text-anchor="middle">?</text><rect x="1890" y="64.5" width="34" height="32.5" rx="4" fill="url(#g16)" stroke="#a0a0a0" stroke-width="1"/><circle cx="1907.0" cy="80.5" r="11" fill="url(#g17)"/><path d="M1902.0 80.5 L1908.5 75 L1908.5 86 Z" fill="#e0e0e0"/><rect x="0" y="99" width="5" height="864" fill="#2a2a2a" /><text x="29" y="161.7" font-size="45" fill="#f2f2f2" text-anchor="start" font-weight="normal" textLength="221.5" lengthAdjust="spacingAndGlyphs"  stroke="#f2f2f2" stroke-width="0.3">Colorspace</text><text x="171" y="215" font-size="16.5" fill="#cccccc" text-anchor="start" font-weight="normal" textLength="91" lengthAdjust="spacingAndGlyphs"  stroke="#cccccc" stroke-width="0.35">DeltaE 2000</text><rect x="24" y="219" width="384.75" height="438" fill="#222" /><line x1="75.3" y1="219" x2="75.3" y2="664" stroke="#7c7c7c" stroke-width="2.2" /><line x1="126.6" y1="219" x2="126.6" y2="664" stroke="#7c7c7c" stroke-width="2.2" /><line x1="177.89999999999998" y1="219" x2="177.89999999999998" y2="664" stroke="#7c7c7c" stroke-width="2.2" /><line x1="229.2" y1="219" x2="229.2" y2="664" stroke="#7c7c7c" stroke-width="2.2" /><line x1="280.5" y1="219" x2="280.5" y2="664" stroke="#7c7c7c" stroke-width="2.2" /><line x1="331.79999999999995" y1="219" x2="331.79999999999995" y2="664" stroke="#7c7c7c" stroke-width="2.2" /><line x1="383.09999999999997" y1="219" x2="383.09999999999997" y2="664" stroke="#7c7c7c" stroke-width="2.2" /><line x1="24" y1="219" x2="24" y2="664" stroke="#9a9a9a" stroke-width="2" /><rect x="24" y="219" width="384.75" height="438" fill="none" stroke="#9a9a9a" stroke-width="2"/><rect x="25" y="227" width="383.75" height="41" fill="url(#g18)" /><rect x="25" y="281" width="187.38898999999998" height="41" fill="url(#g19)" stroke="#111" stroke-width="1"/><rect x="25" y="336" width="252.06546499999996" height="41" fill="url(#g20)" stroke="#111" stroke-width="1"/><rect x="25" y="391" width="383.75" height="41" fill="url(#g21)" /><rect x="25" y="446" width="153.261665" height="41" fill="url(#g22)" stroke="#111" stroke-width="1"/><rect x="25" y="500" width="148.24709" height="41" fill="url(#g23)" stroke="#111" stroke-width="1"/><rect x="25" y="555" width="260.50175" height="41" fill="url(#g24)" stroke="#111" stroke-width="1"/><rect x="25" y="610" width="383.75" height="41" fill="url(#g25)" /><text x="24.0" y="682" font-size="16.5" fill="#cccccc" text-anchor="middle" font-weight="normal"  stroke="#cccccc" stroke-width="0.45">0</text><text x="75.3" y="682" font-size="16.5" fill="#cccccc" text-anchor="middle" font-weight="normal"  stroke="#cccccc" stroke-width="0.45">2</text><text x="126.6" y="682" font-size="16.5" fill="#cccccc" text-anchor="middle" font-weight="normal"  stroke="#cccccc" stroke-width="0.45">4</text><text x="177.89999999999998" y="682" font-size="16.5" fill="#cccccc" text-anchor="middle" font-weight="normal"  stroke="#cccccc" stroke-width="0.45">6</text><text x="229.2" y="682" font-size="16.5" fill="#cccccc" text-anchor="middle" font-weight="normal"  stroke="#cccccc" stroke-width="0.45">8</text><text x="280.5" y="682" font-size="16.5" fill="#cccccc" text-anchor="middle" font-weight="normal"  stroke="#cccccc" stroke-width="0.45">10</text><text x="331.79999999999995" y="682" font-size="16.5" fill="#cccccc" text-anchor="middle" font-weight="normal"  stroke="#cccccc" stroke-width="0.45">12</text><text x="383.09999999999997" y="682" font-size="16.5" fill="#cccccc" text-anchor="middle" font-weight="normal"  stroke="#cccccc" stroke-width="0.45">14</text><text x="17.6" y="768.6" font-size="31.5" fill="#f0f0f0" text-anchor="start" font-weight="normal" textLength="251.5" lengthAdjust="spacingAndGlyphs"  stroke="#f0f0f0" stroke-width="0.4">Current Reading</text><text x="17.6" y="813.2" font-size="27.5" fill="#ececec" text-anchor="start" font-weight="normal" textLength="118" lengthAdjust="spacingAndGlyphs"  stroke="#ececec" stroke-width="0.4">x: 0.2908</text><text x="17.6" y="855.6" font-size="27.5" fill="#ececec" text-anchor="start" font-weight="normal" textLength="119" lengthAdjust="spacingAndGlyphs"  stroke="#ececec" stroke-width="0.4">y: 0.2998</text><text x="17.6" y="898.7" font-size="27.5" fill="#ececec" text-anchor="start" font-weight="normal" textLength="110" lengthAdjust="spacingAndGlyphs"  stroke="#ececec" stroke-width="0.4">fL: 55.81</text><text x="17.6" y="942.6" font-size="27.5" fill="#ececec" text-anchor="start" font-weight="normal" textLength="166" lengthAdjust="spacingAndGlyphs"  stroke="#ececec" stroke-width="0.4">cd/m²: 191.2</text><rect x="407" y="746" width="291" height="192" fill="#222" /><text x="537" y="741" font-size="15.5" fill="#cccccc" text-anchor="middle" font-weight="normal" textLength="95" lengthAdjust="spacingAndGlyphs"  stroke="#cccccc" stroke-width="0.35">RGB Balance</text><line x1="401" y1="766.7" x2="698" y2="766.7" stroke="#8a8a8a" stroke-width="2" /><text x="399" y="772.7" font-size="15.5" fill="#cccccc" text-anchor="end" font-weight="normal"  stroke="#cccccc" stroke-width="0.4">40</text><line x1="401" y1="805.7" x2="698" y2="805.7" stroke="#8a8a8a" stroke-width="2" /><text x="399" y="811.7" font-size="15.5" fill="#cccccc" text-anchor="end" font-weight="normal"  stroke="#cccccc" stroke-width="0.4">20</text><line x1="401" y1="843.2" x2="698" y2="843.2" stroke="#8a8a8a" stroke-width="2" /><text x="399" y="849.2" font-size="15.5" fill="#cccccc" text-anchor="end" font-weight="normal"  stroke="#cccccc" stroke-width="0.4">0</text><line x1="401" y1="882.6" x2="698" y2="882.6" stroke="#8a8a8a" stroke-width="2" /><text x="399" y="888.6" font-size="15.5" fill="#cccccc" text-anchor="end" font-weight="normal"  stroke="#cccccc" stroke-width="0.4">-20</text><line x1="401" y1="920" x2="698" y2="920" stroke="#8a8a8a" stroke-width="2" /><text x="399" y="926" font-size="15.5" fill="#cccccc" text-anchor="end" font-weight="normal"  stroke="#cccccc" stroke-width="0.4">-40</text><rect x="407" y="746" width="291" height="192" fill="none" stroke="#9a9a9a" stroke-width="2"/><line x1="698" y1="938" x2="698" y2="944" stroke="#9a9a9a" stroke-width="2" /><line x1="407" y1="938" x2="407" y2="944" stroke="#9a9a9a" stroke-width="2" /><rect x="437" y="837" width="77" height="6.5" fill="url(#g26)" stroke="#111" stroke-width="1"/><rect x="514" y="843.5" width="78.5" height="11.5" fill="url(#g27)" stroke="#111" stroke-width="1"/><rect x="592.5" y="754.5" width="78.5" height="88.5" fill="url(#g28)" stroke="#111" stroke-width="1"/><text x="552" y="955" font-size="16.5" fill="#cccccc" text-anchor="middle" font-weight="normal"  stroke="#cccccc" stroke-width="0.35">100W</text><rect x="469.5" y="148.4" width="166.5" height="334.6" fill="#222" /><line x1="463.5" y1="148.40000000000003" x2="636.0" y2="148.40000000000003" stroke="#959595" stroke-width="2" /><text x="462.5" y="154.90000000000003" font-size="16.5" fill="#cccccc" text-anchor="end" font-weight="normal"  stroke="#cccccc" stroke-width="0.4">15</text><line x1="463.5" y1="204.16666666666669" x2="636.0" y2="204.16666666666669" stroke="#959595" stroke-width="2" /><text x="462.5" y="210.66666666666669" font-size="16.5" fill="#cccccc" text-anchor="end" font-weight="normal"  stroke="#cccccc" stroke-width="0.4">10</text><line x1="463.5" y1="259.9333333333334" x2="636.0" y2="259.9333333333334" stroke="#959595" stroke-width="2" /><text x="462.5" y="266.4333333333334" font-size="16.5" fill="#cccccc" text-anchor="end" font-weight="normal"  stroke="#cccccc" stroke-width="0.4">5</text><line x1="463.5" y1="315.70000000000005" x2="636.0" y2="315.70000000000005" stroke="#959595" stroke-width="2" /><text x="462.5" y="322.20000000000005" font-size="16.5" fill="#cccccc" text-anchor="end" font-weight="normal"  stroke="#cccccc" stroke-width="0.4">0</text><line x1="463.5" y1="371.4666666666667" x2="636.0" y2="371.4666666666667" stroke="#959595" stroke-width="2" /><text x="462.5" y="377.9666666666667" font-size="16.5" fill="#cccccc" text-anchor="end" font-weight="normal"  stroke="#cccccc" stroke-width="0.4">-5</text><line x1="463.5" y1="427.2333333333334" x2="636.0" y2="427.2333333333334" stroke="#959595" stroke-width="2" /><text x="462.5" y="433.7333333333334" font-size="16.5" fill="#cccccc" text-anchor="end" font-weight="normal"  stroke="#cccccc" stroke-width="0.4">-10</text><line x1="463.5" y1="483.00000000000006" x2="636.0" y2="483.00000000000006" stroke="#959595" stroke-width="2" /><text x="462.5" y="489.50000000000006" font-size="16.5" fill="#cccccc" text-anchor="end" font-weight="normal"  stroke="#cccccc" stroke-width="0.4">-15</text><line x1="485.5" y1="315.70000000000005" x2="620.5" y2="315.70000000000005" stroke="#1c1c1c" stroke-width="2" /><rect x="469.5" y="148.4" width="166.5" height="334.6" fill="none" stroke="#a0a0a0" stroke-width="2"/><line x1="469.5" y1="483" x2="469.5" y2="489" stroke="#a0a0a0" stroke-width="2" /><line x1="636.0" y1="483" x2="636.0" y2="489" stroke="#a0a0a0" stroke-width="2" /><text x="537.0" y="143.7" font-size="16.5" fill="#cccccc" text-anchor="middle" font-weight="normal"  stroke="#cccccc" stroke-width="0.35">DeltaL</text><text x="552.5" y="501.4" font-size="16.5" fill="#cccccc" text-anchor="middle" font-weight="normal"  stroke="#cccccc" stroke-width="0.35">100W</text><rect x="696.5" y="148.4" width="166.5" height="334.6" fill="#222" /><line x1="690.5" y1="148.40000000000003" x2="863.0" y2="148.40000000000003" stroke="#959595" stroke-width="2" /><text x="689.5" y="154.90000000000003" font-size="16.5" fill="#cccccc" text-anchor="end" font-weight="normal"  stroke="#cccccc" stroke-width="0.4">15</text><line x1="690.5" y1="204.16666666666669" x2="863.0" y2="204.16666666666669" stroke="#959595" stroke-width="2" /><text x="689.5" y="210.66666666666669" font-size="16.5" fill="#cccccc" text-anchor="end" font-weight="normal"  stroke="#cccccc" stroke-width="0.4">10</text><line x1="690.5" y1="259.9333333333334" x2="863.0" y2="259.9333333333334" stroke="#959595" stroke-width="2" /><text x="689.5" y="266.4333333333334" font-size="16.5" fill="#cccccc" text-anchor="end" font-weight="normal"  stroke="#cccccc" stroke-width="0.4">5</text><line x1="690.5" y1="315.70000000000005" x2="863.0" y2="315.70000000000005" stroke="#959595" stroke-width="2" /><text x="689.5" y="322.20000000000005" font-size="16.5" fill="#cccccc" text-anchor="end" font-weight="normal"  stroke="#cccccc" stroke-width="0.4">0</text><line x1="690.5" y1="371.4666666666667" x2="863.0" y2="371.4666666666667" stroke="#959595" stroke-width="2" /><text x="689.5" y="377.9666666666667" font-size="16.5" fill="#cccccc" text-anchor="end" font-weight="normal"  stroke="#cccccc" stroke-width="0.4">-5</text><line x1="690.5" y1="427.2333333333334" x2="863.0" y2="427.2333333333334" stroke="#959595" stroke-width="2" /><text x="689.5" y="433.7333333333334" font-size="16.5" fill="#cccccc" text-anchor="end" font-weight="normal"  stroke="#cccccc" stroke-width="0.4">-10</text><line x1="690.5" y1="483.00000000000006" x2="863.0" y2="483.00000000000006" stroke="#959595" stroke-width="2" /><text x="689.5" y="489.50000000000006" font-size="16.5" fill="#cccccc" text-anchor="end" font-weight="normal"  stroke="#cccccc" stroke-width="0.4">-15</text><rect x="715" y="149.4" width="130" height="166.30000000000004" fill="url(#g29)" stroke="#151515" stroke-width="1"/><rect x="696.5" y="148.4" width="166.5" height="334.6" fill="none" stroke="#a0a0a0" stroke-width="2"/><line x1="696.5" y1="483" x2="696.5" y2="489" stroke="#a0a0a0" stroke-width="2" /><line x1="863.0" y1="483" x2="863.0" y2="489" stroke="#a0a0a0" stroke-width="2" /><text x="764.0" y="143.7" font-size="16.5" fill="#cccccc" text-anchor="middle" font-weight="normal"  stroke="#cccccc" stroke-width="0.35">DeltaC</text><text x="779.5" y="501.4" font-size="16.5" fill="#cccccc" text-anchor="middle" font-weight="normal"  stroke="#cccccc" stroke-width="0.35">100W</text><rect x="923.3" y="148.4" width="166.5" height="334.6" fill="#222" /><line x1="917.3" y1="148.40000000000003" x2="1089.8" y2="148.40000000000003" stroke="#959595" stroke-width="2" /><text x="916.3" y="154.90000000000003" font-size="16.5" fill="#cccccc" text-anchor="end" font-weight="normal"  stroke="#cccccc" stroke-width="0.4">15</text><line x1="917.3" y1="204.16666666666669" x2="1089.8" y2="204.16666666666669" stroke="#959595" stroke-width="2" /><text x="916.3" y="210.66666666666669" font-size="16.5" fill="#cccccc" text-anchor="end" font-weight="normal"  stroke="#cccccc" stroke-width="0.4">10</text><line x1="917.3" y1="259.9333333333334" x2="1089.8" y2="259.9333333333334" stroke="#959595" stroke-width="2" /><text x="916.3" y="266.4333333333334" font-size="16.5" fill="#cccccc" text-anchor="end" font-weight="normal"  stroke="#cccccc" stroke-width="0.4">5</text><line x1="917.3" y1="315.70000000000005" x2="1089.8" y2="315.70000000000005" stroke="#959595" stroke-width="2" /><text x="916.3" y="322.20000000000005" font-size="16.5" fill="#cccccc" text-anchor="end" font-weight="normal"  stroke="#cccccc" stroke-width="0.4">0</text><line x1="917.3" y1="371.4666666666667" x2="1089.8" y2="371.4666666666667" stroke="#959595" stroke-width="2" /><text x="916.3" y="377.9666666666667" font-size="16.5" fill="#cccccc" text-anchor="end" font-weight="normal"  stroke="#cccccc" stroke-width="0.4">-5</text><line x1="917.3" y1="427.2333333333334" x2="1089.8" y2="427.2333333333334" stroke="#959595" stroke-width="2" /><text x="916.3" y="433.7333333333334" font-size="16.5" fill="#cccccc" text-anchor="end" font-weight="normal"  stroke="#cccccc" stroke-width="0.4">-10</text><line x1="917.3" y1="483.00000000000006" x2="1089.8" y2="483.00000000000006" stroke="#959595" stroke-width="2" /><text x="916.3" y="489.50000000000006" font-size="16.5" fill="#cccccc" text-anchor="end" font-weight="normal"  stroke="#cccccc" stroke-width="0.4">-15</text><line x1="939.3" y1="315.70000000000005" x2="1074.3" y2="315.70000000000005" stroke="#1c1c1c" stroke-width="2" /><rect x="923.3" y="148.4" width="166.5" height="334.6" fill="none" stroke="#a0a0a0" stroke-width="2"/><line x1="923.3" y1="483" x2="923.3" y2="489" stroke="#a0a0a0" stroke-width="2" /><line x1="1089.8" y1="483" x2="1089.8" y2="489" stroke="#a0a0a0" stroke-width="2" /><text x="990.8" y="143.7" font-size="16.5" fill="#cccccc" text-anchor="middle" font-weight="normal"  stroke="#cccccc" stroke-width="0.35">DeltaH</text><text x="1006.3" y="501.4" font-size="16.5" fill="#cccccc" text-anchor="middle" font-weight="normal"  stroke="#cccccc" stroke-width="0.35">100W</text><rect x="433" y="518" width="680" height="173" fill="#000" /><rect x="453.0" y="526.5" width="71" height="70" fill="#c8cde0" /><rect x="453.0" y="596.5" width="71" height="70.5" fill="#c8d2c0" /><rect x="453.0" y="526.5" width="71" height="140.5" fill="none" stroke="#e8e8e8" stroke-width="1.2"/><text x="488.5" y="683.2" font-size="14" fill="#eeeeee" text-anchor="middle" font-weight="bold" >White</text><rect x="536.1" y="526.5" width="71" height="70" fill="#c41a40" /><rect x="536.1" y="596.5" width="71" height="70.5" fill="#d8001c" /><rect x="536.1" y="526.5" width="71" height="140.5" fill="none" stroke="#e8e8e8" stroke-width="1.2"/><text x="571.6" y="683.2" font-size="14" fill="#eeeeee" text-anchor="middle" font-weight="bold" >Red</text><rect x="619.2" y="526.5" width="71" height="70" fill="#70d880" /><rect x="619.2" y="596.5" width="71" height="70.5" fill="#00d850" /><rect x="619.2" y="526.5" width="71" height="140.5" fill="none" stroke="#e8e8e8" stroke-width="1.2"/><text x="654.7" y="683.2" font-size="14" fill="#eeeeee" text-anchor="middle" font-weight="bold" >Green</text><rect x="702.3" y="526.5" width="71" height="70" fill="#1000f0" /><rect x="702.3" y="596.5" width="71" height="70.5" fill="#2000c0" /><rect x="702.3" y="526.5" width="71" height="140.5" fill="none" stroke="#e8e8e8" stroke-width="1.2"/><text x="737.8" y="683.2" font-size="14" fill="#eeeeee" text-anchor="middle" font-weight="bold" >Blue</text><rect x="785.4" y="526.5" width="71" height="70" fill="#a8e0a8" /><rect x="785.4" y="596.5" width="71" height="70.5" fill="#00d8c8" /><rect x="785.4" y="526.5" width="71" height="140.5" fill="none" stroke="#e8e8e8" stroke-width="1.2"/><text x="820.9" y="683.2" font-size="14" fill="#eeeeee" text-anchor="middle" font-weight="bold" >Cyan</text><rect x="868.5" y="526.5" width="71" height="70" fill="#b800f8" /><rect x="868.5" y="596.5" width="71" height="70.5" fill="#d800c8" /><rect x="868.5" y="526.5" width="71" height="140.5" fill="none" stroke="#e8e8e8" stroke-width="1.2"/><text x="904.0" y="683.2" font-size="14" fill="#eeeeee" text-anchor="middle" font-weight="bold" >Magenta</text><rect x="951.5999999999999" y="526.5" width="71" height="70" fill="#d0c060" /><rect x="951.5999999999999" y="596.5" width="71" height="70.5" fill="#c8d800" /><rect x="951.5999999999999" y="526.5" width="71" height="140.5" fill="none" stroke="#e8e8e8" stroke-width="1.2"/><text x="987.0999999999999" y="683.2" font-size="14" fill="#eeeeee" text-anchor="middle" font-weight="bold" >Yellow</text><rect x="1034.6999999999998" y="526.5" width="71" height="70" fill="#dde4f8" /><rect x="1034.6999999999998" y="596.5" width="71" height="70.5" fill="#dce8d8" /><rect x="1034.6999999999998" y="526.5" width="71" height="140.5" fill="none" stroke="#e8e8e8" stroke-width="1.2"/><text x="1070.1999999999998" y="683.2" font-size="14" fill="#eeeeee" text-anchor="middle" font-weight="bold" >100W</text><text x="0" y="0" font-size="12.5" font-weight="bold" fill="#f0f0f0" text-anchor="middle" transform="translate(446 556) rotate(-90)">Actual</text><text x="0" y="0" font-size="12.5" font-weight="bold" fill="#f0f0f0" text-anchor="middle" transform="translate(446 636) rotate(-90)">Target</text><rect x="1121" y="115" width="799" height="590" fill="#1c1c1c" /><rect x="1128" y="121" width="784" height="577" fill="#333" /><text x="1520" y="141" font-size="16" fill="#cccccc" text-anchor="middle" font-weight="normal" textLength="87" lengthAdjust="spacingAndGlyphs"  stroke="#cccccc" stroke-width="0.35">CIE 1931 xy</text><rect x="1163" y="146.6" width="745" height="521.4" fill="#222" /><g clip-path="url(#horse)"><rect x="1150" y="140" width="700" height="540" fill="url(#g30)" /><polygon points="1396.8,240.2 1346.8,40.2 2013.7,453.8 1813.7,503.8 1765.2,469.9" fill="url(#g31)"/><polygon points="1294.7,631.3 1765.2,469.9 1813.7,503.8 1863.7,803.8 1216.1,765.4 1316.1,665.4 1296.1,645.4" fill="url(#g32)"/></g><g clip-path="url(#tri)"><g style="isolation:isolate"><polygon points="1396.8,236.2 1771.2,469.9 1291.7,634.3" fill="#000" shape-rendering="crispEdges"/><polygon points="1443.0,467.0 1509.0,467.6 1466.4,441.0" fill="#f00" fill-opacity="1.000" style="mix-blend-mode:plus-lighter" shape-rendering="crispEdges"/><polygon points="1443.0,467.0 1509.0,467.6 1466.4,441.0" fill="url(#m0_1)" style="mix-blend-mode:plus-lighter" shape-rendering="crispEdges"/><polygon points="1443.0,467.0 1509.0,467.6 1466.4,441.0" fill="url(#m0_2)" style="mix-blend-mode:plus-lighter" shape-rendering="crispEdges"/><polygon points="1509.0,467.6 1532.5,441.6 1466.4,441.0" fill="#f00" fill-opacity="1.000" style="mix-blend-mode:plus-lighter" shape-rendering="crispEdges"/><polygon points="1509.0,467.6 1532.5,441.6 1466.4,441.0" fill="url(#m0_3)" style="mix-blend-mode:plus-lighter" shape-rendering="crispEdges"/><polygon points="1509.0,467.6 1532.5,441.6 1466.4,441.0" fill="url(#m0_4)" style="mix-blend-mode:plus-lighter" shape-rendering="crispEdges"/><polygon points="1466.4,441.0 1532.5,441.6 1489.9,415.1" fill="#f00" fill-opacity="1.000" style="mix-blend-mode:plus-lighter" shape-rendering="crispEdges"/><polygon points="1466.4,441.0 1532.5,441.6 1489.9,415.1" fill="url(#m0_5)" style="mix-blend-mode:plus-lighter" shape-rendering="crispEdges"/><polygon points="1466.4,441.0 1532.5,441.6 1489.9,415.1" fill="url(#m0_6)" style="mix-blend-mode:plus-lighter" shape-rendering="crispEdges"/><polygon points="1532.5,441.6 1555.9,415.6 1489.9,415.1" fill="#f00" fill-opacity="1.000" style="mix-blend-mode:plus-lighter" shape-rendering="crispEdges"/><polygon points="1532.5,441.6 1555.9,415.6 1489.9,415.1" fill="url(#m0_7)" style="mix-blend-mode:plus-lighter" shape-rendering="crispEdges"/><polygon points="1532.5,441.6 1555.9,415.6 1489.9,415.1" fill="url(#m0_8)" style="mix-blend-mode:plus-lighter" shape-rendering="crispEdges"/><polygon points="1489.9,415.1 1555.9,415.6 1513.3,389.1" fill="#f00" fill-opacity="1.000" style="mix-blend-mode:plus-lighter" shape-rendering="crispEdges"/><polygon points="1489.9,415.1 1555.9,415.6 1513.3,389.1" fill="url(#m0_9)" style="mix-blend-mode:plus-lighter" shape-rendering="crispEdges"/><polygon points="1489.9,415.1 1555.9,415.6 1513.3,389.1" fill="url(#m0_10)" style="mix-blend-mode:plus-lighter" shape-rendering="crispEdges"/><polygon points="1555.9,415.6 1579.4,389.7 1513.3,389.1" fill="#f00" fill-opacity="1.000" style="mix-blend-mode:plus-lighter" shape-rendering="crispEdges"/><polygon points="1555.9,415.6 1579.4,389.7 1513.3,389.1" fill="url(#m0_11)" style="mix-blend-mode:plus-lighter" shape-rendering="crispEdges"/><polygon points="1555.9,415.6 1579.4,389.7 1513.3,389.1" fill="url(#m0_12)" style="mix-blend-mode:plus-lighter" shape-rendering="crispEdges"/><polygon points="1513.3,389.1 1579.4,389.7 1536.8,363.1" fill="#f00" fill-opacity="1.000" style="mix-blend-mode:plus-lighter" shape-rendering="crispEdges"/><polygon points="1513.3,389.1 1579.4,389.7 1536.8,363.1" fill="url(#m0_13)" style="mix-blend-mode:plus-lighter" shape-rendering="crispEdges"/><polygon points="1513.3,389.1 1579.4,389.7 1536.8,363.1" fill="url(#m0_14)" style="mix-blend-mode:plus-lighter" shape-rendering="crispEdges"/><polygon points="1579.4,389.7 1602.8,363.7 1536.8,363.1" fill="#f00" fill-opacity="1.000" style="mix-blend-mode:plus-lighter" shape-rendering="crispEdges"/><polygon points="1579.4,389.7 1602.8,363.7 1536.8,363.1" fill="url(#m0_15)" style="mix-blend-mode:plus-lighter" shape-rendering="crispEdges"/><polygon points="1579.4,389.7 1602.8,363.7 1536.8,363.1" fill="url(#m0_16)" style="mix-blend-mode:plus-lighter" shape-rendering="crispEdges"/><polygon points="1536.8,363.1 1602.8,363.7 1560.2,337.1" fill="#f00" fill-opacity="1.000" style="mix-blend-mode:plus-lighter" shape-rendering="crispEdges"/><polygon points="1536.8,363.1 1602.8,363.7 1560.2,337.1" fill="url(#m0_17)" style="mix-blend-mode:plus-lighter" shape-rendering="crispEdges"/><polygon points="1536.8,363.1 1602.8,363.7 1560.2,337.1" fill="url(#m0_18)" style="mix-blend-mode:plus-lighter" shape-rendering="crispEdges"/><polygon points="1509.0,467.6 1575.1,468.2 1532.5,441.6" fill="#f00" fill-opacity="1.000" style="mix-blend-mode:plus-lighter" shape-rendering="crispEdges"/><polygon points="1509.0,467.6 1575.1,468.2 1532.5,441.6" fill="url(#m0_19)" style="mix-blend-mode:plus-lighter" shape-rendering="crispEdges"/><polygon points="1509.0,467.6 1575.1,468.2 1532.5,441.6" fill="url(#m0_20)" style="mix-blend-mode:plus-lighter" shape-rendering="crispEdges"/><polygon points="1575.1,468.2 1598.5,442.2 1532.5,441.6" fill="#f00" fill-opacity="1.000" style="mix-blend-mode:plus-lighter" shape-rendering="crispEdges"/><polygon points="1575.1,468.2 1598.5,442.2 1532.5,441.6" fill="url(#m0_21)" style="mix-blend-mode:plus-lighter" shape-rendering="crispEdges"/><polygon points="1575.1,468.2 1598.5,442.2 1532.5,441.6" fill="url(#m0_22)" style="mix-blend-mode:plus-lighter" shape-rendering="crispEdges"/><polygon points="1532.5,441.6 1598.5,442.2 1555.9,415.6" fill="#f00" fill-opacity="1.000" style="mix-blend-mode:plus-lighter" shape-rendering="crispEdges"/><polygon points="1532.5,441.6 1598.5,442.2 1555.9,415.6" fill="url(#m0_23)" style="mix-blend-mode:plus-lighter" shape-rendering="crispEdges"/><polygon points="1532.5,441.6 1598.5,442.2 1555.9,415.6" fill="url(#m0_24)" style="mix-blend-mode:plus-lighter" shape-rendering="crispEdges"/><polygon points="1598.5,442.2 1622.0,416.2 1555.9,415.6" fill="#f00" fill-opacity="1.000" style="mix-blend-mode:plus-lighter" shape-rendering="crispEdges"/><polygon points="1598.5,442.2 1622.0,416.2 1555.9,415.6" fill="url(#m0_25)" style="mix-blend-mode:plus-lighter" shape-rendering="crispEdges"/><polygon points="1598.5,442.2 1622.0,416.2 1555.9,415.6" fill="url(#m0_26)" style="mix-blend-mode:plus-lighter" shape-rendering="crispEdges"/><polygon points="1555.9,415.6 1622.0,416.2 1579.4,389.7" fill="#f00" fill-opacity="1.000" style="mix-blend-mode:plus-lighter" shape-rendering="crispEdges"/><polygon points="1555.9,415.6 1622.0,416.2 1579.4,389.7" fill="url(#m0_27)" style="mix-blend-mode:plus-lighter" shape-rendering="crispEdges"/><polygon points="1555.9,415.6 1622.0,416.2 1579.4,389.7" fill="url(#m0_28)" style="mix-blend-mode:plus-lighter" shape-rendering="crispEdges"/><polygon points="1622.0,416.2 1645.4,390.3 1579.4,389.7" fill="#f00" fill-opacity="1.000" style="mix-blend-mode:plus-lighter" shape-rendering="crispEdges"/><polygon points="1622.0,416.2 1645.4,390.3 1579.4,389.7" fill="url(#m0_29)" style="mix-blend-mode:plus-lighter" shape-rendering="crispEdges"/><polygon points="1622.0,416.2 1645.4,390.3 1579.4,389.7" fill="url(#m0_30)" style="mix-blend-mode:plus-lighter" shape-rendering="crispEdges"/><polygon points="1579.4,389.7 1645.4,390.3 1602.8,363.7" fill="#f00" fill-opacity="1.000" style="mix-blend-mode:plus-lighter" shape-rendering="crispEdges"/><polygon points="1579.4,389.7 1645.4,390.3 1602.8,363.7" fill="url(#m0_31)" style="mix-blend-mode:plus-lighter" shape-rendering="crispEdges"/><polygon points="1579.4,389.7 1645.4,390.3 1602.8,363.7" fill="url(#m0_32)" style="mix-blend-mode:plus-lighter" shape-rendering="crispEdges"/><polygon points="1575.1,468.2 1641.1,468.8 1598.5,442.2" fill="#f00" fill-opacity="1.000" style="mix-blend-mode:plus-lighter" shape-rendering="crispEdges"/><polygon points="1575.1,468.2 1641.1,468.8 1598.5,442.2" fill="url(#m0_33)" style="mix-blend-mode:plus-lighter" shape-rendering="crispEdges"/><polygon points="1575.1,468.2 1641.1,468.8 1598.5,442.2" fill="url(#m0_34)" style="mix-blend-mode:plus-lighter" shape-rendering="crispEdges"/><polygon points="1641.1,468.8 1664.6,442.8 1598.5,442.2" fill="#f00" fill-opacity="1.000" style="mix-blend-mode:plus-lighter" shape-rendering="crispEdges"/><polygon points="1641.1,468.8 1664.6,442.8 1598.5,442.2" fill="url(#m0_35)" style="mix-blend-mode:plus-lighter" shape-rendering="crispEdges"/><polygon points="1641.1,468.8 1664.6,442.8 1598.5,442.2" fill="url(#m0_36)" style="mix-blend-mode:plus-lighter" shape-rendering="crispEdges"/><polygon points="1598.5,442.2 1664.6,442.8 1622.0,416.2" fill="#f00" fill-opacity="1.000" style="mix-blend-mode:plus-lighter" shape-rendering="crispEdges"/><polygon points="1598.5,442.2 1664.6,442.8 1622.0,416.2" fill="url(#m0_37)" style="mix-blend-mode:plus-lighter" shape-rendering="crispEdges"/><polygon points="1598.5,442.2 1664.6,442.8 1622.0,416.2" fill="url(#m0_38)" style="mix-blend-mode:plus-lighter" shape-rendering="crispEdges"/><polygon points="1664.6,442.8 1688.0,416.8 1622.0,416.2" fill="#f00" fill-opacity="1.000" style="mix-blend-mode:plus-lighter" shape-rendering="crispEdges"/><polygon points="1664.6,442.8 1688.0,416.8 1622.0,416.2" fill="url(#m0_39)" style="mix-blend-mode:plus-lighter" shape-rendering="crispEdges"/><polygon points="1664.6,442.8 1688.0,416.8 1622.0,416.2" fill="url(#m0_40)" style="mix-blend-mode:plus-lighter" shape-rendering="crispEdges"/><polygon points="1622.0,416.2 1688.0,416.8 1645.4,390.3" fill="#f00" fill-opacity="1.000" style="mix-blend-mode:plus-lighter" shape-rendering="crispEdges"/><polygon points="1622.0,416.2 1688.0,416.8 1645.4,390.3" fill="url(#m0_41)" style="mix-blend-mode:plus-lighter" shape-rendering="crispEdges"/><polygon points="1622.0,416.2 1688.0,416.8 1645.4,390.3" fill="url(#m0_42)" style="mix-blend-mode:plus-lighter" shape-rendering="crispEdges"/><polygon points="1641.1,468.8 1707.2,469.4 1664.6,442.8" fill="#f00" fill-opacity="1.000" style="mix-blend-mode:plus-lighter" shape-rendering="crispEdges"/><polygon points="1641.1,468.8 1707.2,469.4 1664.6,442.8" fill="url(#m0_43)" style="mix-blend-mode:plus-lighter" shape-rendering="crispEdges"/><polygon points="1641.1,468.8 1707.2,469.4 1664.6,442.8" fill="url(#m0_44)" style="mix-blend-mode:plus-lighter" shape-rendering="crispEdges"/><polygon points="1707.2,469.4 1730.6,443.4 1664.6,442.8" fill="#f00" fill-opacity="1.000" style="mix-blend-mode:plus-lighter" shape-rendering="crispEdges"/><polygon points="1707.2,469.4 1730.6,443.4 1664.6,442.8" fill="url(#m0_45)" style="mix-blend-mode:plus-lighter" shape-rendering="crispEdges"/><polygon points="1707.2,469.4 1730.6,443.4 1664.6,442.8" fill="url(#m0_46)" style="mix-blend-mode:plus-lighter" shape-rendering="crispEdges"/><polygon points="1664.6,442.8 1730.6,443.4 1688.0,416.8" fill="#f00" fill-opacity="1.000" style="mix-blend-mode:plus-lighter" shape-rendering="crispEdges"/><polygon points="1664.6,442.8 1730.6,443.4 1688.0,416.8" fill="url(#m0_47)" style="mix-blend-mode:plus-lighter" shape-rendering="crispEdges"/><polygon points="1664.6,442.8 1730.6,443.4 1688.0,416.8" fill="url(#m0_48)" style="mix-blend-mode:plus-lighter" shape-rendering="crispEdges"/><polygon points="1707.2,469.4 1773.2,469.9 1730.6,443.4" fill="#f00" fill-opacity="1.000" style="mix-blend-mode:plus-lighter" shape-rendering="crispEdges"/><polygon points="1707.2,469.4 1773.2,469.9 1730.6,443.4" fill="url(#m0_49)" style="mix-blend-mode:plus-lighter" shape-rendering="crispEdges"/><polygon points="1707.2,469.4 1773.2,469.9 1730.6,443.4" fill="url(#m0_50)" style="mix-blend-mode:plus-lighter" shape-rendering="crispEdges"/><polygon points="1443.0,467.0 1466.4,441.0 1433.5,420.5" fill="url(#m1_1)" style="mix-blend-mode:plus-lighter" shape-rendering="crispEdges"/><polygon points="1443.0,467.0 1466.4,441.0 1433.5,420.5" fill="#0f0" fill-opacity="1.000" style="mix-blend-mode:plus-lighter" shape-rendering="crispEdges"/><polygon points="1443.0,467.0 1466.4,441.0 1433.5,420.5" fill="url(#m1_2)" style="mix-blend-mode:plus-lighter" shape-rendering="crispEdges"/><polygon points="1466.4,441.0 1457.0,394.5 1433.5,420.5" fill="url(#m1_3)" style="mix-blend-mode:plus-lighter" shape-rendering="crispEdges"/><polygon points="1466.4,441.0 1457.0,394.5 1433.5,420.5" fill="#0f0" fill-opacity="1.000" style="mix-blend-mode:plus-lighter" shape-rendering="crispEdges"/><polygon points="1466.4,441.0 1457.0,394.5 1433.5,420.5" fill="url(#m1_4)" style="mix-blend-mode:plus-lighter" shape-rendering="crispEdges"/><polygon points="1433.5,420.5 1457.0,394.5 1424.1,374.0" fill="url(#m1_5)" style="mix-blend-mode:plus-lighter" shape-rendering="crispEdges"/><polygon points="1433.5,420.5 1457.0,394.5 1424.1,374.0" fill="#0f0" fill-opacity="1.000" style="mix-blend-mode:plus-lighter" shape-rendering="crispEdges"/><polygon points="1433.5,420.5 1457.0,394.5 1424.1,374.0" fill="url(#m1_6)" style="mix-blend-mode:plus-lighter" shape-rendering="crispEdges"/><polygon points="1457.0,394.5 1447.5,348.0 1424.1,374.0" fill="url(#m1_7)" style="mix-blend-mode:plus-lighter" shape-rendering="crispEdges"/><polygon points="1457.0,394.5 1447.5,348.0 1424.1,374.0" fill="#0f0" fill-opacity="1.000" style="mix-blend-mode:plus-lighter" shape-rendering="crispEdges"/><polygon points="1457.0,394.5 1447.5,348.0 1424.1,374.0" fill="url(#m1_8)" style="mix-blend-mode:plus-lighter" shape-rendering="crispEdges"/><polygon points="1424.1,374.0 1447.5,348.0 1414.6,327.5" fill="url(#m1_9)" style="mix-blend-mode:plus-lighter" shape-rendering="crispEdges"/><polygon points="1424.1,374.0 1447.5,348.0 1414.6,327.5" fill="#0f0" fill-opacity="1.000" style="mix-blend-mode:plus-lighter" shape-rendering="crispEdges"/><polygon points="1424.1,374.0 1447.5,348.0 1414.6,327.5" fill="url(#m1_10)" style="mix-blend-mode:plus-lighter" shape-rendering="crispEdges"/><polygon points="1447.5,348.0 1438.0,301.6 1414.6,327.5" fill="url(#m1_11)" style="mix-blend-mode:plus-lighter" shape-rendering="crispEdges"/><polygon points="1447.5,348.0 1438.0,301.6 1414.6,327.5" fill="#0f0" fill-opacity="1.000" style="mix-blend-mode:plus-lighter" shape-rendering="crispEdges"/><polygon points="1447.5,348.0 1438.0,301.6 1414.6,327.5" fill="url(#m1_12)" style="mix-blend-mode:plus-lighter" shape-rendering="crispEdges"/><polygon points="1414.6,327.5 1438.0,301.6 1405.1,281.0" fill="url(#m1_13)" style="mix-blend-mode:plus-lighter" shape-rendering="crispEdges"/><polygon points="1414.6,327.5 1438.0,301.6 1405.1,281.0" fill="#0f0" fill-opacity="1.000" style="mix-blend-mode:plus-lighter" shape-rendering="crispEdges"/><polygon points="1414.6,327.5 1438.0,301.6 1405.1,281.0" fill="url(#m1_14)" style="mix-blend-mode:plus-lighter" shape-rendering="crispEdges"/><polygon points="1438.0,301.6 1428.6,255.1 1405.1,281.0" fill="url(#m1_15)" style="mix-blend-mode:plus-lighter" shape-rendering="crispEdges"/><polygon points="1438.0,301.6 1428.6,255.1 1405.1,281.0" fill="#0f0" fill-opacity="1.000" style="mix-blend-mode:plus-lighter" shape-rendering="crispEdges"/><polygon points="1438.0,301.6 1428.6,255.1 1405.1,281.0" fill="url(#m1_16)" style="mix-blend-mode:plus-lighter" shape-rendering="crispEdges"/><polygon points="1405.1,281.0 1428.6,255.1 1395.7,234.5" fill="url(#m1_17)" style="mix-blend-mode:plus-lighter" shape-rendering="crispEdges"/><polygon points="1405.1,281.0 1428.6,255.1 1395.7,234.5" fill="#0f0" fill-opacity="1.000" style="mix-blend-mode:plus-lighter" shape-rendering="crispEdges"/><polygon points="1405.1,281.0 1428.6,255.1 1395.7,234.5" fill="url(#m1_18)" style="mix-blend-mode:plus-lighter" shape-rendering="crispEdges"/><polygon points="1466.4,441.0 1489.9,415.1 1457.0,394.5" fill="url(#m1_19)" style="mix-blend-mode:plus-lighter" shape-rendering="crispEdges"/><polygon points="1466.4,441.0 1489.9,415.1 1457.0,394.5" fill="#0f0" fill-opacity="1.000" style="mix-blend-mode:plus-lighter" shape-rendering="crispEdges"/><polygon points="1466.4,441.0 1489.9,415.1 1457.0,394.5" fill="url(#m1_20)" style="mix-blend-mode:plus-lighter" shape-rendering="crispEdges"/><polygon points="1489.9,415.1 1480.4,368.6 1457.0,394.5" fill="url(#m1_21)" style="mix-blend-mode:plus-lighter" shape-rendering="crispEdges"/><polygon points="1489.9,415.1 1480.4,368.6 1457.0,394.5" fill="#0f0" fill-opacity="1.000" style="mix-blend-mode:plus-lighter" shape-rendering="crispEdges"/><polygon points="1489.9,415.1 1480.4,368.6 1457.0,394.5" fill="url(#m1_22)" style="mix-blend-mode:plus-lighter" shape-rendering="crispEdges"/><polygon points="1457.0,394.5 1480.4,368.6 1447.5,348.0" fill="url(#m1_23)" style="mix-blend-mode:plus-lighter" shape-rendering="crispEdges"/><polygon points="1457.0,394.5 1480.4,368.6 1447.5,348.0" fill="#0f0" fill-opacity="1.000" style="mix-blend-mode:plus-lighter" shape-rendering="crispEdges"/><polygon points="1457.0,394.5 1480.4,368.6 1447.5,348.0" fill="url(#m1_24)" style="mix-blend-mode:plus-lighter" shape-rendering="crispEdges"/><polygon points="1480.4,368.6 1470.9,322.1 1447.5,348.0" fill="url(#m1_25)" style="mix-blend-mode:plus-lighter" shape-rendering="crispEdges"/><polygon points="1480.4,368.6 1470.9,322.1 1447.5,348.0" fill="#0f0" fill-opacity="1.000" style="mix-blend-mode:plus-lighter" shape-rendering="crispEdges"/><polygon points="1480.4,368.6 1470.9,322.1 1447.5,348.0" fill="url(#m1_26)" style="mix-blend-mode:plus-lighter" shape-rendering="crispEdges"/><polygon points="1447.5,348.0 1470.9,322.1 1438.0,301.6" fill="url(#m1_27)" style="mix-blend-mode:plus-lighter" shape-rendering="crispEdges"/><polygon points="1447.5,348.0 1470.9,322.1 1438.0,301.6" fill="#0f0" fill-opacity="1.000" style="mix-blend-mode:plus-lighter" shape-rendering="crispEdges"/><polygon points="1447.5,348.0 1470.9,322.1 1438.0,301.6" fill="url(#m1_28)" style="mix-blend-mode:plus-lighter" shape-rendering="crispEdges"/><polygon points="1470.9,322.1 1461.5,275.6 1438.0,301.6" fill="url(#m1_29)" style="mix-blend-mode:plus-lighter" shape-rendering="crispEdges"/><polygon points="1470.9,322.1 1461.5,275.6 1438.0,301.6" fill="#0f0" fill-opacity="1.000" style="mix-blend-mode:plus-lighter" shape-rendering="crispEdges"/><polygon points="1470.9,322.1 1461.5,275.6 1438.0,301.6" fill="url(#m1_30)" style="mix-blend-mode:plus-lighter" shape-rendering="crispEdges"/><polygon points="1438.0,301.6 1461.5,275.6 1428.6,255.1" fill="url(#m1_31)" style="mix-blend-mode:plus-lighter" shape-rendering="crispEdges"/><polygon points="1438.0,301.6 1461.5,275.6 1428.6,255.1" fill="#0f0" fill-opacity="1.000" style="mix-blend-mode:plus-lighter" shape-rendering="crispEdges"/><polygon points="1438.0,301.6 1461.5,275.6 1428.6,255.1" fill="url(#m1_32)" style="mix-blend-mode:plus-lighter" shape-rendering="crispEdges"/><polygon points="1489.9,415.1 1513.3,389.1 1480.4,368.6" fill="url(#m1_33)" style="mix-blend-mode:plus-lighter" shape-rendering="crispEdges"/><polygon points="1489.9,415.1 1513.3,389.1 1480.4,368.6" fill="#0f0" fill-opacity="1.000" style="mix-blend-mode:plus-lighter" shape-rendering="crispEdges"/><polygon points="1489.9,415.1 1513.3,389.1 1480.4,368.6" fill="url(#m1_34)" style="mix-blend-mode:plus-lighter" shape-rendering="crispEdges"/><polygon points="1513.3,389.1 1503.9,342.6 1480.4,368.6" fill="url(#m1_35)" style="mix-blend-mode:plus-lighter" shape-rendering="crispEdges"/><polygon points="1513.3,389.1 1503.9,342.6 1480.4,368.6" fill="#0f0" fill-opacity="1.000" style="mix-blend-mode:plus-lighter" shape-rendering="crispEdges"/><polygon points="1513.3,389.1 1503.9,342.6 1480.4,368.6" fill="url(#m1_36)" style="mix-blend-mode:plus-lighter" shape-rendering="crispEdges"/><polygon points="1480.4,368.6 1503.9,342.6 1470.9,322.1" fill="url(#m1_37)" style="mix-blend-mode:plus-lighter" shape-rendering="crispEdges"/><polygon points="1480.4,368.6 1503.9,342.6 1470.9,322.1" fill="#0f0" fill-opacity="1.000" style="mix-blend-mode:plus-lighter" shape-rendering="crispEdges"/><polygon points="1480.4,368.6 1503.9,342.6 1470.9,322.1" fill="url(#m1_38)" style="mix-blend-mode:plus-lighter" shape-rendering="crispEdges"/><polygon points="1503.9,342.6 1494.4,296.1 1470.9,322.1" fill="url(#m1_39)" style="mix-blend-mode:plus-lighter" shape-rendering="crispEdges"/><polygon points="1503.9,342.6 1494.4,296.1 1470.9,322.1" fill="#0f0" fill-opacity="1.000" style="mix-blend-mode:plus-lighter" shape-rendering="crispEdges"/><polygon points="1503.9,342.6 1494.4,296.1 1470.9,322.1" fill="url(#m1_40)" style="mix-blend-mode:plus-lighter" shape-rendering="crispEdges"/><polygon points="1470.9,322.1 1494.4,296.1 1461.5,275.6" fill="url(#m1_41)" style="mix-blend-mode:plus-lighter" shape-rendering="crispEdges"/><polygon points="1470.9,322.1 1494.4,296.1 1461.5,275.6" fill="#0f0" fill-opacity="1.000" style="mix-blend-mode:plus-lighter" shape-rendering="crispEdges"/><polygon points="1470.9,322.1 1494.4,296.1 1461.5,275.6" fill="url(#m1_42)" style="mix-blend-mode:plus-lighter" shape-rendering="crispEdges"/><polygon points="1513.3,389.1 1536.8,363.1 1503.9,342.6" fill="url(#m1_43)" style="mix-blend-mode:plus-lighter" shape-rendering="crispEdges"/><polygon points="1513.3,389.1 1536.8,363.1 1503.9,342.6" fill="#0f0" fill-opacity="1.000" style="mix-blend-mode:plus-lighter" shape-rendering="crispEdges"/><polygon points="1513.3,389.1 1536.8,363.1 1503.9,342.6" fill="url(#m1_44)" style="mix-blend-mode:plus-lighter" shape-rendering="crispEdges"/><polygon points="1536.8,363.1 1527.3,316.6 1503.9,342.6" fill="url(#m1_45)" style="mix-blend-mode:plus-lighter" shape-rendering="crispEdges"/><polygon points="1536.8,363.1 1527.3,316.6 1503.9,342.6" fill="#0f0" fill-opacity="1.000" style="mix-blend-mode:plus-lighter" shape-rendering="crispEdges"/><polygon points="1536.8,363.1 1527.3,316.6 1503.9,342.6" fill="url(#m1_46)" style="mix-blend-mode:plus-lighter" shape-rendering="crispEdges"/><polygon points="1503.9,342.6 1527.3,316.6 1494.4,296.1" fill="url(#m1_47)" style="mix-blend-mode:plus-lighter" shape-rendering="crispEdges"/><polygon points="1503.9,342.6 1527.3,316.6 1494.4,296.1" fill="#0f0" fill-opacity="1.000" style="mix-blend-mode:plus-lighter" shape-rendering="crispEdges"/><polygon points="1503.9,342.6 1527.3,316.6 1494.4,296.1" fill="url(#m1_48)" style="mix-blend-mode:plus-lighter" shape-rendering="crispEdges"/><polygon points="1536.8,363.1 1560.2,337.1 1527.3,316.6" fill="url(#m1_49)" style="mix-blend-mode:plus-lighter" shape-rendering="crispEdges"/><polygon points="1536.8,363.1 1560.2,337.1 1527.3,316.6" fill="#0f0" fill-opacity="1.000" style="mix-blend-mode:plus-lighter" shape-rendering="crispEdges"/><polygon points="1536.8,363.1 1560.2,337.1 1527.3,316.6" fill="url(#m1_50)" style="mix-blend-mode:plus-lighter" shape-rendering="crispEdges"/><polygon points="1443.0,467.0 1433.5,420.5 1421.4,466.8" fill="url(#m2_1)" style="mix-blend-mode:plus-lighter" shape-rendering="crispEdges"/><polygon points="1443.0,467.0 1433.5,420.5 1421.4,466.8" fill="#0f0" fill-opacity="1.000" style="mix-blend-mode:plus-lighter" shape-rendering="crispEdges"/><polygon points="1443.0,467.0 1433.5,420.5 1421.4,466.8" fill="url(#m2_2)" style="mix-blend-mode:plus-lighter" shape-rendering="crispEdges"/><polygon points="1433.5,420.5 1412.0,420.3 1421.4,466.8" fill="url(#m2_3)" style="mix-blend-mode:plus-lighter" shape-rendering="crispEdges"/><polygon points="1433.5,420.5 1412.0,420.3 1421.4,466.8" fill="#0f0" fill-opacity="1.000" style="mix-blend-mode:plus-lighter" shape-rendering="crispEdges"/><polygon points="1433.5,420.5 1412.0,420.3 1421.4,466.8" fill="url(#m2_4)" style="mix-blend-mode:plus-lighter" shape-rendering="crispEdges"/><polygon points="1421.4,466.8 1412.0,420.3 1399.9,466.6" fill="url(#m2_5)" style="mix-blend-mode:plus-lighter" shape-rendering="crispEdges"/><polygon points="1421.4,466.8 1412.0,420.3 1399.9,466.6" fill="#0f0" fill-opacity="1.000" style="mix-blend-mode:plus-lighter" shape-rendering="crispEdges"/><polygon points="1421.4,466.8 1412.0,420.3 1399.9,466.6" fill="url(#m2_6)" style="mix-blend-mode:plus-lighter" shape-rendering="crispEdges"/><polygon points="1412.0,420.3 1390.4,420.1 1399.9,466.6" fill="url(#m2_7)" style="mix-blend-mode:plus-lighter" shape-rendering="crispEdges"/><polygon points="1412.0,420.3 1390.4,420.1 1399.9,466.6" fill="#0f0" fill-opacity="1.000" style="mix-blend-mode:plus-lighter" shape-rendering="crispEdges"/><polygon points="1412.0,420.3 1390.4,420.1 1399.9,466.6" fill="url(#m2_8)" style="mix-blend-mode:plus-lighter" shape-rendering="crispEdges"/><polygon points="1399.9,466.6 1390.4,420.1 1378.3,466.4" fill="url(#m2_9)" style="mix-blend-mode:plus-lighter" shape-rendering="crispEdges"/><polygon points="1399.9,466.6 1390.4,420.1 1378.3,466.4" fill="#0f0" fill-opacity="1.000" style="mix-blend-mode:plus-lighter" shape-rendering="crispEdges"/><polygon points="1399.9,466.6 1390.4,420.1 1378.3,466.4" fill="url(#m2_10)" style="mix-blend-mode:plus-lighter" shape-rendering="crispEdges"/><polygon points="1390.4,420.1 1368.9,419.9 1378.3,466.4" fill="url(#m2_11)" style="mix-blend-mode:plus-lighter" shape-rendering="crispEdges"/><polygon points="1390.4,420.1 1368.9,419.9 1378.3,466.4" fill="#0f0" fill-opacity="1.000" style="mix-blend-mode:plus-lighter" shape-rendering="crispEdges"/><polygon points="1390.4,420.1 1368.9,419.9 1378.3,466.4" fill="url(#m2_12)" style="mix-blend-mode:plus-lighter" shape-rendering="crispEdges"/><polygon points="1378.3,466.4 1368.9,419.9 1356.8,466.2" fill="url(#m2_13)" style="mix-blend-mode:plus-lighter" shape-rendering="crispEdges"/><polygon points="1378.3,466.4 1368.9,419.9 1356.8,466.2" fill="#0f0" fill-opacity="1.000" style="mix-blend-mode:plus-lighter" shape-rendering="crispEdges"/><polygon points="1378.3,466.4 1368.9,419.9 1356.8,466.2" fill="url(#m2_14)" style="mix-blend-mode:plus-lighter" shape-rendering="crispEdges"/><polygon points="1368.9,419.9 1347.3,419.7 1356.8,466.2" fill="url(#m2_15)" style="mix-blend-mode:plus-lighter" shape-rendering="crispEdges"/><polygon points="1368.9,419.9 1347.3,419.7 1356.8,466.2" fill="#0f0" fill-opacity="1.000" style="mix-blend-mode:plus-lighter" shape-rendering="crispEdges"/><polygon points="1368.9,419.9 1347.3,419.7 1356.8,466.2" fill="url(#m2_16)" style="mix-blend-mode:plus-lighter" shape-rendering="crispEdges"/><polygon points="1356.8,466.2 1347.3,419.7 1335.2,466.0" fill="url(#m2_17)" style="mix-blend-mode:plus-lighter" shape-rendering="crispEdges"/><polygon points="1356.8,466.2 1347.3,419.7 1335.2,466.0" fill="#0f0" fill-opacity="1.000" style="mix-blend-mode:plus-lighter" shape-rendering="crispEdges"/><polygon points="1356.8,466.2 1347.3,419.7 1335.2,466.0" fill="url(#m2_18)" style="mix-blend-mode:plus-lighter" shape-rendering="crispEdges"/><polygon points="1433.5,420.5 1424.1,374.0 1412.0,420.3" fill="url(#m2_19)" style="mix-blend-mode:plus-lighter" shape-rendering="crispEdges"/><polygon points="1433.5,420.5 1424.1,374.0 1412.0,420.3" fill="#0f0" fill-opacity="1.000" style="mix-blend-mode:plus-lighter" shape-rendering="crispEdges"/><polygon points="1433.5,420.5 1424.1,374.0 1412.0,420.3" fill="url(#m2_20)" style="mix-blend-mode:plus-lighter" shape-rendering="crispEdges"/><polygon points="1424.1,374.0 1402.5,373.8 1412.0,420.3" fill="url(#m2_21)" style="mix-blend-mode:plus-lighter" shape-rendering="crispEdges"/><polygon points="1424.1,374.0 1402.5,373.8 1412.0,420.3" fill="#0f0" fill-opacity="1.000" style="mix-blend-mode:plus-lighter" shape-rendering="crispEdges"/><polygon points="1424.1,374.0 1402.5,373.8 1412.0,420.3" fill="url(#m2_22)" style="mix-blend-mode:plus-lighter" shape-rendering="crispEdges"/><polygon points="1412.0,420.3 1402.5,373.8 1390.4,420.1" fill="url(#m2_23)" style="mix-blend-mode:plus-lighter" shape-rendering="crispEdges"/><polygon points="1412.0,420.3 1402.5,373.8 1390.4,420.1" fill="#0f0" fill-opacity="1.000" style="mix-blend-mode:plus-lighter" shape-rendering="crispEdges"/><polygon points="1412.0,420.3 1402.5,373.8 1390.4,420.1" fill="url(#m2_24)" style="mix-blend-mode:plus-lighter" shape-rendering="crispEdges"/><polygon points="1402.5,373.8 1381.0,373.6 1390.4,420.1" fill="url(#m2_25)" style="mix-blend-mode:plus-lighter" shape-rendering="crispEdges"/><polygon points="1402.5,373.8 1381.0,373.6 1390.4,420.1" fill="#0f0" fill-opacity="1.000" style="mix-blend-mode:plus-lighter" shape-rendering="crispEdges"/><polygon points="1402.5,373.8 1381.0,373.6 1390.4,420.1" fill="url(#m2_26)" style="mix-blend-mode:plus-lighter" shape-rendering="crispEdges"/><polygon points="1390.4,420.1 1381.0,373.6 1368.9,419.9" fill="url(#m2_27)" style="mix-blend-mode:plus-lighter" shape-rendering="crispEdges"/><polygon points="1390.4,420.1 1381.0,373.6 1368.9,419.9" fill="#0f0" fill-opacity="1.000" style="mix-blend-mode:plus-lighter" shape-rendering="crispEdges"/><polygon points="1390.4,420.1 1381.0,373.6 1368.9,419.9" fill="url(#m2_28)" style="mix-blend-mode:plus-lighter" shape-rendering="crispEdges"/><polygon points="1381.0,373.6 1359.4,373.4 1368.9,419.9" fill="url(#m2_29)" style="mix-blend-mode:plus-lighter" shape-rendering="crispEdges"/><polygon points="1381.0,373.6 1359.4,373.4 1368.9,419.9" fill="#0f0" fill-opacity="1.000" style="mix-blend-mode:plus-lighter" shape-rendering="crispEdges"/><polygon points="1381.0,373.6 1359.4,373.4 1368.9,419.9" fill="url(#m2_30)" style="mix-blend-mode:plus-lighter" shape-rendering="crispEdges"/><polygon points="1368.9,419.9 1359.4,373.4 1347.3,419.7" fill="url(#m2_31)" style="mix-blend-mode:plus-lighter" shape-rendering="crispEdges"/><polygon points="1368.9,419.9 1359.4,373.4 1347.3,419.7" fill="#0f0" fill-opacity="1.000" style="mix-blend-mode:plus-lighter" shape-rendering="crispEdges"/><polygon points="1368.9,419.9 1359.4,373.4 1347.3,419.7" fill="url(#m2_32)" style="mix-blend-mode:plus-lighter" shape-rendering="crispEdges"/><polygon points="1424.1,374.0 1414.6,327.5 1402.5,373.8" fill="url(#m2_33)" style="mix-blend-mode:plus-lighter" shape-rendering="crispEdges"/><polygon points="1424.1,374.0 1414.6,327.5 1402.5,373.8" fill="#0f0" fill-opacity="1.000" style="mix-blend-mode:plus-lighter" shape-rendering="crispEdges"/><polygon points="1424.1,374.0 1414.6,327.5 1402.5,373.8" fill="url(#m2_34)" style="mix-blend-mode:plus-lighter" shape-rendering="crispEdges"/><polygon points="1414.6,327.5 1393.0,327.3 1402.5,373.8" fill="url(#m2_35)" style="mix-blend-mode:plus-lighter" shape-rendering="crispEdges"/><polygon points="1414.6,327.5 1393.0,327.3 1402.5,373.8" fill="#0f0" fill-opacity="1.000" style="mix-blend-mode:plus-lighter" shape-rendering="crispEdges"/><polygon points="1414.6,327.5 1393.0,327.3 1402.5,373.8" fill="url(#m2_36)" style="mix-blend-mode:plus-lighter" shape-rendering="crispEdges"/><polygon points="1402.5,373.8 1393.0,327.3 1381.0,373.6" fill="url(#m2_37)" style="mix-blend-mode:plus-lighter" shape-rendering="crispEdges"/><polygon points="1402.5,373.8 1393.0,327.3 1381.0,373.6" fill="#0f0" fill-opacity="1.000" style="mix-blend-mode:plus-lighter" shape-rendering="crispEdges"/><polygon points="1402.5,373.8 1393.0,327.3 1381.0,373.6" fill="url(#m2_38)" style="mix-blend-mode:plus-lighter" shape-rendering="crispEdges"/><polygon points="1393.0,327.3 1371.5,327.1 1381.0,373.6" fill="url(#m2_39)" style="mix-blend-mode:plus-lighter" shape-rendering="crispEdges"/><polygon points="1393.0,327.3 1371.5,327.1 1381.0,373.6" fill="#0f0" fill-opacity="1.000" style="mix-blend-mode:plus-lighter" shape-rendering="crispEdges"/><polygon points="1393.0,327.3 1371.5,327.1 1381.0,373.6" fill="url(#m2_40)" style="mix-blend-mode:plus-lighter" shape-rendering="crispEdges"/><polygon points="1381.0,373.6 1371.5,327.1 1359.4,373.4" fill="url(#m2_41)" style="mix-blend-mode:plus-lighter" shape-rendering="crispEdges"/><polygon points="1381.0,373.6 1371.5,327.1 1359.4,373.4" fill="#0f0" fill-opacity="1.000" style="mix-blend-mode:plus-lighter" shape-rendering="crispEdges"/><polygon points="1381.0,373.6 1371.5,327.1 1359.4,373.4" fill="url(#m2_42)" style="mix-blend-mode:plus-lighter" shape-rendering="crispEdges"/><polygon points="1414.6,327.5 1405.1,281.0 1393.0,327.3" fill="url(#m2_43)" style="mix-blend-mode:plus-lighter" shape-rendering="crispEdges"/><polygon points="1414.6,327.5 1405.1,281.0 1393.0,327.3" fill="#0f0" fill-opacity="1.000" style="mix-blend-mode:plus-lighter" shape-rendering="crispEdges"/><polygon points="1414.6,327.5 1405.1,281.0 1393.0,327.3" fill="url(#m2_44)" style="mix-blend-mode:plus-lighter" shape-rendering="crispEdges"/><polygon points="1405.1,281.0 1383.6,280.8 1393.0,327.3" fill="url(#m2_45)" style="mix-blend-mode:plus-lighter" shape-rendering="crispEdges"/><polygon points="1405.1,281.0 1383.6,280.8 1393.0,327.3" fill="#0f0" fill-opacity="1.000" style="mix-blend-mode:plus-lighter" shape-rendering="crispEdges"/><polygon points="1405.1,281.0 1383.6,280.8 1393.0,327.3" fill="url(#m2_46)" style="mix-blend-mode:plus-lighter" shape-rendering="crispEdges"/><polygon points="1393.0,327.3 1383.6,280.8 1371.5,327.1" fill="url(#m2_47)" style="mix-blend-mode:plus-lighter" shape-rendering="crispEdges"/><polygon points="1393.0,327.3 1383.6,280.8 1371.5,327.1" fill="#0f0" fill-opacity="1.000" style="mix-blend-mode:plus-lighter" shape-rendering="crispEdges"/><polygon points="1393.0,327.3 1383.6,280.8 1371.5,327.1" fill="url(#m2_48)" style="mix-blend-mode:plus-lighter" shape-rendering="crispEdges"/><polygon points="1405.1,281.0 1395.7,234.5 1383.6,280.8" fill="url(#m2_49)" style="mix-blend-mode:plus-lighter" shape-rendering="crispEdges"/><polygon points="1405.1,281.0 1395.7,234.5 1383.6,280.8" fill="#0f0" fill-opacity="1.000" style="mix-blend-mode:plus-lighter" shape-rendering="crispEdges"/><polygon points="1405.1,281.0 1395.7,234.5 1383.6,280.8" fill="url(#m2_50)" style="mix-blend-mode:plus-lighter" shape-rendering="crispEdges"/><polygon points="1443.0,467.0 1421.4,466.8 1412.6,500.7" fill="url(#m3_1)" style="mix-blend-mode:plus-lighter" shape-rendering="crispEdges"/><polygon points="1443.0,467.0 1421.4,466.8 1412.6,500.7" fill="url(#m3_2)" style="mix-blend-mode:plus-lighter" shape-rendering="crispEdges"/><polygon points="1443.0,467.0 1421.4,466.8 1412.6,500.7" fill="#00f" fill-opacity="1.000" style="mix-blend-mode:plus-lighter" shape-rendering="crispEdges"/><polygon points="1421.4,466.8 1391.1,500.5 1412.6,500.7" fill="url(#m3_3)" style="mix-blend-mode:plus-lighter" shape-rendering="crispEdges"/><polygon points="1421.4,466.8 1391.1,500.5 1412.6,500.7" fill="url(#m3_4)" style="mix-blend-mode:plus-lighter" shape-rendering="crispEdges"/><polygon points="1421.4,466.8 1391.1,500.5 1412.6,500.7" fill="#00f" fill-opacity="1.000" style="mix-blend-mode:plus-lighter" shape-rendering="crispEdges"/><polygon points="1412.6,500.7 1391.1,500.5 1382.2,534.3" fill="url(#m3_5)" style="mix-blend-mode:plus-lighter" shape-rendering="crispEdges"/><polygon points="1412.6,500.7 1391.1,500.5 1382.2,534.3" fill="url(#m3_6)" style="mix-blend-mode:plus-lighter" shape-rendering="crispEdges"/><polygon points="1412.6,500.7 1391.1,500.5 1382.2,534.3" fill="#00f" fill-opacity="1.000" style="mix-blend-mode:plus-lighter" shape-rendering="crispEdges"/><polygon points="1391.1,500.5 1360.7,534.2 1382.2,534.3" fill="url(#m3_7)" style="mix-blend-mode:plus-lighter" shape-rendering="crispEdges"/><polygon points="1391.1,500.5 1360.7,534.2 1382.2,534.3" fill="url(#m3_8)" style="mix-blend-mode:plus-lighter" shape-rendering="crispEdges"/><polygon points="1391.1,500.5 1360.7,534.2 1382.2,534.3" fill="#00f" fill-opacity="1.000" style="mix-blend-mode:plus-lighter" shape-rendering="crispEdges"/><polygon points="1382.2,534.3 1360.7,534.2 1351.8,568.0" fill="url(#m3_9)" style="mix-blend-mode:plus-lighter" shape-rendering="crispEdges"/><polygon points="1382.2,534.3 1360.7,534.2 1351.8,568.0" fill="url(#m3_10)" style="mix-blend-mode:plus-lighter" shape-rendering="crispEdges"/><polygon points="1382.2,534.3 1360.7,534.2 1351.8,568.0" fill="#00f" fill-opacity="1.000" style="mix-blend-mode:plus-lighter" shape-rendering="crispEdges"/><polygon points="1360.7,534.2 1330.3,567.8 1351.8,568.0" fill="url(#m3_11)" style="mix-blend-mode:plus-lighter" shape-rendering="crispEdges"/><polygon points="1360.7,534.2 1330.3,567.8 1351.8,568.0" fill="url(#m3_12)" style="mix-blend-mode:plus-lighter" shape-rendering="crispEdges"/><polygon points="1360.7,534.2 1330.3,567.8 1351.8,568.0" fill="#00f" fill-opacity="1.000" style="mix-blend-mode:plus-lighter" shape-rendering="crispEdges"/><polygon points="1351.8,568.0 1330.3,567.8 1321.4,601.7" fill="url(#m3_13)" style="mix-blend-mode:plus-lighter" shape-rendering="crispEdges"/><polygon points="1351.8,568.0 1330.3,567.8 1321.4,601.7" fill="url(#m3_14)" style="mix-blend-mode:plus-lighter" shape-rendering="crispEdges"/><polygon points="1351.8,568.0 1330.3,567.8 1321.4,601.7" fill="#00f" fill-opacity="1.000" style="mix-blend-mode:plus-lighter" shape-rendering="crispEdges"/><polygon points="1330.3,567.8 1299.9,601.5 1321.4,601.7" fill="url(#m3_15)" style="mix-blend-mode:plus-lighter" shape-rendering="crispEdges"/><polygon points="1330.3,567.8 1299.9,601.5 1321.4,601.7" fill="url(#m3_16)" style="mix-blend-mode:plus-lighter" shape-rendering="crispEdges"/><polygon points="1330.3,567.8 1299.9,601.5 1321.4,601.7" fill="#00f" fill-opacity="1.000" style="mix-blend-mode:plus-lighter" shape-rendering="crispEdges"/><polygon points="1321.4,601.7 1299.9,601.5 1291.0,635.4" fill="url(#m3_17)" style="mix-blend-mode:plus-lighter" shape-rendering="crispEdges"/><polygon points="1321.4,601.7 1299.9,601.5 1291.0,635.4" fill="url(#m3_18)" style="mix-blend-mode:plus-lighter" shape-rendering="crispEdges"/><polygon points="1321.4,601.7 1299.9,601.5 1291.0,635.4" fill="#00f" fill-opacity="1.000" style="mix-blend-mode:plus-lighter" shape-rendering="crispEdges"/><polygon points="1421.4,466.8 1399.9,466.6 1391.1,500.5" fill="url(#m3_19)" style="mix-blend-mode:plus-lighter" shape-rendering="crispEdges"/><polygon points="1421.4,466.8 1399.9,466.6 1391.1,500.5" fill="url(#m3_20)" style="mix-blend-mode:plus-lighter" shape-rendering="crispEdges"/><polygon points="1421.4,466.8 1399.9,466.6 1391.1,500.5" fill="#00f" fill-opacity="1.000" style="mix-blend-mode:plus-lighter" shape-rendering="crispEdges"/><polygon points="1399.9,466.6 1369.5,500.3 1391.1,500.5" fill="url(#m3_21)" style="mix-blend-mode:plus-lighter" shape-rendering="crispEdges"/><polygon points="1399.9,466.6 1369.5,500.3 1391.1,500.5" fill="url(#m3_22)" style="mix-blend-mode:plus-lighter" shape-rendering="crispEdges"/><polygon points="1399.9,466.6 1369.5,500.3 1391.1,500.5" fill="#00f" fill-opacity="1.000" style="mix-blend-mode:plus-lighter" shape-rendering="crispEdges"/><polygon points="1391.1,500.5 1369.5,500.3 1360.7,534.2" fill="url(#m3_23)" style="mix-blend-mode:plus-lighter" shape-rendering="crispEdges"/><polygon points="1391.1,500.5 1369.5,500.3 1360.7,534.2" fill="url(#m3_24)" style="mix-blend-mode:plus-lighter" shape-rendering="crispEdges"/><polygon points="1391.1,500.5 1369.5,500.3 1360.7,534.2" fill="#00f" fill-opacity="1.000" style="mix-blend-mode:plus-lighter" shape-rendering="crispEdges"/><polygon points="1369.5,500.3 1339.1,534.0 1360.7,534.2" fill="url(#m3_25)" style="mix-blend-mode:plus-lighter" shape-rendering="crispEdges"/><polygon points="1369.5,500.3 1339.1,534.0 1360.7,534.2" fill="url(#m3_26)" style="mix-blend-mode:plus-lighter" shape-rendering="crispEdges"/><polygon points="1369.5,500.3 1339.1,534.0 1360.7,534.2" fill="#00f" fill-opacity="1.000" style="mix-blend-mode:plus-lighter" shape-rendering="crispEdges"/><polygon points="1360.7,534.2 1339.1,534.0 1330.3,567.8" fill="url(#m3_27)" style="mix-blend-mode:plus-lighter" shape-rendering="crispEdges"/><polygon points="1360.7,534.2 1339.1,534.0 1330.3,567.8" fill="url(#m3_28)" style="mix-blend-mode:plus-lighter" shape-rendering="crispEdges"/><polygon points="1360.7,534.2 1339.1,534.0 1330.3,567.8" fill="#00f" fill-opacity="1.000" style="mix-blend-mode:plus-lighter" shape-rendering="crispEdges"/><polygon points="1339.1,534.0 1308.7,567.6 1330.3,567.8" fill="url(#m3_29)" style="mix-blend-mode:plus-lighter" shape-rendering="crispEdges"/><polygon points="1339.1,534.0 1308.7,567.6 1330.3,567.8" fill="url(#m3_30)" style="mix-blend-mode:plus-lighter" shape-rendering="crispEdges"/><polygon points="1339.1,534.0 1308.7,567.6 1330.3,567.8" fill="#00f" fill-opacity="1.000" style="mix-blend-mode:plus-lighter" shape-rendering="crispEdges"/><polygon points="1330.3,567.8 1308.7,567.6 1299.9,601.5" fill="url(#m3_31)" style="mix-blend-mode:plus-lighter" shape-rendering="crispEdges"/><polygon points="1330.3,567.8 1308.7,567.6 1299.9,601.5" fill="url(#m3_32)" style="mix-blend-mode:plus-lighter" shape-rendering="crispEdges"/><polygon points="1330.3,567.8 1308.7,567.6 1299.9,601.5" fill="#00f" fill-opacity="1.000" style="mix-blend-mode:plus-lighter" shape-rendering="crispEdges"/><polygon points="1399.9,466.6 1378.3,466.4 1369.5,500.3" fill="url(#m3_33)" style="mix-blend-mode:plus-lighter" shape-rendering="crispEdges"/><polygon points="1399.9,466.6 1378.3,466.4 1369.5,500.3" fill="url(#m3_34)" style="mix-blend-mode:plus-lighter" shape-rendering="crispEdges"/><polygon points="1399.9,466.6 1378.3,466.4 1369.5,500.3" fill="#00f" fill-opacity="1.000" style="mix-blend-mode:plus-lighter" shape-rendering="crispEdges"/><polygon points="1378.3,466.4 1347.9,500.1 1369.5,500.3" fill="url(#m3_35)" style="mix-blend-mode:plus-lighter" shape-rendering="crispEdges"/><polygon points="1378.3,466.4 1347.9,500.1 1369.5,500.3" fill="url(#m3_36)" style="mix-blend-mode:plus-lighter" shape-rendering="crispEdges"/><polygon points="1378.3,466.4 1347.9,500.1 1369.5,500.3" fill="#00f" fill-opacity="1.000" style="mix-blend-mode:plus-lighter" shape-rendering="crispEdges"/><polygon points="1369.5,500.3 1347.9,500.1 1339.1,534.0" fill="url(#m3_37)" style="mix-blend-mode:plus-lighter" shape-rendering="crispEdges"/><polygon points="1369.5,500.3 1347.9,500.1 1339.1,534.0" fill="url(#m3_38)" style="mix-blend-mode:plus-lighter" shape-rendering="crispEdges"/><polygon points="1369.5,500.3 1347.9,500.1 1339.1,534.0" fill="#00f" fill-opacity="1.000" style="mix-blend-mode:plus-lighter" shape-rendering="crispEdges"/><polygon points="1347.9,500.1 1317.6,533.8 1339.1,534.0" fill="url(#m3_39)" style="mix-blend-mode:plus-lighter" shape-rendering="crispEdges"/><polygon points="1347.9,500.1 1317.6,533.8 1339.1,534.0" fill="url(#m3_40)" style="mix-blend-mode:plus-lighter" shape-rendering="crispEdges"/><polygon points="1347.9,500.1 1317.6,533.8 1339.1,534.0" fill="#00f" fill-opacity="1.000" style="mix-blend-mode:plus-lighter" shape-rendering="crispEdges"/><polygon points="1339.1,534.0 1317.6,533.8 1308.7,567.6" fill="url(#m3_41)" style="mix-blend-mode:plus-lighter" shape-rendering="crispEdges"/><polygon points="1339.1,534.0 1317.6,533.8 1308.7,567.6" fill="url(#m3_42)" style="mix-blend-mode:plus-lighter" shape-rendering="crispEdges"/><polygon points="1339.1,534.0 1317.6,533.8 1308.7,567.6" fill="#00f" fill-opacity="1.000" style="mix-blend-mode:plus-lighter" shape-rendering="crispEdges"/><polygon points="1378.3,466.4 1356.8,466.2 1347.9,500.1" fill="url(#m3_43)" style="mix-blend-mode:plus-lighter" shape-rendering="crispEdges"/><polygon points="1378.3,466.4 1356.8,466.2 1347.9,500.1" fill="url(#m3_44)" style="mix-blend-mode:plus-lighter" shape-rendering="crispEdges"/><polygon points="1378.3,466.4 1356.8,466.2 1347.9,500.1" fill="#00f" fill-opacity="1.000" style="mix-blend-mode:plus-lighter" shape-rendering="crispEdges"/><polygon points="1356.8,466.2 1326.4,499.9 1347.9,500.1" fill="url(#m3_45)" style="mix-blend-mode:plus-lighter" shape-rendering="crispEdges"/><polygon points="1356.8,466.2 1326.4,499.9 1347.9,500.1" fill="url(#m3_46)" style="mix-blend-mode:plus-lighter" shape-rendering="crispEdges"/><polygon points="1356.8,466.2 1326.4,499.9 1347.9,500.1" fill="#00f" fill-opacity="1.000" style="mix-blend-mode:plus-lighter" shape-rendering="crispEdges"/><polygon points="1347.9,500.1 1326.4,499.9 1317.6,533.8" fill="url(#m3_47)" style="mix-blend-mode:plus-lighter" shape-rendering="crispEdges"/><polygon points="1347.9,500.1 1326.4,499.9 1317.6,533.8" fill="url(#m3_48)" style="mix-blend-mode:plus-lighter" shape-rendering="crispEdges"/><polygon points="1347.9,500.1 1326.4,499.9 1317.6,533.8" fill="#00f" fill-opacity="1.000" style="mix-blend-mode:plus-lighter" shape-rendering="crispEdges"/><polygon points="1356.8,466.2 1335.2,466.0 1326.4,499.9" fill="url(#m3_49)" style="mix-blend-mode:plus-lighter" shape-rendering="crispEdges"/><polygon points="1356.8,466.2 1335.2,466.0 1326.4,499.9" fill="url(#m3_50)" style="mix-blend-mode:plus-lighter" shape-rendering="crispEdges"/><polygon points="1356.8,466.2 1335.2,466.0 1326.4,499.9" fill="#00f" fill-opacity="1.000" style="mix-blend-mode:plus-lighter" shape-rendering="crispEdges"/><polygon points="1443.0,467.0 1412.6,500.7 1447.4,488.7" fill="url(#m4_1)" style="mix-blend-mode:plus-lighter" shape-rendering="crispEdges"/><polygon points="1443.0,467.0 1412.6,500.7 1447.4,488.7" fill="url(#m4_2)" style="mix-blend-mode:plus-lighter" shape-rendering="crispEdges"/><polygon points="1443.0,467.0 1412.6,500.7 1447.4,488.7" fill="#00f" fill-opacity="1.000" style="mix-blend-mode:plus-lighter" shape-rendering="crispEdges"/><polygon points="1412.6,500.7 1417.0,522.4 1447.4,488.7" fill="url(#m4_3)" style="mix-blend-mode:plus-lighter" shape-rendering="crispEdges"/><polygon points="1412.6,500.7 1417.0,522.4 1447.4,488.7" fill="url(#m4_4)" style="mix-blend-mode:plus-lighter" shape-rendering="crispEdges"/><polygon points="1412.6,500.7 1417.0,522.4 1447.4,488.7" fill="#00f" fill-opacity="1.000" style="mix-blend-mode:plus-lighter" shape-rendering="crispEdges"/><polygon points="1447.4,488.7 1417.0,522.4 1451.9,510.5" fill="url(#m4_5)" style="mix-blend-mode:plus-lighter" shape-rendering="crispEdges"/><polygon points="1447.4,488.7 1417.0,522.4 1451.9,510.5" fill="url(#m4_6)" style="mix-blend-mode:plus-lighter" shape-rendering="crispEdges"/><polygon points="1447.4,488.7 1417.0,522.4 1451.9,510.5" fill="#00f" fill-opacity="1.000" style="mix-blend-mode:plus-lighter" shape-rendering="crispEdges"/><polygon points="1417.0,522.4 1421.5,544.1 1451.9,510.5" fill="url(#m4_7)" style="mix-blend-mode:plus-lighter" shape-rendering="crispEdges"/><polygon points="1417.0,522.4 1421.5,544.1 1451.9,510.5" fill="url(#m4_8)" style="mix-blend-mode:plus-lighter" shape-rendering="crispEdges"/><polygon points="1417.0,522.4 1421.5,544.1 1451.9,510.5" fill="#00f" fill-opacity="1.000" style="mix-blend-mode:plus-lighter" shape-rendering="crispEdges"/><polygon points="1451.9,510.5 1421.5,544.1 1456.3,532.2" fill="url(#m4_9)" style="mix-blend-mode:plus-lighter" shape-rendering="crispEdges"/><polygon points="1451.9,510.5 1421.5,544.1 1456.3,532.2" fill="url(#m4_10)" style="mix-blend-mode:plus-lighter" shape-rendering="crispEdges"/><polygon points="1451.9,510.5 1421.5,544.1 1456.3,532.2" fill="#00f" fill-opacity="1.000" style="mix-blend-mode:plus-lighter" shape-rendering="crispEdges"/><polygon points="1421.5,544.1 1425.9,565.9 1456.3,532.2" fill="url(#m4_11)" style="mix-blend-mode:plus-lighter" shape-rendering="crispEdges"/><polygon points="1421.5,544.1 1425.9,565.9 1456.3,532.2" fill="url(#m4_12)" style="mix-blend-mode:plus-lighter" shape-rendering="crispEdges"/><polygon points="1421.5,544.1 1425.9,565.9 1456.3,532.2" fill="#00f" fill-opacity="1.000" style="mix-blend-mode:plus-lighter" shape-rendering="crispEdges"/><polygon points="1456.3,532.2 1425.9,565.9 1460.7,553.9" fill="url(#m4_13)" style="mix-blend-mode:plus-lighter" shape-rendering="crispEdges"/><polygon points="1456.3,532.2 1425.9,565.9 1460.7,553.9" fill="url(#m4_14)" style="mix-blend-mode:plus-lighter" shape-rendering="crispEdges"/><polygon points="1456.3,532.2 1425.9,565.9 1460.7,553.9" fill="#00f" fill-opacity="1.000" style="mix-blend-mode:plus-lighter" shape-rendering="crispEdges"/><polygon points="1425.9,565.9 1430.3,587.6 1460.7,553.9" fill="url(#m4_15)" style="mix-blend-mode:plus-lighter" shape-rendering="crispEdges"/><polygon points="1425.9,565.9 1430.3,587.6 1460.7,553.9" fill="url(#m4_16)" style="mix-blend-mode:plus-lighter" shape-rendering="crispEdges"/><polygon points="1425.9,565.9 1430.3,587.6 1460.7,553.9" fill="#00f" fill-opacity="1.000" style="mix-blend-mode:plus-lighter" shape-rendering="crispEdges"/><polygon points="1460.7,553.9 1430.3,587.6 1465.1,575.6" fill="url(#m4_17)" style="mix-blend-mode:plus-lighter" shape-rendering="crispEdges"/><polygon points="1460.7,553.9 1430.3,587.6 1465.1,575.6" fill="url(#m4_18)" style="mix-blend-mode:plus-lighter" shape-rendering="crispEdges"/><polygon points="1460.7,553.9 1430.3,587.6 1465.1,575.6" fill="#00f" fill-opacity="1.000" style="mix-blend-mode:plus-lighter" shape-rendering="crispEdges"/><polygon points="1412.6,500.7 1382.2,534.3 1417.0,522.4" fill="url(#m4_19)" style="mix-blend-mode:plus-lighter" shape-rendering="crispEdges"/><polygon points="1412.6,500.7 1382.2,534.3 1417.0,522.4" fill="url(#m4_20)" style="mix-blend-mode:plus-lighter" shape-rendering="crispEdges"/><polygon points="1412.6,500.7 1382.2,534.3 1417.0,522.4" fill="#00f" fill-opacity="1.000" style="mix-blend-mode:plus-lighter" shape-rendering="crispEdges"/><polygon points="1382.2,534.3 1386.6,556.1 1417.0,522.4" fill="url(#m4_21)" style="mix-blend-mode:plus-lighter" shape-rendering="crispEdges"/><polygon points="1382.2,534.3 1386.6,556.1 1417.0,522.4" fill="url(#m4_22)" style="mix-blend-mode:plus-lighter" shape-rendering="crispEdges"/><polygon points="1382.2,534.3 1386.6,556.1 1417.0,522.4" fill="#00f" fill-opacity="1.000" style="mix-blend-mode:plus-lighter" shape-rendering="crispEdges"/><polygon points="1417.0,522.4 1386.6,556.1 1421.5,544.1" fill="url(#m4_23)" style="mix-blend-mode:plus-lighter" shape-rendering="crispEdges"/><polygon points="1417.0,522.4 1386.6,556.1 1421.5,544.1" fill="url(#m4_24)" style="mix-blend-mode:plus-lighter" shape-rendering="crispEdges"/><polygon points="1417.0,522.4 1386.6,556.1 1421.5,544.1" fill="#00f" fill-opacity="1.000" style="mix-blend-mode:plus-lighter" shape-rendering="crispEdges"/><polygon points="1386.6,556.1 1391.1,577.8 1421.5,544.1" fill="url(#m4_25)" style="mix-blend-mode:plus-lighter" shape-rendering="crispEdges"/><polygon points="1386.6,556.1 1391.1,577.8 1421.5,544.1" fill="url(#m4_26)" style="mix-blend-mode:plus-lighter" shape-rendering="crispEdges"/><polygon points="1386.6,556.1 1391.1,577.8 1421.5,544.1" fill="#00f" fill-opacity="1.000" style="mix-blend-mode:plus-lighter" shape-rendering="crispEdges"/><polygon points="1421.5,544.1 1391.1,577.8 1425.9,565.9" fill="url(#m4_27)" style="mix-blend-mode:plus-lighter" shape-rendering="crispEdges"/><polygon points="1421.5,544.1 1391.1,577.8 1425.9,565.9" fill="url(#m4_28)" style="mix-blend-mode:plus-lighter" shape-rendering="crispEdges"/><polygon points="1421.5,544.1 1391.1,577.8 1425.9,565.9" fill="#00f" fill-opacity="1.000" style="mix-blend-mode:plus-lighter" shape-rendering="crispEdges"/><polygon points="1391.1,577.8 1395.5,599.5 1425.9,565.9" fill="url(#m4_29)" style="mix-blend-mode:plus-lighter" shape-rendering="crispEdges"/><polygon points="1391.1,577.8 1395.5,599.5 1425.9,565.9" fill="url(#m4_30)" style="mix-blend-mode:plus-lighter" shape-rendering="crispEdges"/><polygon points="1391.1,577.8 1395.5,599.5 1425.9,565.9" fill="#00f" fill-opacity="1.000" style="mix-blend-mode:plus-lighter" shape-rendering="crispEdges"/><polygon points="1425.9,565.9 1395.5,599.5 1430.3,587.6" fill="url(#m4_31)" style="mix-blend-mode:plus-lighter" shape-rendering="crispEdges"/><polygon points="1425.9,565.9 1395.5,599.5 1430.3,587.6" fill="url(#m4_32)" style="mix-blend-mode:plus-lighter" shape-rendering="crispEdges"/><polygon points="1425.9,565.9 1395.5,599.5 1430.3,587.6" fill="#00f" fill-opacity="1.000" style="mix-blend-mode:plus-lighter" shape-rendering="crispEdges"/><polygon points="1382.2,534.3 1351.8,568.0 1386.6,556.1" fill="url(#m4_33)" style="mix-blend-mode:plus-lighter" shape-rendering="crispEdges"/><polygon points="1382.2,534.3 1351.8,568.0 1386.6,556.1" fill="url(#m4_34)" style="mix-blend-mode:plus-lighter" shape-rendering="crispEdges"/><polygon points="1382.2,534.3 1351.8,568.0 1386.6,556.1" fill="#00f" fill-opacity="1.000" style="mix-blend-mode:plus-lighter" shape-rendering="crispEdges"/><polygon points="1351.8,568.0 1356.2,589.7 1386.6,556.1" fill="url(#m4_35)" style="mix-blend-mode:plus-lighter" shape-rendering="crispEdges"/><polygon points="1351.8,568.0 1356.2,589.7 1386.6,556.1" fill="url(#m4_36)" style="mix-blend-mode:plus-lighter" shape-rendering="crispEdges"/><polygon points="1351.8,568.0 1356.2,589.7 1386.6,556.1" fill="#00f" fill-opacity="1.000" style="mix-blend-mode:plus-lighter" shape-rendering="crispEdges"/><polygon points="1386.6,556.1 1356.2,589.7 1391.1,577.8" fill="url(#m4_37)" style="mix-blend-mode:plus-lighter" shape-rendering="crispEdges"/><polygon points="1386.6,556.1 1356.2,589.7 1391.1,577.8" fill="url(#m4_38)" style="mix-blend-mode:plus-lighter" shape-rendering="crispEdges"/><polygon points="1386.6,556.1 1356.2,589.7 1391.1,577.8" fill="#00f" fill-opacity="1.000" style="mix-blend-mode:plus-lighter" shape-rendering="crispEdges"/><polygon points="1356.2,589.7 1360.7,611.5 1391.1,577.8" fill="url(#m4_39)" style="mix-blend-mode:plus-lighter" shape-rendering="crispEdges"/><polygon points="1356.2,589.7 1360.7,611.5 1391.1,577.8" fill="url(#m4_40)" style="mix-blend-mode:plus-lighter" shape-rendering="crispEdges"/><polygon points="1356.2,589.7 1360.7,611.5 1391.1,577.8" fill="#00f" fill-opacity="1.000" style="mix-blend-mode:plus-lighter" shape-rendering="crispEdges"/><polygon points="1391.1,577.8 1360.7,611.5 1395.5,599.5" fill="url(#m4_41)" style="mix-blend-mode:plus-lighter" shape-rendering="crispEdges"/><polygon points="1391.1,577.8 1360.7,611.5 1395.5,599.5" fill="url(#m4_42)" style="mix-blend-mode:plus-lighter" shape-rendering="crispEdges"/><polygon points="1391.1,577.8 1360.7,611.5 1395.5,599.5" fill="#00f" fill-opacity="1.000" style="mix-blend-mode:plus-lighter" shape-rendering="crispEdges"/><polygon points="1351.8,568.0 1321.4,601.7 1356.2,589.7" fill="url(#m4_43)" style="mix-blend-mode:plus-lighter" shape-rendering="crispEdges"/><polygon points="1351.8,568.0 1321.4,601.7 1356.2,589.7" fill="url(#m4_44)" style="mix-blend-mode:plus-lighter" shape-rendering="crispEdges"/><polygon points="1351.8,568.0 1321.4,601.7 1356.2,589.7" fill="#00f" fill-opacity="1.000" style="mix-blend-mode:plus-lighter" shape-rendering="crispEdges"/><polygon points="1321.4,601.7 1325.9,623.4 1356.2,589.7" fill="url(#m4_45)" style="mix-blend-mode:plus-lighter" shape-rendering="crispEdges"/><polygon points="1321.4,601.7 1325.9,623.4 1356.2,589.7" fill="url(#m4_46)" style="mix-blend-mode:plus-lighter" shape-rendering="crispEdges"/><polygon points="1321.4,601.7 1325.9,623.4 1356.2,589.7" fill="#00f" fill-opacity="1.000" style="mix-blend-mode:plus-lighter" shape-rendering="crispEdges"/><polygon points="1356.2,589.7 1325.9,623.4 1360.7,611.5" fill="url(#m4_47)" style="mix-blend-mode:plus-lighter" shape-rendering="crispEdges"/><polygon points="1356.2,589.7 1325.9,623.4 1360.7,611.5" fill="url(#m4_48)" style="mix-blend-mode:plus-lighter" shape-rendering="crispEdges"/><polygon points="1356.2,589.7 1325.9,623.4 1360.7,611.5" fill="#00f" fill-opacity="1.000" style="mix-blend-mode:plus-lighter" shape-rendering="crispEdges"/><polygon points="1321.4,601.7 1291.0,635.4 1325.9,623.4" fill="url(#m4_49)" style="mix-blend-mode:plus-lighter" shape-rendering="crispEdges"/><polygon points="1321.4,601.7 1291.0,635.4 1325.9,623.4" fill="url(#m4_50)" style="mix-blend-mode:plus-lighter" shape-rendering="crispEdges"/><polygon points="1321.4,601.7 1291.0,635.4 1325.9,623.4" fill="#00f" fill-opacity="1.000" style="mix-blend-mode:plus-lighter" shape-rendering="crispEdges"/><polygon points="1443.0,467.0 1447.4,488.7 1509.0,467.6" fill="#f00" fill-opacity="1.000" style="mix-blend-mode:plus-lighter" shape-rendering="crispEdges"/><polygon points="1443.0,467.0 1447.4,488.7 1509.0,467.6" fill="url(#m5_1)" style="mix-blend-mode:plus-lighter" shape-rendering="crispEdges"/><polygon points="1443.0,467.0 1447.4,488.7 1509.0,467.6" fill="url(#m5_2)" style="mix-blend-mode:plus-lighter" shape-rendering="crispEdges"/><polygon points="1447.4,488.7 1513.5,489.3 1509.0,467.6" fill="#f00" fill-opacity="1.000" style="mix-blend-mode:plus-lighter" shape-rendering="crispEdges"/><polygon points="1447.4,488.7 1513.5,489.3 1509.0,467.6" fill="url(#m5_3)" style="mix-blend-mode:plus-lighter" shape-rendering="crispEdges"/><polygon points="1447.4,488.7 1513.5,489.3 1509.0,467.6" fill="url(#m5_4)" style="mix-blend-mode:plus-lighter" shape-rendering="crispEdges"/><polygon points="1509.0,467.6 1513.5,489.3 1575.1,468.2" fill="#f00" fill-opacity="1.000" style="mix-blend-mode:plus-lighter" shape-rendering="crispEdges"/><polygon points="1509.0,467.6 1513.5,489.3 1575.1,468.2" fill="url(#m5_5)" style="mix-blend-mode:plus-lighter" shape-rendering="crispEdges"/><polygon points="1509.0,467.6 1513.5,489.3 1575.1,468.2" fill="url(#m5_6)" style="mix-blend-mode:plus-lighter" shape-rendering="crispEdges"/><polygon points="1513.5,489.3 1579.5,489.9 1575.1,468.2" fill="#f00" fill-opacity="1.000" style="mix-blend-mode:plus-lighter" shape-rendering="crispEdges"/><polygon points="1513.5,489.3 1579.5,489.9 1575.1,468.2" fill="url(#m5_7)" style="mix-blend-mode:plus-lighter" shape-rendering="crispEdges"/><polygon points="1513.5,489.3 1579.5,489.9 1575.1,468.2" fill="url(#m5_8)" style="mix-blend-mode:plus-lighter" shape-rendering="crispEdges"/><polygon points="1575.1,468.2 1579.5,489.9 1641.1,468.8" fill="#f00" fill-opacity="1.000" style="mix-blend-mode:plus-lighter" shape-rendering="crispEdges"/><polygon points="1575.1,468.2 1579.5,489.9 1641.1,468.8" fill="url(#m5_9)" style="mix-blend-mode:plus-lighter" shape-rendering="crispEdges"/><polygon points="1575.1,468.2 1579.5,489.9 1641.1,468.8" fill="url(#m5_10)" style="mix-blend-mode:plus-lighter" shape-rendering="crispEdges"/><polygon points="1579.5,489.9 1645.6,490.5 1641.1,468.8" fill="#f00" fill-opacity="1.000" style="mix-blend-mode:plus-lighter" shape-rendering="crispEdges"/><polygon points="1579.5,489.9 1645.6,490.5 1641.1,468.8" fill="url(#m5_11)" style="mix-blend-mode:plus-lighter" shape-rendering="crispEdges"/><polygon points="1579.5,489.9 1645.6,490.5 1641.1,468.8" fill="url(#m5_12)" style="mix-blend-mode:plus-lighter" shape-rendering="crispEdges"/><polygon points="1641.1,468.8 1645.6,490.5 1707.2,469.4" fill="#f00" fill-opacity="1.000" style="mix-blend-mode:plus-lighter" shape-rendering="crispEdges"/><polygon points="1641.1,468.8 1645.6,490.5 1707.2,469.4" fill="url(#m5_13)" style="mix-blend-mode:plus-lighter" shape-rendering="crispEdges"/><polygon points="1641.1,468.8 1645.6,490.5 1707.2,469.4" fill="url(#m5_14)" style="mix-blend-mode:plus-lighter" shape-rendering="crispEdges"/><polygon points="1645.6,490.5 1711.6,491.1 1707.2,469.4" fill="#f00" fill-opacity="1.000" style="mix-blend-mode:plus-lighter" shape-rendering="crispEdges"/><polygon points="1645.6,490.5 1711.6,491.1 1707.2,469.4" fill="url(#m5_15)" style="mix-blend-mode:plus-lighter" shape-rendering="crispEdges"/><polygon points="1645.6,490.5 1711.6,491.1 1707.2,469.4" fill="url(#m5_16)" style="mix-blend-mode:plus-lighter" shape-rendering="crispEdges"/><polygon points="1707.2,469.4 1711.6,491.1 1773.2,469.9" fill="#f00" fill-opacity="1.000" style="mix-blend-mode:plus-lighter" shape-rendering="crispEdges"/><polygon points="1707.2,469.4 1711.6,491.1 1773.2,469.9" fill="url(#m5_17)" style="mix-blend-mode:plus-lighter" shape-rendering="crispEdges"/><polygon points="1707.2,469.4 1711.6,491.1 1773.2,469.9" fill="url(#m5_18)" style="mix-blend-mode:plus-lighter" shape-rendering="crispEdges"/><polygon points="1447.4,488.7 1451.9,510.5 1513.5,489.3" fill="#f00" fill-opacity="1.000" style="mix-blend-mode:plus-lighter" shape-rendering="crispEdges"/><polygon points="1447.4,488.7 1451.9,510.5 1513.5,489.3" fill="url(#m5_19)" style="mix-blend-mode:plus-lighter" shape-rendering="crispEdges"/><polygon points="1447.4,488.7 1451.9,510.5 1513.5,489.3" fill="url(#m5_20)" style="mix-blend-mode:plus-lighter" shape-rendering="crispEdges"/><polygon points="1451.9,510.5 1517.9,511.0 1513.5,489.3" fill="#f00" fill-opacity="1.000" style="mix-blend-mode:plus-lighter" shape-rendering="crispEdges"/><polygon points="1451.9,510.5 1517.9,511.0 1513.5,489.3" fill="url(#m5_21)" style="mix-blend-mode:plus-lighter" shape-rendering="crispEdges"/><polygon points="1451.9,510.5 1517.9,511.0 1513.5,489.3" fill="url(#m5_22)" style="mix-blend-mode:plus-lighter" shape-rendering="crispEdges"/><polygon points="1513.5,489.3 1517.9,511.0 1579.5,489.9" fill="#f00" fill-opacity="1.000" style="mix-blend-mode:plus-lighter" shape-rendering="crispEdges"/><polygon points="1513.5,489.3 1517.9,511.0 1579.5,489.9" fill="url(#m5_23)" style="mix-blend-mode:plus-lighter" shape-rendering="crispEdges"/><polygon points="1513.5,489.3 1517.9,511.0 1579.5,489.9" fill="url(#m5_24)" style="mix-blend-mode:plus-lighter" shape-rendering="crispEdges"/><polygon points="1517.9,511.0 1583.9,511.6 1579.5,489.9" fill="#f00" fill-opacity="1.000" style="mix-blend-mode:plus-lighter" shape-rendering="crispEdges"/><polygon points="1517.9,511.0 1583.9,511.6 1579.5,489.9" fill="url(#m5_25)" style="mix-blend-mode:plus-lighter" shape-rendering="crispEdges"/><polygon points="1517.9,511.0 1583.9,511.6 1579.5,489.9" fill="url(#m5_26)" style="mix-blend-mode:plus-lighter" shape-rendering="crispEdges"/><polygon points="1579.5,489.9 1583.9,511.6 1645.6,490.5" fill="#f00" fill-opacity="1.000" style="mix-blend-mode:plus-lighter" shape-rendering="crispEdges"/><polygon points="1579.5,489.9 1583.9,511.6 1645.6,490.5" fill="url(#m5_27)" style="mix-blend-mode:plus-lighter" shape-rendering="crispEdges"/><polygon points="1579.5,489.9 1583.9,511.6 1645.6,490.5" fill="url(#m5_28)" style="mix-blend-mode:plus-lighter" shape-rendering="crispEdges"/><polygon points="1583.9,511.6 1650.0,512.2 1645.6,490.5" fill="#f00" fill-opacity="1.000" style="mix-blend-mode:plus-lighter" shape-rendering="crispEdges"/><polygon points="1583.9,511.6 1650.0,512.2 1645.6,490.5" fill="url(#m5_29)" style="mix-blend-mode:plus-lighter" shape-rendering="crispEdges"/><polygon points="1583.9,511.6 1650.0,512.2 1645.6,490.5" fill="url(#m5_30)" style="mix-blend-mode:plus-lighter" shape-rendering="crispEdges"/><polygon points="1645.6,490.5 1650.0,512.2 1711.6,491.1" fill="#f00" fill-opacity="1.000" style="mix-blend-mode:plus-lighter" shape-rendering="crispEdges"/><polygon points="1645.6,490.5 1650.0,512.2 1711.6,491.1" fill="url(#m5_31)" style="mix-blend-mode:plus-lighter" shape-rendering="crispEdges"/><polygon points="1645.6,490.5 1650.0,512.2 1711.6,491.1" fill="url(#m5_32)" style="mix-blend-mode:plus-lighter" shape-rendering="crispEdges"/><polygon points="1451.9,510.5 1456.3,532.2 1517.9,511.0" fill="#f00" fill-opacity="1.000" style="mix-blend-mode:plus-lighter" shape-rendering="crispEdges"/><polygon points="1451.9,510.5 1456.3,532.2 1517.9,511.0" fill="url(#m5_33)" style="mix-blend-mode:plus-lighter" shape-rendering="crispEdges"/><polygon points="1451.9,510.5 1456.3,532.2 1517.9,511.0" fill="url(#m5_34)" style="mix-blend-mode:plus-lighter" shape-rendering="crispEdges"/><polygon points="1456.3,532.2 1522.3,532.8 1517.9,511.0" fill="#f00" fill-opacity="1.000" style="mix-blend-mode:plus-lighter" shape-rendering="crispEdges"/><polygon points="1456.3,532.2 1522.3,532.8 1517.9,511.0" fill="url(#m5_35)" style="mix-blend-mode:plus-lighter" shape-rendering="crispEdges"/><polygon points="1456.3,532.2 1522.3,532.8 1517.9,511.0" fill="url(#m5_36)" style="mix-blend-mode:plus-lighter" shape-rendering="crispEdges"/><polygon points="1517.9,511.0 1522.3,532.8 1583.9,511.6" fill="#f00" fill-opacity="1.000" style="mix-blend-mode:plus-lighter" shape-rendering="crispEdges"/><polygon points="1517.9,511.0 1522.3,532.8 1583.9,511.6" fill="url(#m5_37)" style="mix-blend-mode:plus-lighter" shape-rendering="crispEdges"/><polygon points="1517.9,511.0 1522.3,532.8 1583.9,511.6" fill="url(#m5_38)" style="mix-blend-mode:plus-lighter" shape-rendering="crispEdges"/><polygon points="1522.3,532.8 1588.4,533.4 1583.9,511.6" fill="#f00" fill-opacity="1.000" style="mix-blend-mode:plus-lighter" shape-rendering="crispEdges"/><polygon points="1522.3,532.8 1588.4,533.4 1583.9,511.6" fill="url(#m5_39)" style="mix-blend-mode:plus-lighter" shape-rendering="crispEdges"/><polygon points="1522.3,532.8 1588.4,533.4 1583.9,511.6" fill="url(#m5_40)" style="mix-blend-mode:plus-lighter" shape-rendering="crispEdges"/><polygon points="1583.9,511.6 1588.4,533.4 1650.0,512.2" fill="#f00" fill-opacity="1.000" style="mix-blend-mode:plus-lighter" shape-rendering="crispEdges"/><polygon points="1583.9,511.6 1588.4,533.4 1650.0,512.2" fill="url(#m5_41)" style="mix-blend-mode:plus-lighter" shape-rendering="crispEdges"/><polygon points="1583.9,511.6 1588.4,533.4 1650.0,512.2" fill="url(#m5_42)" style="mix-blend-mode:plus-lighter" shape-rendering="crispEdges"/><polygon points="1456.3,532.2 1460.7,553.9 1522.3,532.8" fill="#f00" fill-opacity="1.000" style="mix-blend-mode:plus-lighter" shape-rendering="crispEdges"/><polygon points="1456.3,532.2 1460.7,553.9 1522.3,532.8" fill="url(#m5_43)" style="mix-blend-mode:plus-lighter" shape-rendering="crispEdges"/><polygon points="1456.3,532.2 1460.7,553.9 1522.3,532.8" fill="url(#m5_44)" style="mix-blend-mode:plus-lighter" shape-rendering="crispEdges"/><polygon points="1460.7,553.9 1526.7,554.5 1522.3,532.8" fill="#f00" fill-opacity="1.000" style="mix-blend-mode:plus-lighter" shape-rendering="crispEdges"/><polygon points="1460.7,553.9 1526.7,554.5 1522.3,532.8" fill="url(#m5_45)" style="mix-blend-mode:plus-lighter" shape-rendering="crispEdges"/><polygon points="1460.7,553.9 1526.7,554.5 1522.3,532.8" fill="url(#m5_46)" style="mix-blend-mode:plus-lighter" shape-rendering="crispEdges"/><polygon points="1522.3,532.8 1526.7,554.5 1588.4,533.4" fill="#f00" fill-opacity="1.000" style="mix-blend-mode:plus-lighter" shape-rendering="crispEdges"/><polygon points="1522.3,532.8 1526.7,554.5 1588.4,533.4" fill="url(#m5_47)" style="mix-blend-mode:plus-lighter" shape-rendering="crispEdges"/><polygon points="1522.3,532.8 1526.7,554.5 1588.4,533.4" fill="url(#m5_48)" style="mix-blend-mode:plus-lighter" shape-rendering="crispEdges"/><polygon points="1460.7,553.9 1465.1,575.6 1526.7,554.5" fill="#f00" fill-opacity="1.000" style="mix-blend-mode:plus-lighter" shape-rendering="crispEdges"/><polygon points="1460.7,553.9 1465.1,575.6 1526.7,554.5" fill="url(#m5_49)" style="mix-blend-mode:plus-lighter" shape-rendering="crispEdges"/><polygon points="1460.7,553.9 1465.1,575.6 1526.7,554.5" fill="url(#m5_50)" style="mix-blend-mode:plus-lighter" shape-rendering="crispEdges"/></g></g><rect x="1163" y="146.6" width="745" height="521.4" fill="none" stroke="#a8a8a8" stroke-width="2"/><line x1="1161.6" y1="668" x2="1161.6" y2="674" stroke="#a8a8a8" stroke-width="2" /><text x="1161.6" y="691.5" font-size="16.5" fill="#cccccc" text-anchor="middle" font-weight="normal"  stroke="#cccccc" stroke-width="0.45">0</text><line x1="1250.36" y1="668" x2="1250.36" y2="674" stroke="#a8a8a8" stroke-width="2" /><text x="1250.36" y="691.5" font-size="16.5" fill="#cccccc" text-anchor="middle" font-weight="normal"  stroke="#cccccc" stroke-width="0.45">0.1</text><line x1="1339.12" y1="668" x2="1339.12" y2="674" stroke="#a8a8a8" stroke-width="2" /><text x="1339.12" y="691.5" font-size="16.5" fill="#cccccc" text-anchor="middle" font-weight="normal"  stroke="#cccccc" stroke-width="0.45">0.2</text><line x1="1427.8799999999999" y1="668" x2="1427.8799999999999" y2="674" stroke="#a8a8a8" stroke-width="2" /><text x="1427.8799999999999" y="691.5" font-size="16.5" fill="#cccccc" text-anchor="middle" font-weight="normal"  stroke="#cccccc" stroke-width="0.45">0.3</text><line x1="1516.6399999999999" y1="668" x2="1516.6399999999999" y2="674" stroke="#a8a8a8" stroke-width="2" /><text x="1516.6399999999999" y="691.5" font-size="16.5" fill="#cccccc" text-anchor="middle" font-weight="normal"  stroke="#cccccc" stroke-width="0.45">0.4</text><line x1="1605.3999999999999" y1="668" x2="1605.3999999999999" y2="674" stroke="#a8a8a8" stroke-width="2" /><text x="1605.3999999999999" y="691.5" font-size="16.5" fill="#cccccc" text-anchor="middle" font-weight="normal"  stroke="#cccccc" stroke-width="0.45">0.5</text><line x1="1694.1599999999999" y1="668" x2="1694.1599999999999" y2="674" stroke="#a8a8a8" stroke-width="2" /><text x="1694.1599999999999" y="691.5" font-size="16.5" fill="#cccccc" text-anchor="middle" font-weight="normal"  stroke="#cccccc" stroke-width="0.45">0.6</text><line x1="1782.92" y1="668" x2="1782.92" y2="674" stroke="#a8a8a8" stroke-width="2" /><text x="1782.92" y="691.5" font-size="16.5" fill="#cccccc" text-anchor="middle" font-weight="normal"  stroke="#cccccc" stroke-width="0.45">0.7</text><line x1="1871.6799999999998" y1="668" x2="1871.6799999999998" y2="674" stroke="#a8a8a8" stroke-width="2" /><text x="1871.6799999999998" y="691.5" font-size="16.5" fill="#cccccc" text-anchor="middle" font-weight="normal"  stroke="#cccccc" stroke-width="0.45">0.8</text><text x="1157" y="674.5" font-size="16.5" fill="#cccccc" text-anchor="end" font-weight="normal"  stroke="#cccccc" stroke-width="0.45">0</text><line x1="1157" y1="606.43" x2="1163" y2="606.43" stroke="#a8a8a8" stroke-width="2" /><text x="1155" y="612.43" font-size="16.5" fill="#cccccc" text-anchor="end" font-weight="normal"  stroke="#cccccc" stroke-width="0.45">0.1</text><line x1="1157" y1="544.36" x2="1163" y2="544.36" stroke="#a8a8a8" stroke-width="2" /><text x="1155" y="550.36" font-size="16.5" fill="#cccccc" text-anchor="end" font-weight="normal"  stroke="#cccccc" stroke-width="0.45">0.2</text><line x1="1157" y1="482.28999999999996" x2="1163" y2="482.28999999999996" stroke="#a8a8a8" stroke-width="2" /><text x="1155" y="488.28999999999996" font-size="16.5" fill="#cccccc" text-anchor="end" font-weight="normal"  stroke="#cccccc" stroke-width="0.45">0.3</text><line x1="1157" y1="420.21999999999997" x2="1163" y2="420.21999999999997" stroke="#a8a8a8" stroke-width="2" /><text x="1155" y="426.21999999999997" font-size="16.5" fill="#cccccc" text-anchor="end" font-weight="normal"  stroke="#cccccc" stroke-width="0.45">0.4</text><line x1="1157" y1="358.15" x2="1163" y2="358.15" stroke="#a8a8a8" stroke-width="2" /><text x="1155" y="364.15" font-size="16.5" fill="#cccccc" text-anchor="end" font-weight="normal"  stroke="#cccccc" stroke-width="0.45">0.5</text><line x1="1157" y1="296.0799999999999" x2="1163" y2="296.0799999999999" stroke="#a8a8a8" stroke-width="2" /><text x="1155" y="302.0799999999999" font-size="16.5" fill="#cccccc" text-anchor="end" font-weight="normal"  stroke="#cccccc" stroke-width="0.45">0.6</text><line x1="1157" y1="234.00999999999993" x2="1163" y2="234.00999999999993" stroke="#a8a8a8" stroke-width="2" /><text x="1155" y="240.00999999999993" font-size="16.5" fill="#cccccc" text-anchor="end" font-weight="normal"  stroke="#cccccc" stroke-width="0.45">0.7</text><line x1="1157" y1="171.93999999999994" x2="1163" y2="171.93999999999994" stroke="#a8a8a8" stroke-width="2" /><text x="1155" y="177.93999999999994" font-size="16.5" fill="#cccccc" text-anchor="end" font-weight="normal"  stroke="#cccccc" stroke-width="0.45">0.8</text><rect x="1389.8" y="233.2" width="14" height="14" fill="none" stroke="#e8e8e8" stroke-width="2"/><rect x="1758.2" y="462.9" width="14" height="14" fill="none" stroke="#e8e8e8" stroke-width="2"/><rect x="1287.7" y="624.3" width="14" height="14" fill="none" stroke="#e8e8e8" stroke-width="2"/><rect x="1336.4" y="435.8" width="14" height="14" fill="none" stroke="#e8e8e8" stroke-width="2"/><rect x="1457.3" y="564.7" width="14" height="14" fill="none" stroke="#e8e8e8" stroke-width="2"/><rect x="1530.1" y="320.1" width="14" height="14" fill="none" stroke="#e8e8e8" stroke-width="2"/><rect x="1433.3" y="443.6" width="14" height="14" fill="none" stroke="#111" stroke-width="2"/><circle cx="1418.4" cy="294.2" r="4.6" fill="#00d000" stroke="#222" stroke-width="1.4"/><circle cx="1537.9" cy="357.9" r="4.6" fill="#c8c000" stroke="#222" stroke-width="1.4"/><circle cx="1744.9" cy="480.1" r="4.6" fill="#d00000" stroke="#222" stroke-width="1.4"/><circle cx="1349.6" cy="483.2" r="4.6" fill="#00b8a0" stroke="#222" stroke-width="1.4"/><circle cx="1379.1" cy="603.6" r="4.6" fill="#e000c0" stroke="#222" stroke-width="1.4"/><circle cx="1296.3" cy="631.0" r="4.6" fill="#1010d0" stroke="#222" stroke-width="1.4"/><circle cx="1420.2" cy="480.6" r="4.6" fill="#f8f8f8" stroke="#222" stroke-width="1.4"/><circle cx="1419.7" cy="482.4" r="4.6" fill="#ffffff" stroke="#222" stroke-width="1.4"/><g style="isolation:isolate"><rect x="1648" y="153" width="252" height="196" fill="#000" /><polygon points="1648.0,153.0 1679.5,153.0 1648.0,185.7" fill="url(#n1)" style="mix-blend-mode:plus-lighter" shape-rendering="crispEdges"/><polygon points="1648.0,153.0 1679.5,153.0 1648.0,185.7" fill="#0f0" fill-opacity="1.000" style="mix-blend-mode:plus-lighter" shape-rendering="crispEdges"/><polygon points="1648.0,153.0 1679.5,153.0 1648.0,185.7" fill="url(#n2)" style="mix-blend-mode:plus-lighter" shape-rendering="crispEdges"/><polygon points="1679.5,153.0 1679.5,185.7 1648.0,185.7" fill="url(#n3)" style="mix-blend-mode:plus-lighter" shape-rendering="crispEdges"/><polygon points="1679.5,153.0 1679.5,185.7 1648.0,185.7" fill="#0f0" fill-opacity="1.000" style="mix-blend-mode:plus-lighter" shape-rendering="crispEdges"/><polygon points="1679.5,153.0 1679.5,185.7 1648.0,185.7" fill="url(#n4)" style="mix-blend-mode:plus-lighter" shape-rendering="crispEdges"/><polygon points="1648.0,185.7 1679.5,185.7 1648.0,218.3" fill="url(#n5)" style="mix-blend-mode:plus-lighter" shape-rendering="crispEdges"/><polygon points="1648.0,185.7 1679.5,185.7 1648.0,218.3" fill="#0f0" fill-opacity="1.000" style="mix-blend-mode:plus-lighter" shape-rendering="crispEdges"/><polygon points="1648.0,185.7 1679.5,185.7 1648.0,218.3" fill="url(#n6)" style="mix-blend-mode:plus-lighter" shape-rendering="crispEdges"/><polygon points="1679.5,185.7 1679.5,218.3 1648.0,218.3" fill="url(#n7)" style="mix-blend-mode:plus-lighter" shape-rendering="crispEdges"/><polygon points="1679.5,185.7 1679.5,218.3 1648.0,218.3" fill="#0f0" fill-opacity="1.000" style="mix-blend-mode:plus-lighter" shape-rendering="crispEdges"/><polygon points="1679.5,185.7 1679.5,218.3 1648.0,218.3" fill="url(#n8)" style="mix-blend-mode:plus-lighter" shape-rendering="crispEdges"/><polygon points="1648.0,218.3 1679.5,218.3 1648.0,251.0" fill="url(#n9)" style="mix-blend-mode:plus-lighter" shape-rendering="crispEdges"/><polygon points="1648.0,218.3 1679.5,218.3 1648.0,251.0" fill="#0f0" fill-opacity="1.000" style="mix-blend-mode:plus-lighter" shape-rendering="crispEdges"/><polygon points="1648.0,218.3 1679.5,218.3 1648.0,251.0" fill="url(#n10)" style="mix-blend-mode:plus-lighter" shape-rendering="crispEdges"/><polygon points="1679.5,218.3 1679.5,251.0 1648.0,251.0" fill="url(#n11)" style="mix-blend-mode:plus-lighter" shape-rendering="crispEdges"/><polygon points="1679.5,218.3 1679.5,251.0 1648.0,251.0" fill="#0f0" fill-opacity="1.000" style="mix-blend-mode:plus-lighter" shape-rendering="crispEdges"/><polygon points="1679.5,218.3 1679.5,251.0 1648.0,251.0" fill="url(#n12)" style="mix-blend-mode:plus-lighter" shape-rendering="crispEdges"/><polygon points="1648.0,251.0 1679.5,251.0 1648.0,283.7" fill="url(#n13)" style="mix-blend-mode:plus-lighter" shape-rendering="crispEdges"/><polygon points="1648.0,251.0 1679.5,251.0 1648.0,283.7" fill="#0f0" fill-opacity="1.000" style="mix-blend-mode:plus-lighter" shape-rendering="crispEdges"/><polygon points="1648.0,251.0 1679.5,251.0 1648.0,283.7" fill="url(#n14)" style="mix-blend-mode:plus-lighter" shape-rendering="crispEdges"/><polygon points="1679.5,251.0 1679.5,283.7 1648.0,283.7" fill="url(#n15)" style="mix-blend-mode:plus-lighter" shape-rendering="crispEdges"/><polygon points="1679.5,251.0 1679.5,283.7 1648.0,283.7" fill="#0f0" fill-opacity="1.000" style="mix-blend-mode:plus-lighter" shape-rendering="crispEdges"/><polygon points="1679.5,251.0 1679.5,283.7 1648.0,283.7" fill="url(#n16)" style="mix-blend-mode:plus-lighter" shape-rendering="crispEdges"/><polygon points="1648.0,283.7 1679.5,283.7 1648.0,316.3" fill="url(#n17)" style="mix-blend-mode:plus-lighter" shape-rendering="crispEdges"/><polygon points="1648.0,283.7 1679.5,283.7 1648.0,316.3" fill="url(#n18)" style="mix-blend-mode:plus-lighter" shape-rendering="crispEdges"/><polygon points="1648.0,283.7 1679.5,283.7 1648.0,316.3" fill="url(#n19)" style="mix-blend-mode:plus-lighter" shape-rendering="crispEdges"/><polygon points="1679.5,283.7 1679.5,316.3 1648.0,316.3" fill="url(#n20)" style="mix-blend-mode:plus-lighter" shape-rendering="crispEdges"/><polygon points="1679.5,283.7 1679.5,316.3 1648.0,316.3" fill="url(#n21)" style="mix-blend-mode:plus-lighter" shape-rendering="crispEdges"/><polygon points="1679.5,283.7 1679.5,316.3 1648.0,316.3" fill="url(#n22)" style="mix-blend-mode:plus-lighter" shape-rendering="crispEdges"/><polygon points="1648.0,316.3 1679.5,316.3 1648.0,349.0" fill="url(#n23)" style="mix-blend-mode:plus-lighter" shape-rendering="crispEdges"/><polygon points="1648.0,316.3 1679.5,316.3 1648.0,349.0" fill="url(#n24)" style="mix-blend-mode:plus-lighter" shape-rendering="crispEdges"/><polygon points="1648.0,316.3 1679.5,316.3 1648.0,349.0" fill="#00f" fill-opacity="1.000" style="mix-blend-mode:plus-lighter" shape-rendering="crispEdges"/><polygon points="1679.5,316.3 1679.5,349.0 1648.0,349.0" fill="url(#n25)" style="mix-blend-mode:plus-lighter" shape-rendering="crispEdges"/><polygon points="1679.5,316.3 1679.5,349.0 1648.0,349.0" fill="url(#n26)" style="mix-blend-mode:plus-lighter" shape-rendering="crispEdges"/><polygon points="1679.5,316.3 1679.5,349.0 1648.0,349.0" fill="#00f" fill-opacity="1.000" style="mix-blend-mode:plus-lighter" shape-rendering="crispEdges"/><polygon points="1679.5,153.0 1711.0,153.0 1679.5,185.7" fill="url(#n27)" style="mix-blend-mode:plus-lighter" shape-rendering="crispEdges"/><polygon points="1679.5,153.0 1711.0,153.0 1679.5,185.7" fill="#0f0" fill-opacity="1.000" style="mix-blend-mode:plus-lighter" shape-rendering="crispEdges"/><polygon points="1679.5,153.0 1711.0,153.0 1679.5,185.7" fill="url(#n28)" style="mix-blend-mode:plus-lighter" shape-rendering="crispEdges"/><polygon points="1711.0,153.0 1711.0,185.7 1679.5,185.7" fill="url(#n29)" style="mix-blend-mode:plus-lighter" shape-rendering="crispEdges"/><polygon points="1711.0,153.0 1711.0,185.7 1679.5,185.7" fill="#0f0" fill-opacity="1.000" style="mix-blend-mode:plus-lighter" shape-rendering="crispEdges"/><polygon points="1711.0,153.0 1711.0,185.7 1679.5,185.7" fill="url(#n30)" style="mix-blend-mode:plus-lighter" shape-rendering="crispEdges"/><polygon points="1679.5,185.7 1711.0,185.7 1679.5,218.3" fill="url(#n31)" style="mix-blend-mode:plus-lighter" shape-rendering="crispEdges"/><polygon points="1679.5,185.7 1711.0,185.7 1679.5,218.3" fill="#0f0" fill-opacity="1.000" style="mix-blend-mode:plus-lighter" shape-rendering="crispEdges"/><polygon points="1679.5,185.7 1711.0,185.7 1679.5,218.3" fill="url(#n32)" style="mix-blend-mode:plus-lighter" shape-rendering="crispEdges"/><polygon points="1711.0,185.7 1711.0,218.3 1679.5,218.3" fill="url(#n33)" style="mix-blend-mode:plus-lighter" shape-rendering="crispEdges"/><polygon points="1711.0,185.7 1711.0,218.3 1679.5,218.3" fill="#0f0" fill-opacity="1.000" style="mix-blend-mode:plus-lighter" shape-rendering="crispEdges"/><polygon points="1711.0,185.7 1711.0,218.3 1679.5,218.3" fill="url(#n34)" style="mix-blend-mode:plus-lighter" shape-rendering="crispEdges"/><polygon points="1679.5,218.3 1711.0,218.3 1679.5,251.0" fill="url(#n35)" style="mix-blend-mode:plus-lighter" shape-rendering="crispEdges"/><polygon points="1679.5,218.3 1711.0,218.3 1679.5,251.0" fill="#0f0" fill-opacity="1.000" style="mix-blend-mode:plus-lighter" shape-rendering="crispEdges"/><polygon points="1679.5,218.3 1711.0,218.3 1679.5,251.0" fill="url(#n36)" style="mix-blend-mode:plus-lighter" shape-rendering="crispEdges"/><polygon points="1711.0,218.3 1711.0,251.0 1679.5,251.0" fill="url(#n37)" style="mix-blend-mode:plus-lighter" shape-rendering="crispEdges"/><polygon points="1711.0,218.3 1711.0,251.0 1679.5,251.0" fill="#0f0" fill-opacity="1.000" style="mix-blend-mode:plus-lighter" shape-rendering="crispEdges"/><polygon points="1711.0,218.3 1711.0,251.0 1679.5,251.0" fill="url(#n38)" style="mix-blend-mode:plus-lighter" shape-rendering="crispEdges"/><polygon points="1679.5,251.0 1711.0,251.0 1679.5,283.7" fill="url(#n39)" style="mix-blend-mode:plus-lighter" shape-rendering="crispEdges"/><polygon points="1679.5,251.0 1711.0,251.0 1679.5,283.7" fill="#0f0" fill-opacity="1.000" style="mix-blend-mode:plus-lighter" shape-rendering="crispEdges"/><polygon points="1679.5,251.0 1711.0,251.0 1679.5,283.7" fill="url(#n40)" style="mix-blend-mode:plus-lighter" shape-rendering="crispEdges"/><polygon points="1711.0,251.0 1711.0,283.7 1679.5,283.7" fill="url(#n41)" style="mix-blend-mode:plus-lighter" shape-rendering="crispEdges"/><polygon points="1711.0,251.0 1711.0,283.7 1679.5,283.7" fill="#0f0" fill-opacity="1.000" style="mix-blend-mode:plus-lighter" shape-rendering="crispEdges"/><polygon points="1711.0,251.0 1711.0,283.7 1679.5,283.7" fill="url(#n42)" style="mix-blend-mode:plus-lighter" shape-rendering="crispEdges"/><polygon points="1679.5,283.7 1711.0,283.7 1679.5,316.3" fill="url(#n43)" style="mix-blend-mode:plus-lighter" shape-rendering="crispEdges"/><polygon points="1679.5,283.7 1711.0,283.7 1679.5,316.3" fill="url(#n44)" style="mix-blend-mode:plus-lighter" shape-rendering="crispEdges"/><polygon points="1679.5,283.7 1711.0,283.7 1679.5,316.3" fill="url(#n45)" style="mix-blend-mode:plus-lighter" shape-rendering="crispEdges"/><polygon points="1711.0,283.7 1711.0,316.3 1679.5,316.3" fill="url(#n46)" style="mix-blend-mode:plus-lighter" shape-rendering="crispEdges"/><polygon points="1711.0,283.7 1711.0,316.3 1679.5,316.3" fill="url(#n47)" style="mix-blend-mode:plus-lighter" shape-rendering="crispEdges"/><polygon points="1711.0,283.7 1711.0,316.3 1679.5,316.3" fill="url(#n48)" style="mix-blend-mode:plus-lighter" shape-rendering="crispEdges"/><polygon points="1679.5,316.3 1711.0,316.3 1679.5,349.0" fill="url(#n49)" style="mix-blend-mode:plus-lighter" shape-rendering="crispEdges"/><polygon points="1679.5,316.3 1711.0,316.3 1679.5,349.0" fill="url(#n50)" style="mix-blend-mode:plus-lighter" shape-rendering="crispEdges"/><polygon points="1679.5,316.3 1711.0,316.3 1679.5,349.0" fill="#00f" fill-opacity="1.000" style="mix-blend-mode:plus-lighter" shape-rendering="crispEdges"/><polygon points="1711.0,316.3 1711.0,349.0 1679.5,349.0" fill="url(#n51)" style="mix-blend-mode:plus-lighter" shape-rendering="crispEdges"/><polygon points="1711.0,316.3 1711.0,349.0 1679.5,349.0" fill="url(#n52)" style="mix-blend-mode:plus-lighter" shape-rendering="crispEdges"/><polygon points="1711.0,316.3 1711.0,349.0 1679.5,349.0" fill="#00f" fill-opacity="1.000" style="mix-blend-mode:plus-lighter" shape-rendering="crispEdges"/><polygon points="1711.0,153.0 1742.5,153.0 1711.0,185.7" fill="url(#n53)" style="mix-blend-mode:plus-lighter" shape-rendering="crispEdges"/><polygon points="1711.0,153.0 1742.5,153.0 1711.0,185.7" fill="#0f0" fill-opacity="1.000" style="mix-blend-mode:plus-lighter" shape-rendering="crispEdges"/><polygon points="1711.0,153.0 1742.5,153.0 1711.0,185.7" fill="url(#n54)" style="mix-blend-mode:plus-lighter" shape-rendering="crispEdges"/><polygon points="1742.5,153.0 1742.5,185.7 1711.0,185.7" fill="url(#n55)" style="mix-blend-mode:plus-lighter" shape-rendering="crispEdges"/><polygon points="1742.5,153.0 1742.5,185.7 1711.0,185.7" fill="#0f0" fill-opacity="1.000" style="mix-blend-mode:plus-lighter" shape-rendering="crispEdges"/><polygon points="1742.5,153.0 1742.5,185.7 1711.0,185.7" fill="url(#n56)" style="mix-blend-mode:plus-lighter" shape-rendering="crispEdges"/><polygon points="1711.0,185.7 1742.5,185.7 1711.0,218.3" fill="url(#n57)" style="mix-blend-mode:plus-lighter" shape-rendering="crispEdges"/><polygon points="1711.0,185.7 1742.5,185.7 1711.0,218.3" fill="#0f0" fill-opacity="1.000" style="mix-blend-mode:plus-lighter" shape-rendering="crispEdges"/><polygon points="1711.0,185.7 1742.5,185.7 1711.0,218.3" fill="url(#n58)" style="mix-blend-mode:plus-lighter" shape-rendering="crispEdges"/><polygon points="1742.5,185.7 1742.5,218.3 1711.0,218.3" fill="url(#n59)" style="mix-blend-mode:plus-lighter" shape-rendering="crispEdges"/><polygon points="1742.5,185.7 1742.5,218.3 1711.0,218.3" fill="#0f0" fill-opacity="1.000" style="mix-blend-mode:plus-lighter" shape-rendering="crispEdges"/><polygon points="1742.5,185.7 1742.5,218.3 1711.0,218.3" fill="url(#n60)" style="mix-blend-mode:plus-lighter" shape-rendering="crispEdges"/><polygon points="1711.0,218.3 1742.5,218.3 1711.0,251.0" fill="url(#n61)" style="mix-blend-mode:plus-lighter" shape-rendering="crispEdges"/><polygon points="1711.0,218.3 1742.5,218.3 1711.0,251.0" fill="#0f0" fill-opacity="1.000" style="mix-blend-mode:plus-lighter" shape-rendering="crispEdges"/><polygon points="1711.0,218.3 1742.5,218.3 1711.0,251.0" fill="url(#n62)" style="mix-blend-mode:plus-lighter" shape-rendering="crispEdges"/><polygon points="1742.5,218.3 1742.5,251.0 1711.0,251.0" fill="url(#n63)" style="mix-blend-mode:plus-lighter" shape-rendering="crispEdges"/><polygon points="1742.5,218.3 1742.5,251.0 1711.0,251.0" fill="#0f0" fill-opacity="1.000" style="mix-blend-mode:plus-lighter" shape-rendering="crispEdges"/><polygon points="1742.5,218.3 1742.5,251.0 1711.0,251.0" fill="url(#n64)" style="mix-blend-mode:plus-lighter" shape-rendering="crispEdges"/><polygon points="1711.0,251.0 1742.5,251.0 1711.0,283.7" fill="url(#n65)" style="mix-blend-mode:plus-lighter" shape-rendering="crispEdges"/><polygon points="1711.0,251.0 1742.5,251.0 1711.0,283.7" fill="#0f0" fill-opacity="1.000" style="mix-blend-mode:plus-lighter" shape-rendering="crispEdges"/><polygon points="1711.0,251.0 1742.5,251.0 1711.0,283.7" fill="url(#n66)" style="mix-blend-mode:plus-lighter" shape-rendering="crispEdges"/><polygon points="1742.5,251.0 1742.5,283.7 1711.0,283.7" fill="url(#n67)" style="mix-blend-mode:plus-lighter" shape-rendering="crispEdges"/><polygon points="1742.5,251.0 1742.5,283.7 1711.0,283.7" fill="#0f0" fill-opacity="1.000" style="mix-blend-mode:plus-lighter" shape-rendering="crispEdges"/><polygon points="1742.5,251.0 1742.5,283.7 1711.0,283.7" fill="url(#n68)" style="mix-blend-mode:plus-lighter" shape-rendering="crispEdges"/><polygon points="1711.0,283.7 1742.5,283.7 1711.0,316.3" fill="url(#n69)" style="mix-blend-mode:plus-lighter" shape-rendering="crispEdges"/><polygon points="1711.0,283.7 1742.5,283.7 1711.0,316.3" fill="url(#n70)" style="mix-blend-mode:plus-lighter" shape-rendering="crispEdges"/><polygon points="1711.0,283.7 1742.5,283.7 1711.0,316.3" fill="url(#n71)" style="mix-blend-mode:plus-lighter" shape-rendering="crispEdges"/><polygon points="1742.5,283.7 1742.5,316.3 1711.0,316.3" fill="url(#n72)" style="mix-blend-mode:plus-lighter" shape-rendering="crispEdges"/><polygon points="1742.5,283.7 1742.5,316.3 1711.0,316.3" fill="url(#n73)" style="mix-blend-mode:plus-lighter" shape-rendering="crispEdges"/><polygon points="1742.5,283.7 1742.5,316.3 1711.0,316.3" fill="url(#n74)" style="mix-blend-mode:plus-lighter" shape-rendering="crispEdges"/><polygon points="1711.0,316.3 1742.5,316.3 1711.0,349.0" fill="url(#n75)" style="mix-blend-mode:plus-lighter" shape-rendering="crispEdges"/><polygon points="1711.0,316.3 1742.5,316.3 1711.0,349.0" fill="url(#n76)" style="mix-blend-mode:plus-lighter" shape-rendering="crispEdges"/><polygon points="1711.0,316.3 1742.5,316.3 1711.0,349.0" fill="#00f" fill-opacity="1.000" style="mix-blend-mode:plus-lighter" shape-rendering="crispEdges"/><polygon points="1742.5,316.3 1742.5,349.0 1711.0,349.0" fill="url(#n77)" style="mix-blend-mode:plus-lighter" shape-rendering="crispEdges"/><polygon points="1742.5,316.3 1742.5,349.0 1711.0,349.0" fill="url(#n78)" style="mix-blend-mode:plus-lighter" shape-rendering="crispEdges"/><polygon points="1742.5,316.3 1742.5,349.0 1711.0,349.0" fill="#00f" fill-opacity="1.000" style="mix-blend-mode:plus-lighter" shape-rendering="crispEdges"/><polygon points="1742.5,153.0 1774.0,153.0 1742.5,185.7" fill="url(#n79)" style="mix-blend-mode:plus-lighter" shape-rendering="crispEdges"/><polygon points="1742.5,153.0 1774.0,153.0 1742.5,185.7" fill="#0f0" fill-opacity="1.000" style="mix-blend-mode:plus-lighter" shape-rendering="crispEdges"/><polygon points="1742.5,153.0 1774.0,153.0 1742.5,185.7" fill="url(#n80)" style="mix-blend-mode:plus-lighter" shape-rendering="crispEdges"/><polygon points="1774.0,153.0 1774.0,185.7 1742.5,185.7" fill="url(#n81)" style="mix-blend-mode:plus-lighter" shape-rendering="crispEdges"/><polygon points="1774.0,153.0 1774.0,185.7 1742.5,185.7" fill="#0f0" fill-opacity="1.000" style="mix-blend-mode:plus-lighter" shape-rendering="crispEdges"/><polygon points="1774.0,153.0 1774.0,185.7 1742.5,185.7" fill="url(#n82)" style="mix-blend-mode:plus-lighter" shape-rendering="crispEdges"/><polygon points="1742.5,185.7 1774.0,185.7 1742.5,218.3" fill="url(#n83)" style="mix-blend-mode:plus-lighter" shape-rendering="crispEdges"/><polygon points="1742.5,185.7 1774.0,185.7 1742.5,218.3" fill="#0f0" fill-opacity="1.000" style="mix-blend-mode:plus-lighter" shape-rendering="crispEdges"/><polygon points="1742.5,185.7 1774.0,185.7 1742.5,218.3" fill="url(#n84)" style="mix-blend-mode:plus-lighter" shape-rendering="crispEdges"/><polygon points="1774.0,185.7 1774.0,218.3 1742.5,218.3" fill="url(#n85)" style="mix-blend-mode:plus-lighter" shape-rendering="crispEdges"/><polygon points="1774.0,185.7 1774.0,218.3 1742.5,218.3" fill="#0f0" fill-opacity="1.000" style="mix-blend-mode:plus-lighter" shape-rendering="crispEdges"/><polygon points="1774.0,185.7 1774.0,218.3 1742.5,218.3" fill="url(#n86)" style="mix-blend-mode:plus-lighter" shape-rendering="crispEdges"/><polygon points="1742.5,218.3 1774.0,218.3 1742.5,251.0" fill="url(#n87)" style="mix-blend-mode:plus-lighter" shape-rendering="crispEdges"/><polygon points="1742.5,218.3 1774.0,218.3 1742.5,251.0" fill="#0f0" fill-opacity="1.000" style="mix-blend-mode:plus-lighter" shape-rendering="crispEdges"/><polygon points="1742.5,218.3 1774.0,218.3 1742.5,251.0" fill="url(#n88)" style="mix-blend-mode:plus-lighter" shape-rendering="crispEdges"/><polygon points="1774.0,218.3 1774.0,251.0 1742.5,251.0" fill="url(#n89)" style="mix-blend-mode:plus-lighter" shape-rendering="crispEdges"/><polygon points="1774.0,218.3 1774.0,251.0 1742.5,251.0" fill="#0f0" fill-opacity="1.000" style="mix-blend-mode:plus-lighter" shape-rendering="crispEdges"/><polygon points="1774.0,218.3 1774.0,251.0 1742.5,251.0" fill="url(#n90)" style="mix-blend-mode:plus-lighter" shape-rendering="crispEdges"/><polygon points="1742.5,251.0 1774.0,251.0 1742.5,283.7" fill="url(#n91)" style="mix-blend-mode:plus-lighter" shape-rendering="crispEdges"/><polygon points="1742.5,251.0 1774.0,251.0 1742.5,283.7" fill="#0f0" fill-opacity="1.000" style="mix-blend-mode:plus-lighter" shape-rendering="crispEdges"/><polygon points="1742.5,251.0 1774.0,251.0 1742.5,283.7" fill="url(#n92)" style="mix-blend-mode:plus-lighter" shape-rendering="crispEdges"/><polygon points="1774.0,251.0 1774.0,283.7 1742.5,283.7" fill="url(#n93)" style="mix-blend-mode:plus-lighter" shape-rendering="crispEdges"/><polygon points="1774.0,251.0 1774.0,283.7 1742.5,283.7" fill="#0f0" fill-opacity="1.000" style="mix-blend-mode:plus-lighter" shape-rendering="crispEdges"/><polygon points="1774.0,251.0 1774.0,283.7 1742.5,283.7" fill="url(#n94)" style="mix-blend-mode:plus-lighter" shape-rendering="crispEdges"/><polygon points="1742.5,283.7 1774.0,283.7 1742.5,316.3" fill="url(#n95)" style="mix-blend-mode:plus-lighter" shape-rendering="crispEdges"/><polygon points="1742.5,283.7 1774.0,283.7 1742.5,316.3" fill="url(#n96)" style="mix-blend-mode:plus-lighter" shape-rendering="crispEdges"/><polygon points="1742.5,283.7 1774.0,283.7 1742.5,316.3" fill="url(#n97)" style="mix-blend-mode:plus-lighter" shape-rendering="crispEdges"/><polygon points="1774.0,283.7 1774.0,316.3 1742.5,316.3" fill="url(#n98)" style="mix-blend-mode:plus-lighter" shape-rendering="crispEdges"/><polygon points="1774.0,283.7 1774.0,316.3 1742.5,316.3" fill="url(#n99)" style="mix-blend-mode:plus-lighter" shape-rendering="crispEdges"/><polygon points="1774.0,283.7 1774.0,316.3 1742.5,316.3" fill="url(#n100)" style="mix-blend-mode:plus-lighter" shape-rendering="crispEdges"/><polygon points="1742.5,316.3 1774.0,316.3 1742.5,349.0" fill="url(#n101)" style="mix-blend-mode:plus-lighter" shape-rendering="crispEdges"/><polygon points="1742.5,316.3 1774.0,316.3 1742.5,349.0" fill="url(#n102)" style="mix-blend-mode:plus-lighter" shape-rendering="crispEdges"/><polygon points="1742.5,316.3 1774.0,316.3 1742.5,349.0" fill="#00f" fill-opacity="1.000" style="mix-blend-mode:plus-lighter" shape-rendering="crispEdges"/><polygon points="1774.0,316.3 1774.0,349.0 1742.5,349.0" fill="url(#n103)" style="mix-blend-mode:plus-lighter" shape-rendering="crispEdges"/><polygon points="1774.0,316.3 1774.0,349.0 1742.5,349.0" fill="url(#n104)" style="mix-blend-mode:plus-lighter" shape-rendering="crispEdges"/><polygon points="1774.0,316.3 1774.0,349.0 1742.5,349.0" fill="#00f" fill-opacity="1.000" style="mix-blend-mode:plus-lighter" shape-rendering="crispEdges"/><polygon points="1774.0,153.0 1805.5,153.0 1774.0,185.7" fill="url(#n105)" style="mix-blend-mode:plus-lighter" shape-rendering="crispEdges"/><polygon points="1774.0,153.0 1805.5,153.0 1774.0,185.7" fill="#0f0" fill-opacity="1.000" style="mix-blend-mode:plus-lighter" shape-rendering="crispEdges"/><polygon points="1774.0,153.0 1805.5,153.0 1774.0,185.7" fill="url(#n106)" style="mix-blend-mode:plus-lighter" shape-rendering="crispEdges"/><polygon points="1805.5,153.0 1805.5,185.7 1774.0,185.7" fill="url(#n107)" style="mix-blend-mode:plus-lighter" shape-rendering="crispEdges"/><polygon points="1805.5,153.0 1805.5,185.7 1774.0,185.7" fill="#0f0" fill-opacity="1.000" style="mix-blend-mode:plus-lighter" shape-rendering="crispEdges"/><polygon points="1805.5,153.0 1805.5,185.7 1774.0,185.7" fill="url(#n108)" style="mix-blend-mode:plus-lighter" shape-rendering="crispEdges"/><polygon points="1774.0,185.7 1805.5,185.7 1774.0,218.3" fill="url(#n109)" style="mix-blend-mode:plus-lighter" shape-rendering="crispEdges"/><polygon points="1774.0,185.7 1805.5,185.7 1774.0,218.3" fill="#0f0" fill-opacity="1.000" style="mix-blend-mode:plus-lighter" shape-rendering="crispEdges"/><polygon points="1774.0,185.7 1805.5,185.7 1774.0,218.3" fill="url(#n110)" style="mix-blend-mode:plus-lighter" shape-rendering="crispEdges"/><polygon points="1805.5,185.7 1805.5,218.3 1774.0,218.3" fill="url(#n111)" style="mix-blend-mode:plus-lighter" shape-rendering="crispEdges"/><polygon points="1805.5,185.7 1805.5,218.3 1774.0,218.3" fill="#0f0" fill-opacity="1.000" style="mix-blend-mode:plus-lighter" shape-rendering="crispEdges"/><polygon points="1805.5,185.7 1805.5,218.3 1774.0,218.3" fill="url(#n112)" style="mix-blend-mode:plus-lighter" shape-rendering="crispEdges"/><polygon points="1774.0,218.3 1805.5,218.3 1774.0,251.0" fill="url(#n113)" style="mix-blend-mode:plus-lighter" shape-rendering="crispEdges"/><polygon points="1774.0,218.3 1805.5,218.3 1774.0,251.0" fill="#0f0" fill-opacity="1.000" style="mix-blend-mode:plus-lighter" shape-rendering="crispEdges"/><polygon points="1774.0,218.3 1805.5,218.3 1774.0,251.0" fill="url(#n114)" style="mix-blend-mode:plus-lighter" shape-rendering="crispEdges"/><polygon points="1805.5,218.3 1805.5,251.0 1774.0,251.0" fill="url(#n115)" style="mix-blend-mode:plus-lighter" shape-rendering="crispEdges"/><polygon points="1805.5,218.3 1805.5,251.0 1774.0,251.0" fill="#0f0" fill-opacity="1.000" style="mix-blend-mode:plus-lighter" shape-rendering="crispEdges"/><polygon points="1805.5,218.3 1805.5,251.0 1774.0,251.0" fill="url(#n116)" style="mix-blend-mode:plus-lighter" shape-rendering="crispEdges"/><polygon points="1774.0,251.0 1805.5,251.0 1774.0,283.7" fill="url(#n117)" style="mix-blend-mode:plus-lighter" shape-rendering="crispEdges"/><polygon points="1774.0,251.0 1805.5,251.0 1774.0,283.7" fill="#0f0" fill-opacity="1.000" style="mix-blend-mode:plus-lighter" shape-rendering="crispEdges"/><polygon points="1774.0,251.0 1805.5,251.0 1774.0,283.7" fill="url(#n118)" style="mix-blend-mode:plus-lighter" shape-rendering="crispEdges"/><polygon points="1805.5,251.0 1805.5,283.7 1774.0,283.7" fill="url(#n119)" style="mix-blend-mode:plus-lighter" shape-rendering="crispEdges"/><polygon points="1805.5,251.0 1805.5,283.7 1774.0,283.7" fill="url(#n120)" style="mix-blend-mode:plus-lighter" shape-rendering="crispEdges"/><polygon points="1805.5,251.0 1805.5,283.7 1774.0,283.7" fill="url(#n121)" style="mix-blend-mode:plus-lighter" shape-rendering="crispEdges"/><polygon points="1774.0,283.7 1805.5,283.7 1774.0,316.3" fill="url(#n122)" style="mix-blend-mode:plus-lighter" shape-rendering="crispEdges"/><polygon points="1774.0,283.7 1805.5,283.7 1774.0,316.3" fill="url(#n123)" style="mix-blend-mode:plus-lighter" shape-rendering="crispEdges"/><polygon points="1774.0,283.7 1805.5,283.7 1774.0,316.3" fill="url(#n124)" style="mix-blend-mode:plus-lighter" shape-rendering="crispEdges"/><polygon points="1805.5,283.7 1805.5,316.3 1774.0,316.3" fill="url(#n125)" style="mix-blend-mode:plus-lighter" shape-rendering="crispEdges"/><polygon points="1805.5,283.7 1805.5,316.3 1774.0,316.3" fill="url(#n126)" style="mix-blend-mode:plus-lighter" shape-rendering="crispEdges"/><polygon points="1805.5,283.7 1805.5,316.3 1774.0,316.3" fill="url(#n127)" style="mix-blend-mode:plus-lighter" shape-rendering="crispEdges"/><polygon points="1774.0,316.3 1805.5,316.3 1774.0,349.0" fill="url(#n128)" style="mix-blend-mode:plus-lighter" shape-rendering="crispEdges"/><polygon points="1774.0,316.3 1805.5,316.3 1774.0,349.0" fill="url(#n129)" style="mix-blend-mode:plus-lighter" shape-rendering="crispEdges"/><polygon points="1774.0,316.3 1805.5,316.3 1774.0,349.0" fill="url(#n130)" style="mix-blend-mode:plus-lighter" shape-rendering="crispEdges"/><polygon points="1805.5,316.3 1805.5,349.0 1774.0,349.0" fill="url(#n131)" style="mix-blend-mode:plus-lighter" shape-rendering="crispEdges"/><polygon points="1805.5,316.3 1805.5,349.0 1774.0,349.0" fill="url(#n132)" style="mix-blend-mode:plus-lighter" shape-rendering="crispEdges"/><polygon points="1805.5,316.3 1805.5,349.0 1774.0,349.0" fill="url(#n133)" style="mix-blend-mode:plus-lighter" shape-rendering="crispEdges"/><polygon points="1805.5,153.0 1837.0,153.0 1805.5,185.7" fill="url(#n134)" style="mix-blend-mode:plus-lighter" shape-rendering="crispEdges"/><polygon points="1805.5,153.0 1837.0,153.0 1805.5,185.7" fill="#0f0" fill-opacity="1.000" style="mix-blend-mode:plus-lighter" shape-rendering="crispEdges"/><polygon points="1805.5,153.0 1837.0,153.0 1805.5,185.7" fill="url(#n135)" style="mix-blend-mode:plus-lighter" shape-rendering="crispEdges"/><polygon points="1837.0,153.0 1837.0,185.7 1805.5,185.7" fill="url(#n136)" style="mix-blend-mode:plus-lighter" shape-rendering="crispEdges"/><polygon points="1837.0,153.0 1837.0,185.7 1805.5,185.7" fill="#0f0" fill-opacity="1.000" style="mix-blend-mode:plus-lighter" shape-rendering="crispEdges"/><polygon points="1837.0,153.0 1837.0,185.7 1805.5,185.7" fill="url(#n137)" style="mix-blend-mode:plus-lighter" shape-rendering="crispEdges"/><polygon points="1805.5,185.7 1837.0,185.7 1805.5,218.3" fill="url(#n138)" style="mix-blend-mode:plus-lighter" shape-rendering="crispEdges"/><polygon points="1805.5,185.7 1837.0,185.7 1805.5,218.3" fill="#0f0" fill-opacity="1.000" style="mix-blend-mode:plus-lighter" shape-rendering="crispEdges"/><polygon points="1805.5,185.7 1837.0,185.7 1805.5,218.3" fill="url(#n139)" style="mix-blend-mode:plus-lighter" shape-rendering="crispEdges"/><polygon points="1837.0,185.7 1837.0,218.3 1805.5,218.3" fill="url(#n140)" style="mix-blend-mode:plus-lighter" shape-rendering="crispEdges"/><polygon points="1837.0,185.7 1837.0,218.3 1805.5,218.3" fill="#0f0" fill-opacity="1.000" style="mix-blend-mode:plus-lighter" shape-rendering="crispEdges"/><polygon points="1837.0,185.7 1837.0,218.3 1805.5,218.3" fill="url(#n141)" style="mix-blend-mode:plus-lighter" shape-rendering="crispEdges"/><polygon points="1805.5,218.3 1837.0,218.3 1805.5,251.0" fill="url(#n142)" style="mix-blend-mode:plus-lighter" shape-rendering="crispEdges"/><polygon points="1805.5,218.3 1837.0,218.3 1805.5,251.0" fill="#0f0" fill-opacity="1.000" style="mix-blend-mode:plus-lighter" shape-rendering="crispEdges"/><polygon points="1805.5,218.3 1837.0,218.3 1805.5,251.0" fill="url(#n143)" style="mix-blend-mode:plus-lighter" shape-rendering="crispEdges"/><polygon points="1837.0,218.3 1837.0,251.0 1805.5,251.0" fill="url(#n144)" style="mix-blend-mode:plus-lighter" shape-rendering="crispEdges"/><polygon points="1837.0,218.3 1837.0,251.0 1805.5,251.0" fill="url(#n145)" style="mix-blend-mode:plus-lighter" shape-rendering="crispEdges"/><polygon points="1837.0,218.3 1837.0,251.0 1805.5,251.0" fill="url(#n146)" style="mix-blend-mode:plus-lighter" shape-rendering="crispEdges"/><polygon points="1805.5,251.0 1837.0,251.0 1805.5,283.7" fill="url(#n147)" style="mix-blend-mode:plus-lighter" shape-rendering="crispEdges"/><polygon points="1805.5,251.0 1837.0,251.0 1805.5,283.7" fill="url(#n148)" style="mix-blend-mode:plus-lighter" shape-rendering="crispEdges"/><polygon points="1805.5,251.0 1837.0,251.0 1805.5,283.7" fill="url(#n149)" style="mix-blend-mode:plus-lighter" shape-rendering="crispEdges"/><polygon points="1837.0,251.0 1837.0,283.7 1805.5,283.7" fill="#f00" fill-opacity="1.000" style="mix-blend-mode:plus-lighter" shape-rendering="crispEdges"/><polygon points="1837.0,251.0 1837.0,283.7 1805.5,283.7" fill="url(#n150)" style="mix-blend-mode:plus-lighter" shape-rendering="crispEdges"/><polygon points="1837.0,251.0 1837.0,283.7 1805.5,283.7" fill="url(#n151)" style="mix-blend-mode:plus-lighter" shape-rendering="crispEdges"/><polygon points="1805.5,283.7 1837.0,283.7 1805.5,316.3" fill="#f00" fill-opacity="1.000" style="mix-blend-mode:plus-lighter" shape-rendering="crispEdges"/><polygon points="1805.5,283.7 1837.0,283.7 1805.5,316.3" fill="url(#n152)" style="mix-blend-mode:plus-lighter" shape-rendering="crispEdges"/><polygon points="1805.5,283.7 1837.0,283.7 1805.5,316.3" fill="url(#n153)" style="mix-blend-mode:plus-lighter" shape-rendering="crispEdges"/><polygon points="1837.0,283.7 1837.0,316.3 1805.5,316.3" fill="#f00" fill-opacity="1.000" style="mix-blend-mode:plus-lighter" shape-rendering="crispEdges"/><polygon points="1837.0,283.7 1837.0,316.3 1805.5,316.3" fill="url(#n154)" style="mix-blend-mode:plus-lighter" shape-rendering="crispEdges"/><polygon points="1837.0,283.7 1837.0,316.3 1805.5,316.3" fill="url(#n155)" style="mix-blend-mode:plus-lighter" shape-rendering="crispEdges"/><polygon points="1805.5,316.3 1837.0,316.3 1805.5,349.0" fill="#f00" fill-opacity="1.000" style="mix-blend-mode:plus-lighter" shape-rendering="crispEdges"/><polygon points="1805.5,316.3 1837.0,316.3 1805.5,349.0" fill="url(#n156)" style="mix-blend-mode:plus-lighter" shape-rendering="crispEdges"/><polygon points="1805.5,316.3 1837.0,316.3 1805.5,349.0" fill="url(#n157)" style="mix-blend-mode:plus-lighter" shape-rendering="crispEdges"/><polygon points="1837.0,316.3 1837.0,349.0 1805.5,349.0" fill="#f00" fill-opacity="1.000" style="mix-blend-mode:plus-lighter" shape-rendering="crispEdges"/><polygon points="1837.0,316.3 1837.0,349.0 1805.5,349.0" fill="url(#n158)" style="mix-blend-mode:plus-lighter" shape-rendering="crispEdges"/><polygon points="1837.0,316.3 1837.0,349.0 1805.5,349.0" fill="url(#n159)" style="mix-blend-mode:plus-lighter" shape-rendering="crispEdges"/><polygon points="1837.0,153.0 1868.5,153.0 1837.0,185.7" fill="url(#n160)" style="mix-blend-mode:plus-lighter" shape-rendering="crispEdges"/><polygon points="1837.0,153.0 1868.5,153.0 1837.0,185.7" fill="#0f0" fill-opacity="1.000" style="mix-blend-mode:plus-lighter" shape-rendering="crispEdges"/><polygon points="1837.0,153.0 1868.5,153.0 1837.0,185.7" fill="url(#n161)" style="mix-blend-mode:plus-lighter" shape-rendering="crispEdges"/><polygon points="1868.5,153.0 1868.5,185.7 1837.0,185.7" fill="url(#n162)" style="mix-blend-mode:plus-lighter" shape-rendering="crispEdges"/><polygon points="1868.5,153.0 1868.5,185.7 1837.0,185.7" fill="#0f0" fill-opacity="1.000" style="mix-blend-mode:plus-lighter" shape-rendering="crispEdges"/><polygon points="1868.5,153.0 1868.5,185.7 1837.0,185.7" fill="url(#n163)" style="mix-blend-mode:plus-lighter" shape-rendering="crispEdges"/><polygon points="1837.0,185.7 1868.5,185.7 1837.0,218.3" fill="url(#n164)" style="mix-blend-mode:plus-lighter" shape-rendering="crispEdges"/><polygon points="1837.0,185.7 1868.5,185.7 1837.0,218.3" fill="#0f0" fill-opacity="1.000" style="mix-blend-mode:plus-lighter" shape-rendering="crispEdges"/><polygon points="1837.0,185.7 1868.5,185.7 1837.0,218.3" fill="url(#n165)" style="mix-blend-mode:plus-lighter" shape-rendering="crispEdges"/><polygon points="1868.5,185.7 1868.5,218.3 1837.0,218.3" fill="url(#n166)" style="mix-blend-mode:plus-lighter" shape-rendering="crispEdges"/><polygon points="1868.5,185.7 1868.5,218.3 1837.0,218.3" fill="url(#n167)" style="mix-blend-mode:plus-lighter" shape-rendering="crispEdges"/><polygon points="1868.5,185.7 1868.5,218.3 1837.0,218.3" fill="url(#n168)" style="mix-blend-mode:plus-lighter" shape-rendering="crispEdges"/><polygon points="1837.0,218.3 1868.5,218.3 1837.0,251.0" fill="url(#n169)" style="mix-blend-mode:plus-lighter" shape-rendering="crispEdges"/><polygon points="1837.0,218.3 1868.5,218.3 1837.0,251.0" fill="url(#n170)" style="mix-blend-mode:plus-lighter" shape-rendering="crispEdges"/><polygon points="1837.0,218.3 1868.5,218.3 1837.0,251.0" fill="url(#n171)" style="mix-blend-mode:plus-lighter" shape-rendering="crispEdges"/><polygon points="1868.5,218.3 1868.5,251.0 1837.0,251.0" fill="#f00" fill-opacity="1.000" style="mix-blend-mode:plus-lighter" shape-rendering="crispEdges"/><polygon points="1868.5,218.3 1868.5,251.0 1837.0,251.0" fill="url(#n172)" style="mix-blend-mode:plus-lighter" shape-rendering="crispEdges"/><polygon points="1868.5,218.3 1868.5,251.0 1837.0,251.0" fill="url(#n173)" style="mix-blend-mode:plus-lighter" shape-rendering="crispEdges"/><polygon points="1837.0,251.0 1868.5,251.0 1837.0,283.7" fill="#f00" fill-opacity="1.000" style="mix-blend-mode:plus-lighter" shape-rendering="crispEdges"/><polygon points="1837.0,251.0 1868.5,251.0 1837.0,283.7" fill="url(#n174)" style="mix-blend-mode:plus-lighter" shape-rendering="crispEdges"/><polygon points="1837.0,251.0 1868.5,251.0 1837.0,283.7" fill="url(#n175)" style="mix-blend-mode:plus-lighter" shape-rendering="crispEdges"/><polygon points="1868.5,251.0 1868.5,283.7 1837.0,283.7" fill="#f00" fill-opacity="1.000" style="mix-blend-mode:plus-lighter" shape-rendering="crispEdges"/><polygon points="1868.5,251.0 1868.5,283.7 1837.0,283.7" fill="url(#n176)" style="mix-blend-mode:plus-lighter" shape-rendering="crispEdges"/><polygon points="1868.5,251.0 1868.5,283.7 1837.0,283.7" fill="url(#n177)" style="mix-blend-mode:plus-lighter" shape-rendering="crispEdges"/><polygon points="1837.0,283.7 1868.5,283.7 1837.0,316.3" fill="#f00" fill-opacity="1.000" style="mix-blend-mode:plus-lighter" shape-rendering="crispEdges"/><polygon points="1837.0,283.7 1868.5,283.7 1837.0,316.3" fill="url(#n178)" style="mix-blend-mode:plus-lighter" shape-rendering="crispEdges"/><polygon points="1837.0,283.7 1868.5,283.7 1837.0,316.3" fill="url(#n179)" style="mix-blend-mode:plus-lighter" shape-rendering="crispEdges"/><polygon points="1868.5,283.7 1868.5,316.3 1837.0,316.3" fill="#f00" fill-opacity="1.000" style="mix-blend-mode:plus-lighter" shape-rendering="crispEdges"/><polygon points="1868.5,283.7 1868.5,316.3 1837.0,316.3" fill="url(#n180)" style="mix-blend-mode:plus-lighter" shape-rendering="crispEdges"/><polygon points="1868.5,283.7 1868.5,316.3 1837.0,316.3" fill="url(#n181)" style="mix-blend-mode:plus-lighter" shape-rendering="crispEdges"/><polygon points="1837.0,316.3 1868.5,316.3 1837.0,349.0" fill="#f00" fill-opacity="1.000" style="mix-blend-mode:plus-lighter" shape-rendering="crispEdges"/><polygon points="1837.0,316.3 1868.5,316.3 1837.0,349.0" fill="url(#n182)" style="mix-blend-mode:plus-lighter" shape-rendering="crispEdges"/><polygon points="1837.0,316.3 1868.5,316.3 1837.0,349.0" fill="url(#n183)" style="mix-blend-mode:plus-lighter" shape-rendering="crispEdges"/><polygon points="1868.5,316.3 1868.5,349.0 1837.0,349.0" fill="#f00" fill-opacity="1.000" style="mix-blend-mode:plus-lighter" shape-rendering="crispEdges"/><polygon points="1868.5,316.3 1868.5,349.0 1837.0,349.0" fill="url(#n184)" style="mix-blend-mode:plus-lighter" shape-rendering="crispEdges"/><polygon points="1868.5,316.3 1868.5,349.0 1837.0,349.0" fill="url(#n185)" style="mix-blend-mode:plus-lighter" shape-rendering="crispEdges"/><polygon points="1868.5,153.0 1900.0,153.0 1868.5,185.7" fill="url(#n186)" style="mix-blend-mode:plus-lighter" shape-rendering="crispEdges"/><polygon points="1868.5,153.0 1900.0,153.0 1868.5,185.7" fill="#0f0" fill-opacity="0.998" style="mix-blend-mode:plus-lighter" shape-rendering="crispEdges"/><polygon points="1868.5,153.0 1900.0,153.0 1868.5,185.7" fill="url(#n187)" style="mix-blend-mode:plus-lighter" shape-rendering="crispEdges"/><polygon points="1900.0,153.0 1900.0,185.7 1868.5,185.7" fill="url(#n188)" style="mix-blend-mode:plus-lighter" shape-rendering="crispEdges"/><polygon points="1900.0,153.0 1900.0,185.7 1868.5,185.7" fill="url(#n189)" style="mix-blend-mode:plus-lighter" shape-rendering="crispEdges"/><polygon points="1900.0,153.0 1900.0,185.7 1868.5,185.7" fill="url(#n190)" style="mix-blend-mode:plus-lighter" shape-rendering="crispEdges"/><polygon points="1868.5,185.7 1900.0,185.7 1868.5,218.3" fill="url(#n191)" style="mix-blend-mode:plus-lighter" shape-rendering="crispEdges"/><polygon points="1868.5,185.7 1900.0,185.7 1868.5,218.3" fill="url(#n192)" style="mix-blend-mode:plus-lighter" shape-rendering="crispEdges"/><polygon points="1868.5,185.7 1900.0,185.7 1868.5,218.3" fill="url(#n193)" style="mix-blend-mode:plus-lighter" shape-rendering="crispEdges"/><polygon points="1900.0,185.7 1900.0,218.3 1868.5,218.3" fill="#f00" fill-opacity="1.000" style="mix-blend-mode:plus-lighter" shape-rendering="crispEdges"/><polygon points="1900.0,185.7 1900.0,218.3 1868.5,218.3" fill="url(#n194)" style="mix-blend-mode:plus-lighter" shape-rendering="crispEdges"/><polygon points="1900.0,185.7 1900.0,218.3 1868.5,218.3" fill="url(#n195)" style="mix-blend-mode:plus-lighter" shape-rendering="crispEdges"/><polygon points="1868.5,218.3 1900.0,218.3 1868.5,251.0" fill="#f00" fill-opacity="1.000" style="mix-blend-mode:plus-lighter" shape-rendering="crispEdges"/><polygon points="1868.5,218.3 1900.0,218.3 1868.5,251.0" fill="url(#n196)" style="mix-blend-mode:plus-lighter" shape-rendering="crispEdges"/><polygon points="1868.5,218.3 1900.0,218.3 1868.5,251.0" fill="url(#n197)" style="mix-blend-mode:plus-lighter" shape-rendering="crispEdges"/><polygon points="1900.0,218.3 1900.0,251.0 1868.5,251.0" fill="#f00" fill-opacity="1.000" style="mix-blend-mode:plus-lighter" shape-rendering="crispEdges"/><polygon points="1900.0,218.3 1900.0,251.0 1868.5,251.0" fill="url(#n198)" style="mix-blend-mode:plus-lighter" shape-rendering="crispEdges"/><polygon points="1900.0,218.3 1900.0,251.0 1868.5,251.0" fill="url(#n199)" style="mix-blend-mode:plus-lighter" shape-rendering="crispEdges"/><polygon points="1868.5,251.0 1900.0,251.0 1868.5,283.7" fill="#f00" fill-opacity="1.000" style="mix-blend-mode:plus-lighter" shape-rendering="crispEdges"/><polygon points="1868.5,251.0 1900.0,251.0 1868.5,283.7" fill="url(#n200)" style="mix-blend-mode:plus-lighter" shape-rendering="crispEdges"/><polygon points="1868.5,251.0 1900.0,251.0 1868.5,283.7" fill="url(#n201)" style="mix-blend-mode:plus-lighter" shape-rendering="crispEdges"/><polygon points="1900.0,251.0 1900.0,283.7 1868.5,283.7" fill="#f00" fill-opacity="1.000" style="mix-blend-mode:plus-lighter" shape-rendering="crispEdges"/><polygon points="1900.0,251.0 1900.0,283.7 1868.5,283.7" fill="url(#n202)" style="mix-blend-mode:plus-lighter" shape-rendering="crispEdges"/><polygon points="1900.0,251.0 1900.0,283.7 1868.5,283.7" fill="url(#n203)" style="mix-blend-mode:plus-lighter" shape-rendering="crispEdges"/><polygon points="1868.5,283.7 1900.0,283.7 1868.5,316.3" fill="#f00" fill-opacity="1.000" style="mix-blend-mode:plus-lighter" shape-rendering="crispEdges"/><polygon points="1868.5,283.7 1900.0,283.7 1868.5,316.3" fill="url(#n204)" style="mix-blend-mode:plus-lighter" shape-rendering="crispEdges"/><polygon points="1868.5,283.7 1900.0,283.7 1868.5,316.3" fill="url(#n205)" style="mix-blend-mode:plus-lighter" shape-rendering="crispEdges"/><polygon points="1900.0,283.7 1900.0,316.3 1868.5,316.3" fill="#f00" fill-opacity="1.000" style="mix-blend-mode:plus-lighter" shape-rendering="crispEdges"/><polygon points="1900.0,283.7 1900.0,316.3 1868.5,316.3" fill="url(#n206)" style="mix-blend-mode:plus-lighter" shape-rendering="crispEdges"/><polygon points="1900.0,283.7 1900.0,316.3 1868.5,316.3" fill="url(#n207)" style="mix-blend-mode:plus-lighter" shape-rendering="crispEdges"/><polygon points="1868.5,316.3 1900.0,316.3 1868.5,349.0" fill="#f00" fill-opacity="1.000" style="mix-blend-mode:plus-lighter" shape-rendering="crispEdges"/><polygon points="1868.5,316.3 1900.0,316.3 1868.5,349.0" fill="url(#n208)" style="mix-blend-mode:plus-lighter" shape-rendering="crispEdges"/><polygon points="1868.5,316.3 1900.0,316.3 1868.5,349.0" fill="url(#n209)" style="mix-blend-mode:plus-lighter" shape-rendering="crispEdges"/><polygon points="1900.0,316.3 1900.0,349.0 1868.5,349.0" fill="#f00" fill-opacity="1.000" style="mix-blend-mode:plus-lighter" shape-rendering="crispEdges"/><polygon points="1900.0,316.3 1900.0,349.0 1868.5,349.0" fill="url(#n210)" style="mix-blend-mode:plus-lighter" shape-rendering="crispEdges"/><polygon points="1900.0,316.3 1900.0,349.0 1868.5,349.0" fill="url(#n211)" style="mix-blend-mode:plus-lighter" shape-rendering="crispEdges"/></g><rect x="1648" y="153" width="252" height="196" fill="none" stroke="#c8c8c8" stroke-width="1" stroke-opacity="0.6"/><rect x="1765.5" y="243" width="15" height="15" fill="none" stroke="#222" stroke-width="2.2"/><circle cx="1722" cy="333" r="5" fill="#ddd" stroke="#333" stroke-width="1.5"/><circle cx="1721" cy="337" r="5" fill="#fff" stroke="#333" stroke-width="1.5"/><rect x="1612" y="634" width="292" height="31" fill="#2e2e2e" /><text x="1613" y="657.5" font-size="22.5" fill="#f2f2f2" text-anchor="start" font-weight="normal" textLength="255" lengthAdjust="spacingAndGlyphs"  stroke="#f2f2f2" stroke-width="0.4">Gamut Coverage:  83.7%</text><rect x="723" y="723" width="787" height="40" fill="#181818" /><rect x="740" y="723" width="770" height="40" fill="url(#g33)" /><rect x="723" y="723" width="17" height="40" fill="#000" /><text x="828" y="752.5" font-size="23.5" fill="#ececec" stroke="#ececec" stroke-width="0.35" transform="translate(828 0) scale(0.78 1) translate(-828 0)">White</text><text x="919" y="752.5" font-size="23.5" fill="#ececec" stroke="#ececec" stroke-width="0.35" transform="translate(919 0) scale(0.78 1) translate(-919 0)">Red</text><text x="999" y="752.5" font-size="23.5" fill="#ececec" stroke="#ececec" stroke-width="0.35" transform="translate(999 0) scale(0.78 1) translate(-999 0)">Green</text><text x="1079.5" y="752.5" font-size="23.5" fill="#ececec" stroke="#ececec" stroke-width="0.35" transform="translate(1079.5 0) scale(0.78 1) translate(-1079.5 0)">Blue</text><text x="1159.5" y="752.5" font-size="23.5" fill="#ececec" stroke="#ececec" stroke-width="0.35" transform="translate(1159.5 0) scale(0.78 1) translate(-1159.5 0)">Cyan</text><text x="1251" y="752.5" font-size="23.5" fill="#ececec" stroke="#ececec" stroke-width="0.35" transform="translate(1251 0) scale(0.78 1) translate(-1251 0)">Magenta</text><text x="1333" y="752.5" font-size="23.5" fill="#ececec" stroke="#ececec" stroke-width="0.35" transform="translate(1333 0) scale(0.78 1) translate(-1333 0)">Yellow</text><text x="1424" y="752.5" font-size="23.5" fill="#ececec" stroke="#ececec" stroke-width="0.35" transform="translate(1424 0) scale(0.78 1) translate(-1424 0)">100W</text><rect x="740" y="763" width="770" height="38" fill="#3c3c3c" /><rect x="723" y="763" width="17" height="38" fill="#2c2c2c" /><text x="744.5" y="792.5" font-size="25.5" fill="#e8e8e8" transform="translate(744.5 0) scale(0.7 1) translate(-744.5 0)">x: CIE31</text><text x="828" y="792.5" font-size="25.5" fill="#e8e8e8" transform="translate(828 0) scale(0.735 1) translate(-828 0)">0.2914</text><text x="919" y="792.5" font-size="25.5" fill="#e8e8e8" transform="translate(919 0) scale(0.735 1) translate(-919 0)">0.6572</text><text x="999" y="792.5" font-size="25.5" fill="#e8e8e8" transform="translate(999 0) scale(0.735 1) translate(-999 0)">0.2893</text><text x="1079.5" y="792.5" font-size="25.5" fill="#e8e8e8" transform="translate(1079.5 0) scale(0.735 1) translate(-1079.5 0)">0.1518</text><text x="1159.5" y="792.5" font-size="25.5" fill="#e8e8e8" transform="translate(1159.5 0) scale(0.735 1) translate(-1159.5 0)">0.2118</text><text x="1251" y="792.5" font-size="25.5" fill="#e8e8e8" transform="translate(1251 0) scale(0.735 1) translate(-1251 0)">0.2450</text><text x="1333" y="792.5" font-size="25.5" fill="#e8e8e8" transform="translate(1333 0) scale(0.735 1) translate(-1333 0)">0.4240</text><text x="1424" y="792.5" font-size="25.5" fill="#e8e8e8" transform="translate(1424 0) scale(0.735 1) translate(-1424 0)">0.2908</text><rect x="740" y="801" width="770" height="38.5" fill="#8c8c8c" /><rect x="723" y="801" width="17" height="38.5" fill="#2c2c2c" /><text x="744.5" y="830.5" font-size="25.5" fill="#f4f4f4" transform="translate(744.5 0) scale(0.7 1) translate(-744.5 0)">y: CIE31</text><text x="828" y="830.5" font-size="25.5" fill="#f4f4f4" transform="translate(828 0) scale(0.735 1) translate(-828 0)">0.3027</text><text x="919" y="830.5" font-size="25.5" fill="#f4f4f4" transform="translate(919 0) scale(0.735 1) translate(-919 0)">0.3036</text><text x="999" y="830.5" font-size="25.5" fill="#f4f4f4" transform="translate(999 0) scale(0.735 1) translate(-999 0)">0.6030</text><text x="1079.5" y="830.5" font-size="25.5" fill="#f4f4f4" transform="translate(1079.5 0) scale(0.735 1) translate(-1079.5 0)">0.0604</text><text x="1159.5" y="830.5" font-size="25.5" fill="#f4f4f4" transform="translate(1159.5 0) scale(0.735 1) translate(-1159.5 0)">0.2986</text><text x="1251" y="830.5" font-size="25.5" fill="#f4f4f4" transform="translate(1251 0) scale(0.735 1) translate(-1251 0)">0.1046</text><text x="1333" y="830.5" font-size="25.5" fill="#f4f4f4" transform="translate(1333 0) scale(0.735 1) translate(-1333 0)">0.5004</text><text x="1424" y="830.5" font-size="25.5" fill="#f4f4f4" transform="translate(1424 0) scale(0.735 1) translate(-1424 0)">0.2998</text><rect x="740" y="839.5" width="770" height="38.5" fill="#3c3c3c" /><rect x="723" y="839.5" width="17" height="38.5" fill="#2c2c2c" /><text x="744.5" y="869.0" font-size="25.5" fill="#e8e8e8" transform="translate(744.5 0) scale(0.7 1) translate(-744.5 0)">Y</text><text x="828" y="869.0" font-size="25.5" fill="#e8e8e8" transform="translate(828 0) scale(0.735 1) translate(-828 0)">113.5338</text><text x="919" y="869.0" font-size="25.5" fill="#e8e8e8" transform="translate(919 0) scale(0.735 1) translate(-919 0)">20.0817</text><text x="999" y="869.0" font-size="25.5" fill="#e8e8e8" transform="translate(999 0) scale(0.735 1) translate(-999 0)">96.6096</text><text x="1079.5" y="869.0" font-size="25.5" fill="#e8e8e8" transform="translate(1079.5 0) scale(0.735 1) translate(-1079.5 0)">12.6448</text><text x="1159.5" y="869.0" font-size="25.5" fill="#e8e8e8" transform="translate(1159.5 0) scale(0.735 1) translate(-1159.5 0)">111.0277</text><text x="1251" y="869.0" font-size="25.5" fill="#e8e8e8" transform="translate(1251 0) scale(0.735 1) translate(-1251 0)">29.0058</text><text x="1333" y="869.0" font-size="25.5" fill="#e8e8e8" transform="translate(1333 0) scale(0.735 1) translate(-1333 0)">98.7672</text><text x="1424" y="869.0" font-size="25.5" fill="#e8e8e8" transform="translate(1424 0) scale(0.735 1) translate(-1424 0)">191.2032</text><rect x="740" y="878" width="770" height="39" fill="#8c8c8c" /><rect x="723" y="878" width="17" height="39" fill="#2c2c2c" /><text x="744.5" y="907.5" font-size="25.5" fill="#f4f4f4" transform="translate(744.5 0) scale(0.7 1) translate(-744.5 0)">Target Y</text><text x="828" y="907.5" font-size="25.5" fill="#f4f4f4" transform="translate(828 0) scale(0.735 1) translate(-828 0)">113.5338</text><text x="919" y="907.5" font-size="25.5" fill="#f4f4f4" transform="translate(919 0) scale(0.735 1) translate(-919 0)">23.7898</text><text x="999" y="907.5" font-size="25.5" fill="#f4f4f4" transform="translate(999 0) scale(0.735 1) translate(-999 0)">81.9165</text><text x="1079.5" y="907.5" font-size="25.5" fill="#f4f4f4" transform="translate(1079.5 0) scale(0.735 1) translate(-1079.5 0)">7.8275</text><text x="1159.5" y="907.5" font-size="25.5" fill="#f4f4f4" transform="translate(1159.5 0) scale(0.735 1) translate(-1159.5 0)">89.7440</text><text x="1251" y="907.5" font-size="25.5" fill="#f4f4f4" transform="translate(1251 0) scale(0.735 1) translate(-1251 0)">31.6173</text><text x="1333" y="907.5" font-size="25.5" fill="#f4f4f4" transform="translate(1333 0) scale(0.735 1) translate(-1333 0)">105.7063</text><text x="1424" y="907.5" font-size="25.5" fill="#f4f4f4" transform="translate(1424 0) scale(0.735 1) translate(-1424 0)">191.2032</text><rect x="740" y="917" width="770" height="38" fill="#3c3c3c" /><rect x="723" y="917" width="17" height="38" fill="#2c2c2c" /><text x="744.5" y="946.5" font-size="25.5" fill="#e8e8e8" transform="translate(744.5 0) scale(0.7 1) translate(-744.5 0)">ΔE 2000</text><text x="828" y="946.5" font-size="25.5" fill="#e8e8e8" transform="translate(828 0) scale(0.735 1) translate(-828 0)">16.1170</text><text x="919" y="946.5" font-size="25.5" fill="#e8e8e8" transform="translate(919 0) scale(0.735 1) translate(-919 0)">10.1950</text><text x="999" y="946.5" font-size="25.5" fill="#e8e8e8" transform="translate(999 0) scale(0.735 1) translate(-999 0)">5.8186</text><text x="1079.5" y="946.5" font-size="25.5" fill="#e8e8e8" transform="translate(1079.5 0) scale(0.735 1) translate(-1079.5 0)">6.0141</text><text x="1159.5" y="946.5" font-size="25.5" fill="#e8e8e8" transform="translate(1159.5 0) scale(0.735 1) translate(-1159.5 0)">16.1997</text><text x="1251" y="946.5" font-size="25.5" fill="#e8e8e8" transform="translate(1251 0) scale(0.735 1) translate(-1251 0)">9.8661</text><text x="1333" y="946.5" font-size="25.5" fill="#e8e8e8" transform="translate(1333 0) scale(0.735 1) translate(-1333 0)">7.3446</text><text x="1424" y="946.5" font-size="25.5" fill="#e8e8e8" transform="translate(1424 0) scale(0.735 1) translate(-1424 0)">18.5985</text><rect x="0" y="963" width="1920" height="72" fill="url(#g34)" /><rect x="0" y="962" width="1920" height="1.5" fill="#262626" /><rect x="2" y="966" width="168" height="72" rx="5" fill="url(#g35)" stroke="#555" stroke-width="1"/><rect x="8.5" y="972" width="156" height="40.5" rx="5" fill="#c4c4c4" stroke="#8a8a8a" stroke-width="1"/><text x="86" y="1029" font-size="12" fill="#2c2c2c" text-anchor="middle" font-weight="bold" >White</text><rect x="173" y="966" width="168" height="72" rx="5" fill="url(#g36)" stroke="#555" stroke-width="1"/><rect x="179.5" y="972" width="156" height="40.5" rx="5" fill="#c00000" stroke="#8a8a8a" stroke-width="1"/><text x="257" y="1029" font-size="12" fill="#2c2c2c" text-anchor="middle" font-weight="bold" >Red</text><rect x="344" y="966" width="168" height="72" rx="5" fill="url(#g37)" stroke="#555" stroke-width="1"/><rect x="350.5" y="972" width="156" height="40.5" rx="5" fill="#00c000" stroke="#8a8a8a" stroke-width="1"/><text x="428" y="1029" font-size="12" fill="#2c2c2c" text-anchor="middle" font-weight="bold" >Green</text><rect x="515" y="966" width="168" height="72" rx="5" fill="url(#g38)" stroke="#555" stroke-width="1"/><rect x="521.5" y="972" width="156" height="40.5" rx="5" fill="#0000c0" stroke="#8a8a8a" stroke-width="1"/><text x="599" y="1029" font-size="12" fill="#2c2c2c" text-anchor="middle" font-weight="bold" >Blue</text><rect x="686" y="966" width="168" height="72" rx="5" fill="url(#g39)" stroke="#555" stroke-width="1"/><rect x="692.5" y="972" width="156" height="40.5" rx="5" fill="#00c0c8" stroke="#8a8a8a" stroke-width="1"/><text x="770" y="1029" font-size="12" fill="#2c2c2c" text-anchor="middle" font-weight="bold" >Cyan</text><rect x="857" y="966" width="168" height="72" rx="5" fill="url(#g40)" stroke="#555" stroke-width="1"/><rect x="863.5" y="972" width="156" height="40.5" rx="5" fill="#c000c0" stroke="#8a8a8a" stroke-width="1"/><text x="941" y="1029" font-size="12" fill="#2c2c2c" text-anchor="middle" font-weight="bold" >Magenta</text><rect x="1028" y="966" width="168" height="72" rx="5" fill="url(#g41)" stroke="#555" stroke-width="1"/><rect x="1034.5" y="972" width="156" height="40.5" rx="5" fill="#c8c000" stroke="#8a8a8a" stroke-width="1"/><text x="1112" y="1029" font-size="12" fill="#2c2c2c" text-anchor="middle" font-weight="bold" >Yellow</text><rect x="1198" y="965.5" width="170" height="72" rx="5" fill="#202020"/><rect x="1204" y="971" width="158" height="41.5" rx="5" fill="#fff"/><text x="1283" y="1029" font-size="12" fill="#f4f4f4" text-anchor="middle" font-weight="bold" >100W</text><rect x="1557" y="966" width="54" height="75" rx="4" fill="url(#g42)" stroke="#444"/><line x1="1557" y1="986" x2="1611" y2="986" stroke="#555" stroke-width="1.5" /><circle cx="1583.5" cy="975" r="7" fill="#8a8a8a"/><path d="M1578.5 978 L1583.5 972.5 L1588.5 978 Z" fill="#222"/><rect x="1566.5" y="994" width="33.5" height="32.5" rx="4" fill="#bdbdbd" stroke="#1a1a1a" stroke-width="2.5"/><rect x="1575" y="1002.5" width="16.5" height="15" fill="#000"/><rect x="1613.0" y="966" width="50.8" height="34" fill="url(#g43)" stroke="#555" stroke-width="1"/><circle cx="1638.4" cy="982" r="10" fill="#9a9a9a"/><rect x="1663.8" y="966" width="50.8" height="34" fill="url(#g44)" stroke="#555" stroke-width="1"/><circle cx="1689.2" cy="982" r="10" fill="#9a9a9a"/><rect x="1714.6" y="966" width="50.8" height="34" fill="url(#g45)" stroke="#555" stroke-width="1"/><circle cx="1740.0" cy="982" r="10" fill="#9a9a9a"/><rect x="1765.4" y="966" width="50.8" height="34" fill="url(#g46)" stroke="#555" stroke-width="1"/><circle cx="1790.8000000000002" cy="982" r="10" fill="#9a9a9a"/><rect x="1816.2" y="966" width="50.8" height="34" fill="url(#g47)" stroke="#555" stroke-width="1"/><circle cx="1841.6000000000001" cy="982" r="10" fill="#9a9a9a"/><rect x="1632" y="977" width="10" height="10" fill="#222"/><path d="M1684 975 L1694 982 L1684 989 Z" fill="#222"/><path d="M1735 975 v14 M1745 975 v14" stroke="#222" stroke-width="2.5"/><path d="M1738 982 h4" stroke="#222" stroke-width="2"/><path d="M1790 982 c-3 -5 -9 -5 -9 0 c0 5 6 5 9 0 c3 -5 9 -5 9 0 c0 5 -6 5 -9 0" fill="none" stroke="#222" stroke-width="2.5"/><path d="M1834 980 a7 7 0 0 1 13 -1 M1847 984 a7 7 0 0 1 -13 1" fill="none" stroke="#222" stroke-width="2.5"/><rect x="1867" y="966" width="53" height="34" fill="#2a2a2a" /><circle cx="1893" cy="982" r="11" fill="#242424"/><rect x="1613" y="1000" width="305" height="40" rx="3" fill="url(#g48)" stroke="#555"/><line x1="1765" y1="1000" x2="1765" y2="1035" stroke="#666" stroke-width="1.5" /><circle cx="1647" cy="1018" r="10" fill="#9c9c9c"/><text x="1647" y="1024" font-size="17" font-weight="bold" fill="#333" text-anchor="middle">«</text><circle cx="1887" cy="1018" r="10" fill="#9c9c9c"/><text x="1887" y="1024" font-size="17" font-weight="bold" fill="#333" text-anchor="middle">»</text><text x="1676" y="1028.5" font-size="29" fill="#303030" text-anchor="start" font-weight="normal" textLength="58" lengthAdjust="spacingAndGlyphs"  stroke="#303030" stroke-width="0.7">Back</text><text x="1797" y="1028.5" font-size="29" fill="#303030" text-anchor="start" font-weight="normal" textLength="58" lengthAdjust="spacingAndGlyphs"  stroke="#303030" stroke-width="0.7">Next</text></svg></body></html>
